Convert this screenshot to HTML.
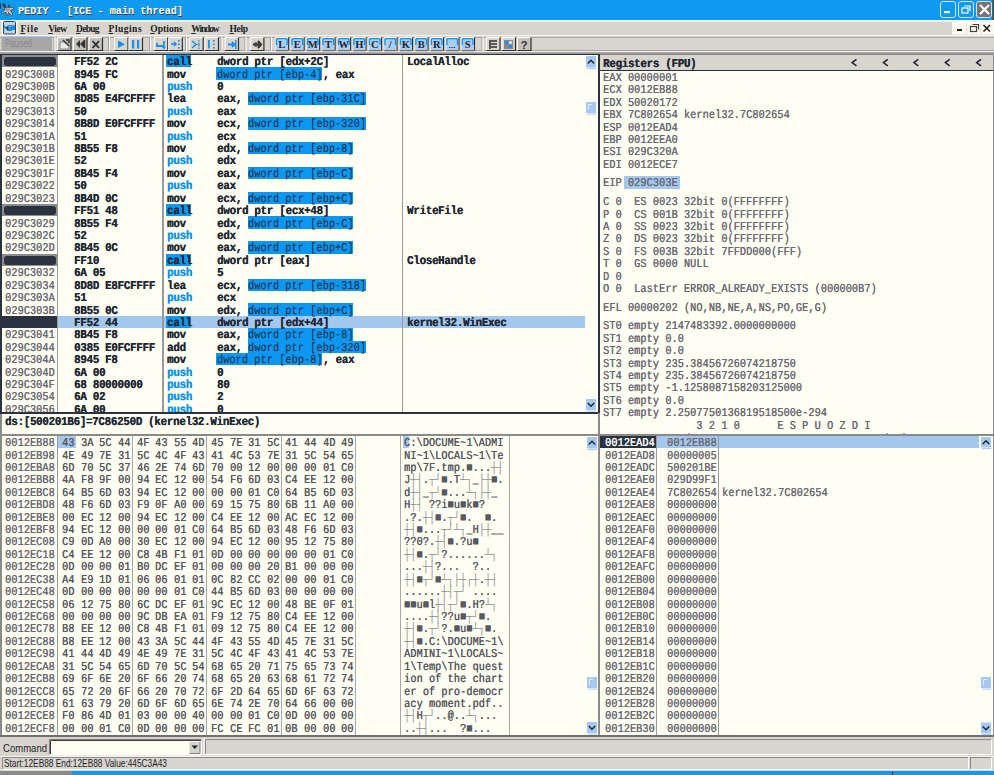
<!DOCTYPE html>
<html><head><meta charset="utf-8"><style>
html,body{margin:0;padding:0;width:994px;height:775px;overflow:hidden;background:#d6d3ce;position:relative}
div{position:absolute}
.t{white-space:pre}
</style></head><body>
<svg style="position:absolute;left:0;top:0" width="994" height="54" viewBox="0 0 994 54"><rect x="0" y="0" width="994" height="20" fill="#0e9af0"/><rect x="0" y="3" width="0.9" height="5.5" fill="#3a2a2a"/><path d="M2.3 3.6 L4.2 3.2 L5.6 5 L5.8 7.6 L4.4 8 L3 6 Z" fill="#2e3440"/><path d="M8.3 4.4 H9.6 V7.8 H8.3 Z" fill="#2e3440"/><path d="M4.6 8 L9 7.6 L13.6 7.3 L13.8 9.2 L10.4 10.2 L12.8 14.6 L11.6 15.6 L8.4 12.4 L7.8 15.4 L6.6 15 L6 12.2 L2 13.4 L1.4 12.2 L4.4 10.4 Z" fill="#c8c8c8" stroke="#3a3030" stroke-width="0.7"/><path d="M5 9.2 L10 8.6 L9 11 L6.5 11.2 Z" fill="#9a9a9a"/><text x="18" y="14" textLength="165" lengthAdjust="spacingAndGlyphs" font-family="Liberation Mono" font-weight="bold" font-size="10" fill="#3c3c3c" transform="translate(0.8,0.8)">PEDIY - [ICE - main thread]</text><text x="18" y="14" textLength="165" lengthAdjust="spacingAndGlyphs" font-family="Liberation Mono" font-weight="bold" font-size="10" fill="#ffffff">PEDIY - [ICE - main thread]</text><rect x="940.5" y="1.5" width="15" height="16" rx="2.5" fill="#0e9af0" stroke="#d6e6f6" stroke-width="1"/><rect x="958.5" y="1.5" width="15" height="16" rx="2.5" fill="#0e9af0" stroke="#d6e6f6" stroke-width="1"/><rect x="976.5" y="1.5" width="15" height="16" rx="2.5" fill="#767676" stroke="#d6e6f6" stroke-width="1"/><rect x="944" y="11" width="6" height="2.2" fill="#fff"/><rect x="962" y="8" width="6" height="5" fill="none" stroke="#fff" stroke-width="1.2"/><path d="M964 6 H970 V11" fill="none" stroke="#fff" stroke-width="1.2"/><path d="M980 5 L989 14 M989 5 L980 14" stroke="#fff" stroke-width="2.2"/><rect x="992.5" y="0" width="1.5" height="20" fill="#444"/><rect x="0" y="21.5" width="994" height="13.5" fill="#d8d5ce"/><rect x="0" y="20" width="994" height="1.7" fill="#fbf9ee"/><rect x="1.5" y="21" width="16" height="14" fill="#fbfaf0"/><rect x="3.5" y="21.5" width="12" height="12.5" rx="1" fill="#b4d6f8" stroke="#3a3e48" stroke-width="1"/><path d="M4 25.5 L8 27.5 L15 25 V30 L8 30 L4 28 Z" fill="#0c94f0"/><text x="6.3" y="31" font-family="Liberation Serif" font-weight="bold" font-style="italic" font-size="9" fill="#2a2a30">C</text><text x="20.4" y="32" textLength="17.6" lengthAdjust="spacing" font-family="Liberation Serif" font-weight="bold" font-size="9.5" fill="#1c1c1c">File</text><rect x="20.4" y="33" width="4.5" height="0.9" fill="#1c1c1c"/><text x="48.2" y="32" textLength="18.8" lengthAdjust="spacing" font-family="Liberation Serif" font-weight="bold" font-size="9.5" fill="#1c1c1c">View</text><rect x="48.2" y="33" width="4.5" height="0.9" fill="#1c1c1c"/><text x="76" y="32" textLength="23.5" lengthAdjust="spacing" font-family="Liberation Serif" font-weight="bold" font-size="9.5" fill="#1c1c1c">Debug</text><rect x="76" y="33" width="4.5" height="0.9" fill="#1c1c1c"/><text x="108.6" y="32" textLength="33" lengthAdjust="spacing" font-family="Liberation Serif" font-weight="bold" font-size="9.5" fill="#1c1c1c">Plugins</text><rect x="108.6" y="33" width="4.5" height="0.9" fill="#1c1c1c"/><text x="150.3" y="32" textLength="32.5" lengthAdjust="spacing" font-family="Liberation Serif" font-weight="bold" font-size="9.5" fill="#1c1c1c">Options</text><rect x="150.3" y="33" width="4.5" height="0.9" fill="#1c1c1c"/><text x="191.2" y="32" textLength="28.5" lengthAdjust="spacing" font-family="Liberation Serif" font-weight="bold" font-size="9.5" fill="#1c1c1c">Window</text><rect x="191.2" y="33" width="4.5" height="0.9" fill="#1c1c1c"/><text x="229.5" y="32" textLength="18.5" lengthAdjust="spacing" font-family="Liberation Serif" font-weight="bold" font-size="9.5" fill="#1c1c1c">Help</text><rect x="229.5" y="33" width="4.5" height="0.9" fill="#1c1c1c"/><rect x="952" y="21.5" width="42" height="13" fill="#fbfaf0"/><rect x="966" y="22" width="1" height="12" fill="#e8e6dc"/><rect x="980" y="22" width="1" height="12" fill="#e8e6dc"/><rect x="957" y="29" width="5" height="2" fill="#222"/><rect x="970.5" y="26.5" width="6" height="5" fill="none" stroke="#444" stroke-width="1.2"/><path d="M972.5 24.5 H978.5 V29.5" fill="none" stroke="#444" stroke-width="1.2"/><path d="M983.5 25 L990 31.5 M990 25 L983.5 31.5" stroke="#222" stroke-width="1.6"/><rect x="0" y="35" width="994" height="1" fill="#f6f4ec"/><rect x="0" y="36" width="994" height="16" fill="#d8d5ce"/><rect x="0" y="50" width="994" height="1" fill="#a4a4a2"/><rect x="0" y="37" width="994" height="1" fill="#a8a8a6"/><rect x="0" y="51" width="994" height="1" fill="#f4f2ea"/><rect x="0" y="52" width="994" height="1" fill="#a8a8a8"/><rect x="0" y="53" width="994" height="1" fill="#9a9a9a"/><rect x="1.5" y="36" width="50.5" height="14.5" fill="#a7a7a7"/><rect x="1.5" y="36" width="50.5" height="1" fill="#a6c8ee"/><text x="5" y="47" textLength="27" lengthAdjust="spacingAndGlyphs" font-family="Liberation Sans" font-size="10" fill="#888">Paused</text><rect x="53.5" y="37" width="1" height="14" fill="#a0a0a0"/><rect x="54.5" y="37" width="1" height="14" fill="#fff"/><rect x="108" y="37" width="1" height="14" fill="#a0a0a0"/><rect x="109" y="37" width="1" height="14" fill="#fff"/><rect x="149" y="37" width="1" height="14" fill="#a0a0a0"/><rect x="150" y="37" width="1" height="14" fill="#fff"/><rect x="185" y="37" width="1" height="14" fill="#a0a0a0"/><rect x="186" y="37" width="1" height="14" fill="#fff"/><rect x="220.5" y="37" width="1" height="14" fill="#a0a0a0"/><rect x="221.5" y="37" width="1" height="14" fill="#fff"/><rect x="244.5" y="37" width="1" height="14" fill="#a0a0a0"/><rect x="245.5" y="37" width="1" height="14" fill="#fff"/><rect x="270" y="37" width="1" height="14" fill="#a0a0a0"/><rect x="271" y="37" width="1" height="14" fill="#fff"/><rect x="481.5" y="37" width="1" height="14" fill="#a0a0a0"/><rect x="482.5" y="37" width="1" height="14" fill="#fff"/><rect x="57.5" y="37.5" width="13.5" height="13" fill="#c4c2bc"/><path d="M57.5 50.5 V37.5 H71.0" fill="none" stroke="#fff" stroke-width="1"/><path d="M71.0 37.5 V50.5 H57.5" fill="none" stroke="#2e2e2e" stroke-width="1.2"/><path d="M60 42 H64 L65 43 H69 V49 H60 Z" fill="#e8e8e8" stroke="#777" stroke-width="0.8"/><path d="M63 40 L69 46 M66 40 H69 V43" stroke="#333" stroke-width="1.4" fill="none"/><rect x="73.5" y="37.5" width="13.5" height="13" fill="#c4c2bc"/><path d="M73.5 50.5 V37.5 H87.0" fill="none" stroke="#fff" stroke-width="1"/><path d="M87.0 37.5 V50.5 H73.5" fill="none" stroke="#2e2e2e" stroke-width="1.2"/><path d="M76 44 L80 40 V48 Z M80 44 L84 40 V48 Z" fill="#333"/><rect x="84" y="40" width="1.3" height="8" fill="#333"/><rect x="89" y="37.5" width="13.5" height="13" fill="#c4c2bc"/><path d="M89 50.5 V37.5 H102.5" fill="none" stroke="#fff" stroke-width="1"/><path d="M102.5 37.5 V50.5 H89" fill="none" stroke="#2e2e2e" stroke-width="1.2"/><path d="M92.5 41 L99 48 M99 41 L92.5 48" stroke="#2a2a2a" stroke-width="1.8"/><rect x="114.5" y="37.5" width="13.5" height="13" fill="#d8d5ce"/><path d="M114.5 50.5 V37.5 H128.0" fill="none" stroke="#fff" stroke-width="1"/><path d="M128.0 37.5 V50.5 H114.5" fill="none" stroke="#2e2e2e" stroke-width="1.2"/><path d="M118 40.5 L125 44.2 L118 48 Z" fill="#1a8fec"/><rect x="129" y="37.5" width="13.5" height="13" fill="#d8d5ce"/><path d="M129 50.5 V37.5 H142.5" fill="none" stroke="#fff" stroke-width="1"/><path d="M142.5 37.5 V50.5 H129" fill="none" stroke="#2e2e2e" stroke-width="1.2"/><rect x="132" y="40" width="2.2" height="8.5" fill="#1a8fec"/><rect x="137" y="40" width="2.2" height="8.5" fill="#1a8fec"/><rect x="154.3" y="37.5" width="13.5" height="13" fill="#d8d5ce"/><path d="M154.3 50.5 V37.5 H167.8" fill="none" stroke="#fff" stroke-width="1"/><path d="M167.8 37.5 V50.5 H154.3" fill="none" stroke="#2e2e2e" stroke-width="1.2"/><path d="M157 43 V46 H164 V41" fill="none" stroke="#1a8fec" stroke-width="1.8"/><path d="M162 47 H166 L164 49.5 Z" fill="#1a8fec"/><rect x="168.8" y="37.5" width="13.5" height="13" fill="#d8d5ce"/><path d="M168.8 50.5 V37.5 H182.3" fill="none" stroke="#fff" stroke-width="1"/><path d="M182.3 37.5 V50.5 H168.8" fill="none" stroke="#2e2e2e" stroke-width="1.2"/><path d="M171 44 H176 M174 42 L176 44 L174 46" fill="none" stroke="#1a8fec" stroke-width="1.6"/><rect x="178" y="40" width="1.6" height="1.6" fill="#1a8fec"/><rect x="178" y="43.5" width="1.6" height="1.6" fill="#1a8fec"/><rect x="178" y="47" width="1.6" height="1.6" fill="#1a8fec"/><rect x="189.7" y="37.5" width="13.5" height="13" fill="#d8d5ce"/><path d="M189.7 50.5 V37.5 H203.2" fill="none" stroke="#fff" stroke-width="1"/><path d="M203.2 37.5 V50.5 H189.7" fill="none" stroke="#2e2e2e" stroke-width="1.2"/><path d="M192 41 L196 44.5 L192 48" fill="none" stroke="#1a8fec" stroke-width="1.6"/><path d="M197 44.5 H200 M199 40 V49" fill="none" stroke="#1a8fec" stroke-width="1.2" stroke-dasharray="1.5 1"/><rect x="205" y="37.5" width="13.5" height="13" fill="#d8d5ce"/><path d="M205 50.5 V37.5 H218.5" fill="none" stroke="#fff" stroke-width="1"/><path d="M218.5 37.5 V50.5 H205" fill="none" stroke="#2e2e2e" stroke-width="1.2"/><rect x="208" y="40" width="1.8" height="8.5" fill="#1a8fec"/><rect x="213" y="40" width="1.6" height="1.6" fill="#1a8fec"/><rect x="213" y="43.5" width="1.6" height="1.6" fill="#1a8fec"/><rect x="213" y="47" width="1.6" height="1.6" fill="#1a8fec"/><rect x="225" y="37.5" width="13.5" height="13" fill="#d8d5ce"/><path d="M225 50.5 V37.5 H238.5" fill="none" stroke="#fff" stroke-width="1"/><path d="M238.5 37.5 V50.5 H225" fill="none" stroke="#2e2e2e" stroke-width="1.2"/><path d="M228 44.5 H234 M232 42 L234.5 44.5 L232 47" fill="none" stroke="#1a8fec" stroke-width="1.8"/><rect x="235" y="40" width="1.5" height="9" fill="#1a8fec"/><rect x="250.4" y="37.5" width="13.5" height="13" fill="#d8d5ce"/><path d="M250.4 50.5 V37.5 H263.9" fill="none" stroke="#fff" stroke-width="1"/><path d="M263.9 37.5 V50.5 H250.4" fill="none" stroke="#2e2e2e" stroke-width="1.2"/><path d="M253 44.5 H261 M258 41 L261 44.5 L258 48" fill="none" stroke="#333" stroke-width="2"/><circle cx="256" cy="44.5" r="2.2" fill="#444"/><rect x="275.30" y="37" width="13.5" height="14" fill="#fbfaf2"/><rect x="275.80" y="38" width="12" height="11.5" fill="#a9cdf3"/><path d="M276.50 45 V39.5 L277.50 38.7 H286.10 L287.10 39.5 V45" fill="none" stroke="#0c94f0" stroke-width="1.3"/><rect x="288.10" y="37.3" width="1.1" height="13.4" fill="#2a2e36"/><rect x="275.80" y="49.8" width="12.6" height="1.4" fill="#6c6c6c"/><text x="281.80" y="47.5" text-anchor="middle" font-family="Liberation Serif" font-weight="bold" font-size="10.5" fill="#1e2430">L</text><rect x="290.79" y="37" width="13.5" height="14" fill="#fbfaf2"/><rect x="291.29" y="38" width="12" height="11.5" fill="#a9cdf3"/><path d="M291.99 45 V39.5 L292.99 38.7 H301.59 L302.59 39.5 V45" fill="none" stroke="#0c94f0" stroke-width="1.3"/><rect x="303.59" y="37.3" width="1.1" height="13.4" fill="#2a2e36"/><rect x="291.29" y="49.8" width="12.6" height="1.4" fill="#6c6c6c"/><text x="297.29" y="47.5" text-anchor="middle" font-family="Liberation Serif" font-weight="bold" font-size="10.5" fill="#1e2430">E</text><rect x="306.28" y="37" width="13.5" height="14" fill="#fbfaf2"/><rect x="306.78" y="38" width="12" height="11.5" fill="#a9cdf3"/><path d="M307.48 45 V39.5 L308.48 38.7 H317.08 L318.08 39.5 V45" fill="none" stroke="#0c94f0" stroke-width="1.3"/><rect x="319.08" y="37.3" width="1.1" height="13.4" fill="#2a2e36"/><rect x="306.78" y="49.8" width="12.6" height="1.4" fill="#6c6c6c"/><text x="312.78" y="47.5" text-anchor="middle" font-family="Liberation Serif" font-weight="bold" font-size="10.5" fill="#1e2430">M</text><rect x="321.77" y="37" width="13.5" height="14" fill="#fbfaf2"/><rect x="322.27" y="38" width="12" height="11.5" fill="#a9cdf3"/><path d="M322.97 45 V39.5 L323.97 38.7 H332.57 L333.57 39.5 V45" fill="none" stroke="#0c94f0" stroke-width="1.3"/><rect x="334.57" y="37.3" width="1.1" height="13.4" fill="#2a2e36"/><rect x="322.27" y="49.8" width="12.6" height="1.4" fill="#6c6c6c"/><text x="328.27" y="47.5" text-anchor="middle" font-family="Liberation Serif" font-weight="bold" font-size="10.5" fill="#1e2430">T</text><rect x="337.26" y="37" width="13.5" height="14" fill="#fbfaf2"/><rect x="337.76" y="38" width="12" height="11.5" fill="#a9cdf3"/><path d="M338.46 45 V39.5 L339.46 38.7 H348.06 L349.06 39.5 V45" fill="none" stroke="#0c94f0" stroke-width="1.3"/><rect x="350.06" y="37.3" width="1.1" height="13.4" fill="#2a2e36"/><rect x="337.76" y="49.8" width="12.6" height="1.4" fill="#6c6c6c"/><text x="343.76" y="47.5" text-anchor="middle" font-family="Liberation Serif" font-weight="bold" font-size="10.5" fill="#1e2430">W</text><rect x="352.75" y="37" width="13.5" height="14" fill="#fbfaf2"/><rect x="353.25" y="38" width="12" height="11.5" fill="#a9cdf3"/><path d="M353.95 45 V39.5 L354.95 38.7 H363.55 L364.55 39.5 V45" fill="none" stroke="#0c94f0" stroke-width="1.3"/><rect x="365.55" y="37.3" width="1.1" height="13.4" fill="#2a2e36"/><rect x="353.25" y="49.8" width="12.6" height="1.4" fill="#6c6c6c"/><text x="359.25" y="47.5" text-anchor="middle" font-family="Liberation Serif" font-weight="bold" font-size="10.5" fill="#1e2430">H</text><rect x="368.24" y="37" width="13.5" height="14" fill="#fbfaf2"/><rect x="368.74" y="38" width="12" height="11.5" fill="#a9cdf3"/><path d="M369.44 45 V39.5 L370.44 38.7 H379.04 L380.04 39.5 V45" fill="none" stroke="#0c94f0" stroke-width="1.3"/><rect x="381.04" y="37.3" width="1.1" height="13.4" fill="#2a2e36"/><rect x="368.74" y="49.8" width="12.6" height="1.4" fill="#6c6c6c"/><text x="374.74" y="47.5" text-anchor="middle" font-family="Liberation Serif" font-weight="bold" font-size="10.5" fill="#1e2430">C</text><rect x="383.73" y="37" width="13.5" height="14" fill="#fbfaf2"/><rect x="384.23" y="38" width="12" height="11.5" fill="#a9cdf3"/><path d="M384.93 45 V39.5 L385.93 38.7 H394.53 L395.53 39.5 V45" fill="none" stroke="#0c94f0" stroke-width="1.3"/><rect x="396.53" y="37.3" width="1.1" height="13.4" fill="#2a2e36"/><rect x="384.23" y="49.8" width="12.6" height="1.4" fill="#6c6c6c"/><text x="390.23" y="47.5" text-anchor="middle" font-family="Liberation Serif" font-weight="bold" font-size="10.5" fill="#1e2430">/</text><rect x="399.22" y="37" width="13.5" height="14" fill="#fbfaf2"/><rect x="399.72" y="38" width="12" height="11.5" fill="#a9cdf3"/><path d="M400.42 45 V39.5 L401.42 38.7 H410.02 L411.02 39.5 V45" fill="none" stroke="#0c94f0" stroke-width="1.3"/><rect x="412.02" y="37.3" width="1.1" height="13.4" fill="#2a2e36"/><rect x="399.72" y="49.8" width="12.6" height="1.4" fill="#6c6c6c"/><text x="405.72" y="47.5" text-anchor="middle" font-family="Liberation Serif" font-weight="bold" font-size="10.5" fill="#1e2430">K</text><rect x="414.71" y="37" width="13.5" height="14" fill="#fbfaf2"/><rect x="415.21" y="38" width="12" height="11.5" fill="#a9cdf3"/><path d="M415.91 45 V39.5 L416.91 38.7 H425.51 L426.51 39.5 V45" fill="none" stroke="#0c94f0" stroke-width="1.3"/><rect x="427.51" y="37.3" width="1.1" height="13.4" fill="#2a2e36"/><rect x="415.21" y="49.8" width="12.6" height="1.4" fill="#6c6c6c"/><text x="421.21" y="47.5" text-anchor="middle" font-family="Liberation Serif" font-weight="bold" font-size="10.5" fill="#1e2430">B</text><rect x="430.20" y="37" width="13.5" height="14" fill="#fbfaf2"/><rect x="430.70" y="38" width="12" height="11.5" fill="#a9cdf3"/><path d="M431.40 45 V39.5 L432.40 38.7 H441.00 L442.00 39.5 V45" fill="none" stroke="#0c94f0" stroke-width="1.3"/><rect x="443.00" y="37.3" width="1.1" height="13.4" fill="#2a2e36"/><rect x="430.70" y="49.8" width="12.6" height="1.4" fill="#6c6c6c"/><text x="436.70" y="47.5" text-anchor="middle" font-family="Liberation Serif" font-weight="bold" font-size="10.5" fill="#1e2430">R</text><rect x="445.69" y="37" width="13.5" height="14" fill="#fbfaf2"/><rect x="446.19" y="38" width="12" height="11.5" fill="#a9cdf3"/><path d="M446.89 45 V39.5 L447.89 38.7 H456.49 L457.49 39.5 V45" fill="none" stroke="#0c94f0" stroke-width="1.3"/><rect x="458.49" y="37.3" width="1.1" height="13.4" fill="#2a2e36"/><rect x="446.19" y="49.8" width="12.6" height="1.4" fill="#6c6c6c"/><text x="452.19" y="47.5" text-anchor="middle" font-family="Liberation Sans" font-weight="bold" font-size="8" fill="#1e2430">...</text><rect x="461.18" y="37" width="13.5" height="14" fill="#fbfaf2"/><rect x="461.68" y="38" width="12" height="11.5" fill="#a9cdf3"/><path d="M462.38 45 V39.5 L463.38 38.7 H471.98 L472.98 39.5 V45" fill="none" stroke="#0c94f0" stroke-width="1.3"/><rect x="473.98" y="37.3" width="1.1" height="13.4" fill="#2a2e36"/><rect x="461.68" y="49.8" width="12.6" height="1.4" fill="#6c6c6c"/><text x="467.68" y="47.5" text-anchor="middle" font-family="Liberation Serif" font-weight="bold" font-size="10.5" fill="#1e2430">S</text><rect x="486.5" y="37.5" width="13.5" height="13" fill="#d8d5ce"/><path d="M486.5 50.5 V37.5 H500.0" fill="none" stroke="#fff" stroke-width="1"/><path d="M500.0 37.5 V50.5 H486.5" fill="none" stroke="#2e2e2e" stroke-width="1.2"/><path d="M489 41 H497 M489 44 H497 M489 47 H497" stroke="#333" stroke-width="1.4"/><rect x="489" y="40" width="2" height="9" fill="#555"/><rect x="502" y="37.5" width="13.5" height="13" fill="#d8d5ce"/><path d="M502 50.5 V37.5 H515.5" fill="none" stroke="#fff" stroke-width="1"/><path d="M515.5 37.5 V50.5 H502" fill="none" stroke="#2e2e2e" stroke-width="1.2"/><rect x="504" y="40" width="9" height="9" fill="#888"/><rect x="505" y="41" width="3" height="3" fill="#1a8fec"/><rect x="509" y="45" width="3" height="3" fill="#1a8fec"/><rect x="509" y="41" width="3" height="3" fill="#cde"/><rect x="517.5" y="37.5" width="13.5" height="13" fill="#c4c2bc"/><path d="M517.5 50.5 V37.5 H531.0" fill="none" stroke="#fff" stroke-width="1"/><path d="M531.0 37.5 V50.5 H517.5" fill="none" stroke="#2e2e2e" stroke-width="1.2"/><text x="524" y="49" text-anchor="middle" font-family="Liberation Sans" font-weight="bold" font-size="11" fill="#333">?</text></svg>
<div style="left:0.00px;top:54.00px;width:994.00px;height:683.00px;background:#fffef2;"></div>
<div style="left:0.00px;top:54.00px;width:599.00px;height:1.00px;background:#2b3340;"></div>
<div style="left:599.00px;top:54.00px;width:395.00px;height:1.00px;background:#8a8a8a;"></div>
<div style="left:0.00px;top:54.00px;width:2.00px;height:359.00px;background:#2b3340;"></div>
<div style="left:0.00px;top:413.00px;width:2.00px;height:324.00px;background:#8a8a8a;"></div>
<div style="left:0;top:55px;width:598px;height:357px;overflow:hidden"><div style="left:0;top:-55px;width:598px;height:412px">
<div style="left:2.00px;top:55.00px;width:55.00px;height:12.42px;background:#8c8c90;"></div>
<div style="left:3.50px;top:56.80px;width:52.50px;height:9.22px;background:#2b3340;border-radius:3px"></div>
<div style="left:2.00px;top:204.04px;width:55.00px;height:12.42px;background:#8c8c90;"></div>
<div style="left:3.50px;top:205.84px;width:52.50px;height:9.22px;background:#2b3340;border-radius:3px"></div>
<div style="left:2.00px;top:253.72px;width:55.00px;height:12.42px;background:#8c8c90;"></div>
<div style="left:3.50px;top:255.52px;width:52.50px;height:9.22px;background:#2b3340;border-radius:3px"></div>
<div style="left:2.00px;top:315.82px;width:55.00px;height:12.42px;background:#2b3340;"></div>
<div style="left:57.00px;top:315.82px;width:528.00px;height:12.42px;background:#a4c7ee;"></div>
<div style="left:166.00px;top:55.00px;width:25.38px;height:12.42px;background:#0c97f2;"></div>
<div style="left:216.40px;top:67.42px;width:105.74px;height:12.42px;background:#0c97f2;"></div>
<div style="left:247.50px;top:92.26px;width:118.18px;height:12.42px;background:#0c97f2;"></div>
<div style="left:247.50px;top:117.10px;width:118.18px;height:12.42px;background:#0c97f2;"></div>
<div style="left:247.50px;top:141.94px;width:105.74px;height:12.42px;background:#0c97f2;"></div>
<div style="left:247.50px;top:166.78px;width:105.74px;height:12.42px;background:#0c97f2;"></div>
<div style="left:247.50px;top:191.62px;width:105.74px;height:12.42px;background:#0c97f2;"></div>
<div style="left:166.00px;top:204.04px;width:25.38px;height:12.42px;background:#0c97f2;"></div>
<div style="left:247.50px;top:216.46px;width:105.74px;height:12.42px;background:#0c97f2;"></div>
<div style="left:247.50px;top:241.30px;width:105.74px;height:12.42px;background:#0c97f2;"></div>
<div style="left:166.00px;top:253.72px;width:25.38px;height:12.42px;background:#0c97f2;"></div>
<div style="left:247.50px;top:278.56px;width:118.18px;height:12.42px;background:#0c97f2;"></div>
<div style="left:247.50px;top:303.40px;width:105.74px;height:12.42px;background:#0c97f2;"></div>
<div style="left:166.00px;top:315.82px;width:25.38px;height:12.42px;background:#0c97f2;"></div>
<div style="left:247.50px;top:328.24px;width:105.74px;height:12.42px;background:#0c97f2;"></div>
<div style="left:247.50px;top:340.66px;width:118.18px;height:12.42px;background:#0c97f2;"></div>
<div style="left:216.40px;top:353.08px;width:105.74px;height:12.42px;background:#0c97f2;"></div>
<div style="left:57.00px;top:55.00px;width:1.00px;height:357.00px;background:#9a9a9a;"></div>
<div style="left:162.00px;top:55.00px;width:1.50px;height:357.00px;background:#9a9a9a;"></div>
<div style="left:402.00px;top:55.00px;width:1.00px;height:357.00px;background:#9a9a9a;"></div>
<div class="t" style="left:74.00px;top:56.11px;font:bold 12.0px/12px 'Liberation Mono',monospace;letter-spacing:-0.289px;color:#222833;text-rendering:geometricPrecision;transform:scaleX(0.9);transform-origin:0 0;text-shadow:0.3px 0 0 #222833;">FF52 2C</div>
<div class="t" style="left:166.60px;top:56.11px;font:bold 12.0px/12px 'Liberation Mono',monospace;letter-spacing:-0.289px;color:#222833;text-rendering:geometricPrecision;transform:scaleX(0.9);transform-origin:0 0;text-shadow:0.3px 0 0 #222833;">call</div>
<div class="t" style="left:216.80px;top:56.11px;font:bold 12.0px/12px 'Liberation Mono',monospace;letter-spacing:-0.289px;color:#222833;text-rendering:geometricPrecision;transform:scaleX(0.9);transform-origin:0 0;text-shadow:0.3px 0 0 #222833;">dword ptr [edx+2C]</div>
<div class="t" style="left:406.80px;top:56.11px;font:bold 12.0px/12px 'Liberation Mono',monospace;letter-spacing:-0.289px;color:#222833;text-rendering:geometricPrecision;transform:scaleX(0.9);transform-origin:0 0;text-shadow:0.3px 0 0 #222833;">LocalAlloc</div>
<div class="t" style="left:5.40px;top:68.53px;font:normal 12.0px/12px 'Liberation Mono',monospace;letter-spacing:0.118px;color:#6a6a72;text-rendering:geometricPrecision;transform:scaleX(0.85);transform-origin:0 0;text-shadow:0.25px 0 0 #6a6a72;">029C3008</div>
<div class="t" style="left:74.00px;top:68.53px;font:bold 12.0px/12px 'Liberation Mono',monospace;letter-spacing:-0.289px;color:#222833;text-rendering:geometricPrecision;transform:scaleX(0.9);transform-origin:0 0;text-shadow:0.3px 0 0 #222833;">8945 FC</div>
<div class="t" style="left:166.60px;top:68.53px;font:bold 12.0px/12px 'Liberation Mono',monospace;letter-spacing:-0.289px;color:#222833;text-rendering:geometricPrecision;transform:scaleX(0.9);transform-origin:0 0;text-shadow:0.3px 0 0 #222833;">mov</div>
<div class="t" style="left:216.80px;top:68.53px;font:normal 12.0px/12px 'Liberation Mono',monospace;letter-spacing:0.118px;color:#1c2433;text-rendering:geometricPrecision;transform:scaleX(0.85);transform-origin:0 0;">dword ptr [ebp-4]</div>
<div class="t" style="left:322.54px;top:68.53px;font:bold 12.0px/12px 'Liberation Mono',monospace;letter-spacing:-0.289px;color:#222833;text-rendering:geometricPrecision;transform:scaleX(0.9);transform-origin:0 0;text-shadow:0.3px 0 0 #222833;">, eax</div>
<div class="t" style="left:5.40px;top:80.95px;font:normal 12.0px/12px 'Liberation Mono',monospace;letter-spacing:0.118px;color:#6a6a72;text-rendering:geometricPrecision;transform:scaleX(0.85);transform-origin:0 0;text-shadow:0.25px 0 0 #6a6a72;">029C300B</div>
<div class="t" style="left:74.00px;top:80.95px;font:bold 12.0px/12px 'Liberation Mono',monospace;letter-spacing:-0.289px;color:#222833;text-rendering:geometricPrecision;transform:scaleX(0.9);transform-origin:0 0;text-shadow:0.3px 0 0 #222833;">6A 00</div>
<div class="t" style="left:166.60px;top:80.95px;font:bold 12.0px/12px 'Liberation Mono',monospace;letter-spacing:-0.289px;color:#0c94f0;text-rendering:geometricPrecision;transform:scaleX(0.9);transform-origin:0 0;text-shadow:0.3px 0 0 #0c94f0;">push</div>
<div class="t" style="left:216.80px;top:80.95px;font:bold 12.0px/12px 'Liberation Mono',monospace;letter-spacing:-0.289px;color:#222833;text-rendering:geometricPrecision;transform:scaleX(0.9);transform-origin:0 0;text-shadow:0.3px 0 0 #222833;">0</div>
<div class="t" style="left:5.40px;top:93.37px;font:normal 12.0px/12px 'Liberation Mono',monospace;letter-spacing:0.118px;color:#6a6a72;text-rendering:geometricPrecision;transform:scaleX(0.85);transform-origin:0 0;text-shadow:0.25px 0 0 #6a6a72;">029C300D</div>
<div class="t" style="left:74.00px;top:93.37px;font:bold 12.0px/12px 'Liberation Mono',monospace;letter-spacing:-0.289px;color:#222833;text-rendering:geometricPrecision;transform:scaleX(0.9);transform-origin:0 0;text-shadow:0.3px 0 0 #222833;">8D85 E4FCFFFF</div>
<div class="t" style="left:166.60px;top:93.37px;font:bold 12.0px/12px 'Liberation Mono',monospace;letter-spacing:-0.289px;color:#222833;text-rendering:geometricPrecision;transform:scaleX(0.9);transform-origin:0 0;text-shadow:0.3px 0 0 #222833;">lea</div>
<div class="t" style="left:216.80px;top:93.37px;font:bold 12.0px/12px 'Liberation Mono',monospace;letter-spacing:-0.289px;color:#222833;text-rendering:geometricPrecision;transform:scaleX(0.9);transform-origin:0 0;text-shadow:0.3px 0 0 #222833;">eax, </div>
<div class="t" style="left:247.90px;top:93.37px;font:normal 12.0px/12px 'Liberation Mono',monospace;letter-spacing:0.118px;color:#1c2433;text-rendering:geometricPrecision;transform:scaleX(0.85);transform-origin:0 0;">dword ptr [ebp-31C]</div>
<div class="t" style="left:5.40px;top:105.79px;font:normal 12.0px/12px 'Liberation Mono',monospace;letter-spacing:0.118px;color:#6a6a72;text-rendering:geometricPrecision;transform:scaleX(0.85);transform-origin:0 0;text-shadow:0.25px 0 0 #6a6a72;">029C3013</div>
<div class="t" style="left:74.00px;top:105.79px;font:bold 12.0px/12px 'Liberation Mono',monospace;letter-spacing:-0.289px;color:#222833;text-rendering:geometricPrecision;transform:scaleX(0.9);transform-origin:0 0;text-shadow:0.3px 0 0 #222833;">50</div>
<div class="t" style="left:166.60px;top:105.79px;font:bold 12.0px/12px 'Liberation Mono',monospace;letter-spacing:-0.289px;color:#0c94f0;text-rendering:geometricPrecision;transform:scaleX(0.9);transform-origin:0 0;text-shadow:0.3px 0 0 #0c94f0;">push</div>
<div class="t" style="left:216.80px;top:105.79px;font:bold 12.0px/12px 'Liberation Mono',monospace;letter-spacing:-0.289px;color:#222833;text-rendering:geometricPrecision;transform:scaleX(0.9);transform-origin:0 0;text-shadow:0.3px 0 0 #222833;">eax</div>
<div class="t" style="left:5.40px;top:118.21px;font:normal 12.0px/12px 'Liberation Mono',monospace;letter-spacing:0.118px;color:#6a6a72;text-rendering:geometricPrecision;transform:scaleX(0.85);transform-origin:0 0;text-shadow:0.25px 0 0 #6a6a72;">029C3014</div>
<div class="t" style="left:74.00px;top:118.21px;font:bold 12.0px/12px 'Liberation Mono',monospace;letter-spacing:-0.289px;color:#222833;text-rendering:geometricPrecision;transform:scaleX(0.9);transform-origin:0 0;text-shadow:0.3px 0 0 #222833;">8B8D E0FCFFFF</div>
<div class="t" style="left:166.60px;top:118.21px;font:bold 12.0px/12px 'Liberation Mono',monospace;letter-spacing:-0.289px;color:#222833;text-rendering:geometricPrecision;transform:scaleX(0.9);transform-origin:0 0;text-shadow:0.3px 0 0 #222833;">mov</div>
<div class="t" style="left:216.80px;top:118.21px;font:bold 12.0px/12px 'Liberation Mono',monospace;letter-spacing:-0.289px;color:#222833;text-rendering:geometricPrecision;transform:scaleX(0.9);transform-origin:0 0;text-shadow:0.3px 0 0 #222833;">ecx, </div>
<div class="t" style="left:247.90px;top:118.21px;font:normal 12.0px/12px 'Liberation Mono',monospace;letter-spacing:0.118px;color:#1c2433;text-rendering:geometricPrecision;transform:scaleX(0.85);transform-origin:0 0;">dword ptr [ebp-320]</div>
<div class="t" style="left:5.40px;top:130.63px;font:normal 12.0px/12px 'Liberation Mono',monospace;letter-spacing:0.118px;color:#6a6a72;text-rendering:geometricPrecision;transform:scaleX(0.85);transform-origin:0 0;text-shadow:0.25px 0 0 #6a6a72;">029C301A</div>
<div class="t" style="left:74.00px;top:130.63px;font:bold 12.0px/12px 'Liberation Mono',monospace;letter-spacing:-0.289px;color:#222833;text-rendering:geometricPrecision;transform:scaleX(0.9);transform-origin:0 0;text-shadow:0.3px 0 0 #222833;">51</div>
<div class="t" style="left:166.60px;top:130.63px;font:bold 12.0px/12px 'Liberation Mono',monospace;letter-spacing:-0.289px;color:#0c94f0;text-rendering:geometricPrecision;transform:scaleX(0.9);transform-origin:0 0;text-shadow:0.3px 0 0 #0c94f0;">push</div>
<div class="t" style="left:216.80px;top:130.63px;font:bold 12.0px/12px 'Liberation Mono',monospace;letter-spacing:-0.289px;color:#222833;text-rendering:geometricPrecision;transform:scaleX(0.9);transform-origin:0 0;text-shadow:0.3px 0 0 #222833;">ecx</div>
<div class="t" style="left:5.40px;top:143.05px;font:normal 12.0px/12px 'Liberation Mono',monospace;letter-spacing:0.118px;color:#6a6a72;text-rendering:geometricPrecision;transform:scaleX(0.85);transform-origin:0 0;text-shadow:0.25px 0 0 #6a6a72;">029C301B</div>
<div class="t" style="left:74.00px;top:143.05px;font:bold 12.0px/12px 'Liberation Mono',monospace;letter-spacing:-0.289px;color:#222833;text-rendering:geometricPrecision;transform:scaleX(0.9);transform-origin:0 0;text-shadow:0.3px 0 0 #222833;">8B55 F8</div>
<div class="t" style="left:166.60px;top:143.05px;font:bold 12.0px/12px 'Liberation Mono',monospace;letter-spacing:-0.289px;color:#222833;text-rendering:geometricPrecision;transform:scaleX(0.9);transform-origin:0 0;text-shadow:0.3px 0 0 #222833;">mov</div>
<div class="t" style="left:216.80px;top:143.05px;font:bold 12.0px/12px 'Liberation Mono',monospace;letter-spacing:-0.289px;color:#222833;text-rendering:geometricPrecision;transform:scaleX(0.9);transform-origin:0 0;text-shadow:0.3px 0 0 #222833;">edx, </div>
<div class="t" style="left:247.90px;top:143.05px;font:normal 12.0px/12px 'Liberation Mono',monospace;letter-spacing:0.118px;color:#1c2433;text-rendering:geometricPrecision;transform:scaleX(0.85);transform-origin:0 0;">dword ptr [ebp-8]</div>
<div class="t" style="left:5.40px;top:155.47px;font:normal 12.0px/12px 'Liberation Mono',monospace;letter-spacing:0.118px;color:#6a6a72;text-rendering:geometricPrecision;transform:scaleX(0.85);transform-origin:0 0;text-shadow:0.25px 0 0 #6a6a72;">029C301E</div>
<div class="t" style="left:74.00px;top:155.47px;font:bold 12.0px/12px 'Liberation Mono',monospace;letter-spacing:-0.289px;color:#222833;text-rendering:geometricPrecision;transform:scaleX(0.9);transform-origin:0 0;text-shadow:0.3px 0 0 #222833;">52</div>
<div class="t" style="left:166.60px;top:155.47px;font:bold 12.0px/12px 'Liberation Mono',monospace;letter-spacing:-0.289px;color:#0c94f0;text-rendering:geometricPrecision;transform:scaleX(0.9);transform-origin:0 0;text-shadow:0.3px 0 0 #0c94f0;">push</div>
<div class="t" style="left:216.80px;top:155.47px;font:bold 12.0px/12px 'Liberation Mono',monospace;letter-spacing:-0.289px;color:#222833;text-rendering:geometricPrecision;transform:scaleX(0.9);transform-origin:0 0;text-shadow:0.3px 0 0 #222833;">edx</div>
<div class="t" style="left:5.40px;top:167.89px;font:normal 12.0px/12px 'Liberation Mono',monospace;letter-spacing:0.118px;color:#6a6a72;text-rendering:geometricPrecision;transform:scaleX(0.85);transform-origin:0 0;text-shadow:0.25px 0 0 #6a6a72;">029C301F</div>
<div class="t" style="left:74.00px;top:167.89px;font:bold 12.0px/12px 'Liberation Mono',monospace;letter-spacing:-0.289px;color:#222833;text-rendering:geometricPrecision;transform:scaleX(0.9);transform-origin:0 0;text-shadow:0.3px 0 0 #222833;">8B45 F4</div>
<div class="t" style="left:166.60px;top:167.89px;font:bold 12.0px/12px 'Liberation Mono',monospace;letter-spacing:-0.289px;color:#222833;text-rendering:geometricPrecision;transform:scaleX(0.9);transform-origin:0 0;text-shadow:0.3px 0 0 #222833;">mov</div>
<div class="t" style="left:216.80px;top:167.89px;font:bold 12.0px/12px 'Liberation Mono',monospace;letter-spacing:-0.289px;color:#222833;text-rendering:geometricPrecision;transform:scaleX(0.9);transform-origin:0 0;text-shadow:0.3px 0 0 #222833;">eax, </div>
<div class="t" style="left:247.90px;top:167.89px;font:normal 12.0px/12px 'Liberation Mono',monospace;letter-spacing:0.118px;color:#1c2433;text-rendering:geometricPrecision;transform:scaleX(0.85);transform-origin:0 0;">dword ptr [ebp-C]</div>
<div class="t" style="left:5.40px;top:180.31px;font:normal 12.0px/12px 'Liberation Mono',monospace;letter-spacing:0.118px;color:#6a6a72;text-rendering:geometricPrecision;transform:scaleX(0.85);transform-origin:0 0;text-shadow:0.25px 0 0 #6a6a72;">029C3022</div>
<div class="t" style="left:74.00px;top:180.31px;font:bold 12.0px/12px 'Liberation Mono',monospace;letter-spacing:-0.289px;color:#222833;text-rendering:geometricPrecision;transform:scaleX(0.9);transform-origin:0 0;text-shadow:0.3px 0 0 #222833;">50</div>
<div class="t" style="left:166.60px;top:180.31px;font:bold 12.0px/12px 'Liberation Mono',monospace;letter-spacing:-0.289px;color:#0c94f0;text-rendering:geometricPrecision;transform:scaleX(0.9);transform-origin:0 0;text-shadow:0.3px 0 0 #0c94f0;">push</div>
<div class="t" style="left:216.80px;top:180.31px;font:bold 12.0px/12px 'Liberation Mono',monospace;letter-spacing:-0.289px;color:#222833;text-rendering:geometricPrecision;transform:scaleX(0.9);transform-origin:0 0;text-shadow:0.3px 0 0 #222833;">eax</div>
<div class="t" style="left:5.40px;top:192.73px;font:normal 12.0px/12px 'Liberation Mono',monospace;letter-spacing:0.118px;color:#6a6a72;text-rendering:geometricPrecision;transform:scaleX(0.85);transform-origin:0 0;text-shadow:0.25px 0 0 #6a6a72;">029C3023</div>
<div class="t" style="left:74.00px;top:192.73px;font:bold 12.0px/12px 'Liberation Mono',monospace;letter-spacing:-0.289px;color:#222833;text-rendering:geometricPrecision;transform:scaleX(0.9);transform-origin:0 0;text-shadow:0.3px 0 0 #222833;">8B4D 0C</div>
<div class="t" style="left:166.60px;top:192.73px;font:bold 12.0px/12px 'Liberation Mono',monospace;letter-spacing:-0.289px;color:#222833;text-rendering:geometricPrecision;transform:scaleX(0.9);transform-origin:0 0;text-shadow:0.3px 0 0 #222833;">mov</div>
<div class="t" style="left:216.80px;top:192.73px;font:bold 12.0px/12px 'Liberation Mono',monospace;letter-spacing:-0.289px;color:#222833;text-rendering:geometricPrecision;transform:scaleX(0.9);transform-origin:0 0;text-shadow:0.3px 0 0 #222833;">ecx, </div>
<div class="t" style="left:247.90px;top:192.73px;font:normal 12.0px/12px 'Liberation Mono',monospace;letter-spacing:0.118px;color:#1c2433;text-rendering:geometricPrecision;transform:scaleX(0.85);transform-origin:0 0;">dword ptr [ebp+C]</div>
<div class="t" style="left:74.00px;top:205.15px;font:bold 12.0px/12px 'Liberation Mono',monospace;letter-spacing:-0.289px;color:#222833;text-rendering:geometricPrecision;transform:scaleX(0.9);transform-origin:0 0;text-shadow:0.3px 0 0 #222833;">FF51 48</div>
<div class="t" style="left:166.60px;top:205.15px;font:bold 12.0px/12px 'Liberation Mono',monospace;letter-spacing:-0.289px;color:#222833;text-rendering:geometricPrecision;transform:scaleX(0.9);transform-origin:0 0;text-shadow:0.3px 0 0 #222833;">call</div>
<div class="t" style="left:216.80px;top:205.15px;font:bold 12.0px/12px 'Liberation Mono',monospace;letter-spacing:-0.289px;color:#222833;text-rendering:geometricPrecision;transform:scaleX(0.9);transform-origin:0 0;text-shadow:0.3px 0 0 #222833;">dword ptr [ecx+48]</div>
<div class="t" style="left:406.80px;top:205.15px;font:bold 12.0px/12px 'Liberation Mono',monospace;letter-spacing:-0.289px;color:#222833;text-rendering:geometricPrecision;transform:scaleX(0.9);transform-origin:0 0;text-shadow:0.3px 0 0 #222833;">WriteFile</div>
<div class="t" style="left:5.40px;top:217.57px;font:normal 12.0px/12px 'Liberation Mono',monospace;letter-spacing:0.118px;color:#6a6a72;text-rendering:geometricPrecision;transform:scaleX(0.85);transform-origin:0 0;text-shadow:0.25px 0 0 #6a6a72;">029C3029</div>
<div class="t" style="left:74.00px;top:217.57px;font:bold 12.0px/12px 'Liberation Mono',monospace;letter-spacing:-0.289px;color:#222833;text-rendering:geometricPrecision;transform:scaleX(0.9);transform-origin:0 0;text-shadow:0.3px 0 0 #222833;">8B55 F4</div>
<div class="t" style="left:166.60px;top:217.57px;font:bold 12.0px/12px 'Liberation Mono',monospace;letter-spacing:-0.289px;color:#222833;text-rendering:geometricPrecision;transform:scaleX(0.9);transform-origin:0 0;text-shadow:0.3px 0 0 #222833;">mov</div>
<div class="t" style="left:216.80px;top:217.57px;font:bold 12.0px/12px 'Liberation Mono',monospace;letter-spacing:-0.289px;color:#222833;text-rendering:geometricPrecision;transform:scaleX(0.9);transform-origin:0 0;text-shadow:0.3px 0 0 #222833;">edx, </div>
<div class="t" style="left:247.90px;top:217.57px;font:normal 12.0px/12px 'Liberation Mono',monospace;letter-spacing:0.118px;color:#1c2433;text-rendering:geometricPrecision;transform:scaleX(0.85);transform-origin:0 0;">dword ptr [ebp-C]</div>
<div class="t" style="left:5.40px;top:229.99px;font:normal 12.0px/12px 'Liberation Mono',monospace;letter-spacing:0.118px;color:#6a6a72;text-rendering:geometricPrecision;transform:scaleX(0.85);transform-origin:0 0;text-shadow:0.25px 0 0 #6a6a72;">029C302C</div>
<div class="t" style="left:74.00px;top:229.99px;font:bold 12.0px/12px 'Liberation Mono',monospace;letter-spacing:-0.289px;color:#222833;text-rendering:geometricPrecision;transform:scaleX(0.9);transform-origin:0 0;text-shadow:0.3px 0 0 #222833;">52</div>
<div class="t" style="left:166.60px;top:229.99px;font:bold 12.0px/12px 'Liberation Mono',monospace;letter-spacing:-0.289px;color:#0c94f0;text-rendering:geometricPrecision;transform:scaleX(0.9);transform-origin:0 0;text-shadow:0.3px 0 0 #0c94f0;">push</div>
<div class="t" style="left:216.80px;top:229.99px;font:bold 12.0px/12px 'Liberation Mono',monospace;letter-spacing:-0.289px;color:#222833;text-rendering:geometricPrecision;transform:scaleX(0.9);transform-origin:0 0;text-shadow:0.3px 0 0 #222833;">edx</div>
<div class="t" style="left:5.40px;top:242.41px;font:normal 12.0px/12px 'Liberation Mono',monospace;letter-spacing:0.118px;color:#6a6a72;text-rendering:geometricPrecision;transform:scaleX(0.85);transform-origin:0 0;text-shadow:0.25px 0 0 #6a6a72;">029C302D</div>
<div class="t" style="left:74.00px;top:242.41px;font:bold 12.0px/12px 'Liberation Mono',monospace;letter-spacing:-0.289px;color:#222833;text-rendering:geometricPrecision;transform:scaleX(0.9);transform-origin:0 0;text-shadow:0.3px 0 0 #222833;">8B45 0C</div>
<div class="t" style="left:166.60px;top:242.41px;font:bold 12.0px/12px 'Liberation Mono',monospace;letter-spacing:-0.289px;color:#222833;text-rendering:geometricPrecision;transform:scaleX(0.9);transform-origin:0 0;text-shadow:0.3px 0 0 #222833;">mov</div>
<div class="t" style="left:216.80px;top:242.41px;font:bold 12.0px/12px 'Liberation Mono',monospace;letter-spacing:-0.289px;color:#222833;text-rendering:geometricPrecision;transform:scaleX(0.9);transform-origin:0 0;text-shadow:0.3px 0 0 #222833;">eax, </div>
<div class="t" style="left:247.90px;top:242.41px;font:normal 12.0px/12px 'Liberation Mono',monospace;letter-spacing:0.118px;color:#1c2433;text-rendering:geometricPrecision;transform:scaleX(0.85);transform-origin:0 0;">dword ptr [ebp+C]</div>
<div class="t" style="left:74.00px;top:254.83px;font:bold 12.0px/12px 'Liberation Mono',monospace;letter-spacing:-0.289px;color:#222833;text-rendering:geometricPrecision;transform:scaleX(0.9);transform-origin:0 0;text-shadow:0.3px 0 0 #222833;">FF10</div>
<div class="t" style="left:166.60px;top:254.83px;font:bold 12.0px/12px 'Liberation Mono',monospace;letter-spacing:-0.289px;color:#222833;text-rendering:geometricPrecision;transform:scaleX(0.9);transform-origin:0 0;text-shadow:0.3px 0 0 #222833;">call</div>
<div class="t" style="left:216.80px;top:254.83px;font:bold 12.0px/12px 'Liberation Mono',monospace;letter-spacing:-0.289px;color:#222833;text-rendering:geometricPrecision;transform:scaleX(0.9);transform-origin:0 0;text-shadow:0.3px 0 0 #222833;">dword ptr [eax]</div>
<div class="t" style="left:406.80px;top:254.83px;font:bold 12.0px/12px 'Liberation Mono',monospace;letter-spacing:-0.289px;color:#222833;text-rendering:geometricPrecision;transform:scaleX(0.9);transform-origin:0 0;text-shadow:0.3px 0 0 #222833;">CloseHandle</div>
<div class="t" style="left:5.40px;top:267.25px;font:normal 12.0px/12px 'Liberation Mono',monospace;letter-spacing:0.118px;color:#6a6a72;text-rendering:geometricPrecision;transform:scaleX(0.85);transform-origin:0 0;text-shadow:0.25px 0 0 #6a6a72;">029C3032</div>
<div class="t" style="left:74.00px;top:267.25px;font:bold 12.0px/12px 'Liberation Mono',monospace;letter-spacing:-0.289px;color:#222833;text-rendering:geometricPrecision;transform:scaleX(0.9);transform-origin:0 0;text-shadow:0.3px 0 0 #222833;">6A 05</div>
<div class="t" style="left:166.60px;top:267.25px;font:bold 12.0px/12px 'Liberation Mono',monospace;letter-spacing:-0.289px;color:#0c94f0;text-rendering:geometricPrecision;transform:scaleX(0.9);transform-origin:0 0;text-shadow:0.3px 0 0 #0c94f0;">push</div>
<div class="t" style="left:216.80px;top:267.25px;font:bold 12.0px/12px 'Liberation Mono',monospace;letter-spacing:-0.289px;color:#222833;text-rendering:geometricPrecision;transform:scaleX(0.9);transform-origin:0 0;text-shadow:0.3px 0 0 #222833;">5</div>
<div class="t" style="left:5.40px;top:279.67px;font:normal 12.0px/12px 'Liberation Mono',monospace;letter-spacing:0.118px;color:#6a6a72;text-rendering:geometricPrecision;transform:scaleX(0.85);transform-origin:0 0;text-shadow:0.25px 0 0 #6a6a72;">029C3034</div>
<div class="t" style="left:74.00px;top:279.67px;font:bold 12.0px/12px 'Liberation Mono',monospace;letter-spacing:-0.289px;color:#222833;text-rendering:geometricPrecision;transform:scaleX(0.9);transform-origin:0 0;text-shadow:0.3px 0 0 #222833;">8D8D E8FCFFFF</div>
<div class="t" style="left:166.60px;top:279.67px;font:bold 12.0px/12px 'Liberation Mono',monospace;letter-spacing:-0.289px;color:#222833;text-rendering:geometricPrecision;transform:scaleX(0.9);transform-origin:0 0;text-shadow:0.3px 0 0 #222833;">lea</div>
<div class="t" style="left:216.80px;top:279.67px;font:bold 12.0px/12px 'Liberation Mono',monospace;letter-spacing:-0.289px;color:#222833;text-rendering:geometricPrecision;transform:scaleX(0.9);transform-origin:0 0;text-shadow:0.3px 0 0 #222833;">ecx, </div>
<div class="t" style="left:247.90px;top:279.67px;font:normal 12.0px/12px 'Liberation Mono',monospace;letter-spacing:0.118px;color:#1c2433;text-rendering:geometricPrecision;transform:scaleX(0.85);transform-origin:0 0;">dword ptr [ebp-318]</div>
<div class="t" style="left:5.40px;top:292.09px;font:normal 12.0px/12px 'Liberation Mono',monospace;letter-spacing:0.118px;color:#6a6a72;text-rendering:geometricPrecision;transform:scaleX(0.85);transform-origin:0 0;text-shadow:0.25px 0 0 #6a6a72;">029C303A</div>
<div class="t" style="left:74.00px;top:292.09px;font:bold 12.0px/12px 'Liberation Mono',monospace;letter-spacing:-0.289px;color:#222833;text-rendering:geometricPrecision;transform:scaleX(0.9);transform-origin:0 0;text-shadow:0.3px 0 0 #222833;">51</div>
<div class="t" style="left:166.60px;top:292.09px;font:bold 12.0px/12px 'Liberation Mono',monospace;letter-spacing:-0.289px;color:#0c94f0;text-rendering:geometricPrecision;transform:scaleX(0.9);transform-origin:0 0;text-shadow:0.3px 0 0 #0c94f0;">push</div>
<div class="t" style="left:216.80px;top:292.09px;font:bold 12.0px/12px 'Liberation Mono',monospace;letter-spacing:-0.289px;color:#222833;text-rendering:geometricPrecision;transform:scaleX(0.9);transform-origin:0 0;text-shadow:0.3px 0 0 #222833;">ecx</div>
<div class="t" style="left:5.40px;top:304.51px;font:normal 12.0px/12px 'Liberation Mono',monospace;letter-spacing:0.118px;color:#6a6a72;text-rendering:geometricPrecision;transform:scaleX(0.85);transform-origin:0 0;text-shadow:0.25px 0 0 #6a6a72;">029C303B</div>
<div class="t" style="left:74.00px;top:304.51px;font:bold 12.0px/12px 'Liberation Mono',monospace;letter-spacing:-0.289px;color:#222833;text-rendering:geometricPrecision;transform:scaleX(0.9);transform-origin:0 0;text-shadow:0.3px 0 0 #222833;">8B55 0C</div>
<div class="t" style="left:166.60px;top:304.51px;font:bold 12.0px/12px 'Liberation Mono',monospace;letter-spacing:-0.289px;color:#222833;text-rendering:geometricPrecision;transform:scaleX(0.9);transform-origin:0 0;text-shadow:0.3px 0 0 #222833;">mov</div>
<div class="t" style="left:216.80px;top:304.51px;font:bold 12.0px/12px 'Liberation Mono',monospace;letter-spacing:-0.289px;color:#222833;text-rendering:geometricPrecision;transform:scaleX(0.9);transform-origin:0 0;text-shadow:0.3px 0 0 #222833;">edx, </div>
<div class="t" style="left:247.90px;top:304.51px;font:normal 12.0px/12px 'Liberation Mono',monospace;letter-spacing:0.118px;color:#1c2433;text-rendering:geometricPrecision;transform:scaleX(0.85);transform-origin:0 0;">dword ptr [ebp+C]</div>
<div class="t" style="left:74.00px;top:316.93px;font:bold 12.0px/12px 'Liberation Mono',monospace;letter-spacing:-0.289px;color:#222833;text-rendering:geometricPrecision;transform:scaleX(0.9);transform-origin:0 0;text-shadow:0.3px 0 0 #222833;">FF52 44</div>
<div class="t" style="left:166.60px;top:316.93px;font:bold 12.0px/12px 'Liberation Mono',monospace;letter-spacing:-0.289px;color:#222833;text-rendering:geometricPrecision;transform:scaleX(0.9);transform-origin:0 0;text-shadow:0.3px 0 0 #222833;">call</div>
<div class="t" style="left:216.80px;top:316.93px;font:bold 12.0px/12px 'Liberation Mono',monospace;letter-spacing:-0.289px;color:#222833;text-rendering:geometricPrecision;transform:scaleX(0.9);transform-origin:0 0;text-shadow:0.3px 0 0 #222833;">dword ptr [edx+44]</div>
<div class="t" style="left:406.80px;top:316.93px;font:bold 12.0px/12px 'Liberation Mono',monospace;letter-spacing:-0.289px;color:#222833;text-rendering:geometricPrecision;transform:scaleX(0.9);transform-origin:0 0;text-shadow:0.3px 0 0 #222833;">kernel32.WinExec</div>
<div class="t" style="left:5.40px;top:329.35px;font:normal 12.0px/12px 'Liberation Mono',monospace;letter-spacing:0.118px;color:#6a6a72;text-rendering:geometricPrecision;transform:scaleX(0.85);transform-origin:0 0;text-shadow:0.25px 0 0 #6a6a72;">029C3041</div>
<div class="t" style="left:74.00px;top:329.35px;font:bold 12.0px/12px 'Liberation Mono',monospace;letter-spacing:-0.289px;color:#222833;text-rendering:geometricPrecision;transform:scaleX(0.9);transform-origin:0 0;text-shadow:0.3px 0 0 #222833;">8B45 F8</div>
<div class="t" style="left:166.60px;top:329.35px;font:bold 12.0px/12px 'Liberation Mono',monospace;letter-spacing:-0.289px;color:#222833;text-rendering:geometricPrecision;transform:scaleX(0.9);transform-origin:0 0;text-shadow:0.3px 0 0 #222833;">mov</div>
<div class="t" style="left:216.80px;top:329.35px;font:bold 12.0px/12px 'Liberation Mono',monospace;letter-spacing:-0.289px;color:#222833;text-rendering:geometricPrecision;transform:scaleX(0.9);transform-origin:0 0;text-shadow:0.3px 0 0 #222833;">eax, </div>
<div class="t" style="left:247.90px;top:329.35px;font:normal 12.0px/12px 'Liberation Mono',monospace;letter-spacing:0.118px;color:#1c2433;text-rendering:geometricPrecision;transform:scaleX(0.85);transform-origin:0 0;">dword ptr [ebp-8]</div>
<div class="t" style="left:5.40px;top:341.77px;font:normal 12.0px/12px 'Liberation Mono',monospace;letter-spacing:0.118px;color:#6a6a72;text-rendering:geometricPrecision;transform:scaleX(0.85);transform-origin:0 0;text-shadow:0.25px 0 0 #6a6a72;">029C3044</div>
<div class="t" style="left:74.00px;top:341.77px;font:bold 12.0px/12px 'Liberation Mono',monospace;letter-spacing:-0.289px;color:#222833;text-rendering:geometricPrecision;transform:scaleX(0.9);transform-origin:0 0;text-shadow:0.3px 0 0 #222833;">0385 E0FCFFFF</div>
<div class="t" style="left:166.60px;top:341.77px;font:bold 12.0px/12px 'Liberation Mono',monospace;letter-spacing:-0.289px;color:#222833;text-rendering:geometricPrecision;transform:scaleX(0.9);transform-origin:0 0;text-shadow:0.3px 0 0 #222833;">add</div>
<div class="t" style="left:216.80px;top:341.77px;font:bold 12.0px/12px 'Liberation Mono',monospace;letter-spacing:-0.289px;color:#222833;text-rendering:geometricPrecision;transform:scaleX(0.9);transform-origin:0 0;text-shadow:0.3px 0 0 #222833;">eax, </div>
<div class="t" style="left:247.90px;top:341.77px;font:normal 12.0px/12px 'Liberation Mono',monospace;letter-spacing:0.118px;color:#1c2433;text-rendering:geometricPrecision;transform:scaleX(0.85);transform-origin:0 0;">dword ptr [ebp-320]</div>
<div class="t" style="left:5.40px;top:354.19px;font:normal 12.0px/12px 'Liberation Mono',monospace;letter-spacing:0.118px;color:#6a6a72;text-rendering:geometricPrecision;transform:scaleX(0.85);transform-origin:0 0;text-shadow:0.25px 0 0 #6a6a72;">029C304A</div>
<div class="t" style="left:74.00px;top:354.19px;font:bold 12.0px/12px 'Liberation Mono',monospace;letter-spacing:-0.289px;color:#222833;text-rendering:geometricPrecision;transform:scaleX(0.9);transform-origin:0 0;text-shadow:0.3px 0 0 #222833;">8945 F8</div>
<div class="t" style="left:166.60px;top:354.19px;font:bold 12.0px/12px 'Liberation Mono',monospace;letter-spacing:-0.289px;color:#222833;text-rendering:geometricPrecision;transform:scaleX(0.9);transform-origin:0 0;text-shadow:0.3px 0 0 #222833;">mov</div>
<div class="t" style="left:216.80px;top:354.19px;font:normal 12.0px/12px 'Liberation Mono',monospace;letter-spacing:0.118px;color:#1c2433;text-rendering:geometricPrecision;transform:scaleX(0.85);transform-origin:0 0;">dword ptr [ebp-8]</div>
<div class="t" style="left:322.54px;top:354.19px;font:bold 12.0px/12px 'Liberation Mono',monospace;letter-spacing:-0.289px;color:#222833;text-rendering:geometricPrecision;transform:scaleX(0.9);transform-origin:0 0;text-shadow:0.3px 0 0 #222833;">, eax</div>
<div class="t" style="left:5.40px;top:366.61px;font:normal 12.0px/12px 'Liberation Mono',monospace;letter-spacing:0.118px;color:#6a6a72;text-rendering:geometricPrecision;transform:scaleX(0.85);transform-origin:0 0;text-shadow:0.25px 0 0 #6a6a72;">029C304D</div>
<div class="t" style="left:74.00px;top:366.61px;font:bold 12.0px/12px 'Liberation Mono',monospace;letter-spacing:-0.289px;color:#222833;text-rendering:geometricPrecision;transform:scaleX(0.9);transform-origin:0 0;text-shadow:0.3px 0 0 #222833;">6A 00</div>
<div class="t" style="left:166.60px;top:366.61px;font:bold 12.0px/12px 'Liberation Mono',monospace;letter-spacing:-0.289px;color:#0c94f0;text-rendering:geometricPrecision;transform:scaleX(0.9);transform-origin:0 0;text-shadow:0.3px 0 0 #0c94f0;">push</div>
<div class="t" style="left:216.80px;top:366.61px;font:bold 12.0px/12px 'Liberation Mono',monospace;letter-spacing:-0.289px;color:#222833;text-rendering:geometricPrecision;transform:scaleX(0.9);transform-origin:0 0;text-shadow:0.3px 0 0 #222833;">0</div>
<div class="t" style="left:5.40px;top:379.03px;font:normal 12.0px/12px 'Liberation Mono',monospace;letter-spacing:0.118px;color:#6a6a72;text-rendering:geometricPrecision;transform:scaleX(0.85);transform-origin:0 0;text-shadow:0.25px 0 0 #6a6a72;">029C304F</div>
<div class="t" style="left:74.00px;top:379.03px;font:bold 12.0px/12px 'Liberation Mono',monospace;letter-spacing:-0.289px;color:#222833;text-rendering:geometricPrecision;transform:scaleX(0.9);transform-origin:0 0;text-shadow:0.3px 0 0 #222833;">68 80000000</div>
<div class="t" style="left:166.60px;top:379.03px;font:bold 12.0px/12px 'Liberation Mono',monospace;letter-spacing:-0.289px;color:#0c94f0;text-rendering:geometricPrecision;transform:scaleX(0.9);transform-origin:0 0;text-shadow:0.3px 0 0 #0c94f0;">push</div>
<div class="t" style="left:216.80px;top:379.03px;font:bold 12.0px/12px 'Liberation Mono',monospace;letter-spacing:-0.289px;color:#222833;text-rendering:geometricPrecision;transform:scaleX(0.9);transform-origin:0 0;text-shadow:0.3px 0 0 #222833;">80</div>
<div class="t" style="left:5.40px;top:391.45px;font:normal 12.0px/12px 'Liberation Mono',monospace;letter-spacing:0.118px;color:#6a6a72;text-rendering:geometricPrecision;transform:scaleX(0.85);transform-origin:0 0;text-shadow:0.25px 0 0 #6a6a72;">029C3054</div>
<div class="t" style="left:74.00px;top:391.45px;font:bold 12.0px/12px 'Liberation Mono',monospace;letter-spacing:-0.289px;color:#222833;text-rendering:geometricPrecision;transform:scaleX(0.9);transform-origin:0 0;text-shadow:0.3px 0 0 #222833;">6A 02</div>
<div class="t" style="left:166.60px;top:391.45px;font:bold 12.0px/12px 'Liberation Mono',monospace;letter-spacing:-0.289px;color:#0c94f0;text-rendering:geometricPrecision;transform:scaleX(0.9);transform-origin:0 0;text-shadow:0.3px 0 0 #0c94f0;">push</div>
<div class="t" style="left:216.80px;top:391.45px;font:bold 12.0px/12px 'Liberation Mono',monospace;letter-spacing:-0.289px;color:#222833;text-rendering:geometricPrecision;transform:scaleX(0.9);transform-origin:0 0;text-shadow:0.3px 0 0 #222833;">2</div>
<div class="t" style="left:5.40px;top:403.87px;font:normal 12.0px/12px 'Liberation Mono',monospace;letter-spacing:0.118px;color:#6a6a72;text-rendering:geometricPrecision;transform:scaleX(0.85);transform-origin:0 0;text-shadow:0.25px 0 0 #6a6a72;">029C3056</div>
<div class="t" style="left:74.00px;top:403.87px;font:bold 12.0px/12px 'Liberation Mono',monospace;letter-spacing:-0.289px;color:#222833;text-rendering:geometricPrecision;transform:scaleX(0.9);transform-origin:0 0;text-shadow:0.3px 0 0 #222833;">6A 00</div>
<div class="t" style="left:166.60px;top:403.87px;font:bold 12.0px/12px 'Liberation Mono',monospace;letter-spacing:-0.289px;color:#0c94f0;text-rendering:geometricPrecision;transform:scaleX(0.9);transform-origin:0 0;text-shadow:0.3px 0 0 #0c94f0;">push</div>
<div class="t" style="left:216.80px;top:403.87px;font:bold 12.0px/12px 'Liberation Mono',monospace;letter-spacing:-0.289px;color:#222833;text-rendering:geometricPrecision;transform:scaleX(0.9);transform-origin:0 0;text-shadow:0.3px 0 0 #222833;">0</div>
</div></div>
<div style="left:0.00px;top:412.00px;width:599.00px;height:1.50px;background:#2b3340;"></div>
<div class="t" style="left:5.40px;top:415.91px;font:bold 12.0px/12px 'Liberation Mono',monospace;letter-spacing:-0.289px;color:#222833;text-rendering:geometricPrecision;transform:scaleX(0.9);transform-origin:0 0;text-shadow:0.3px 0 0 #222833;">ds:[500201B6]=7C86250D (kernel32.WinExec)</div>
<div style="left:0.00px;top:434.00px;width:994.00px;height:2.00px;background:#8a8a8a;"></div>
<div style="left:598.00px;top:54.00px;width:1.50px;height:359.00px;background:#2b3340;"></div>
<div style="left:598.00px;top:413.00px;width:1.50px;height:324.00px;background:#8a8a8a;"></div>
<div style="left:0;top:436px;width:598px;height:299px;overflow:hidden"><div style="left:0;top:-436px;width:598px;height:735px">
<div style="left:57.70px;top:436.00px;width:18.60px;height:12.42px;background:#a4c7ee;"></div>
<div style="left:402.60px;top:436.00px;width:6.22px;height:12.42px;background:#a4c7ee;"></div>
<div style="left:57.00px;top:436.00px;width:1.20px;height:300.00px;background:#9a9a9a;"></div>
<div style="left:131.80px;top:436.00px;width:1.20px;height:300.00px;background:#a8a8a8;"></div>
<div style="left:206.20px;top:436.00px;width:1.20px;height:300.00px;background:#a8a8a8;"></div>
<div style="left:280.60px;top:436.00px;width:1.20px;height:300.00px;background:#a8a8a8;"></div>
<div style="left:355.00px;top:436.00px;width:1.20px;height:300.00px;background:#a8a8a8;"></div>
<div style="left:509.00px;top:436.00px;width:1.20px;height:300.00px;background:#a8a8a8;"></div>
<div style="left:400.00px;top:436.00px;width:1.20px;height:300.00px;background:#a8a8a8;"></div>
<div class="t" style="left:5.40px;top:437.11px;font:normal 12.0px/12px 'Liberation Mono',monospace;letter-spacing:0.118px;color:#6a6a72;text-rendering:geometricPrecision;transform:scaleX(0.85);transform-origin:0 0;text-shadow:0.25px 0 0 #6a6a72;">0012EB88</div>
<div class="t" style="left:62.10px;top:437.11px;font:normal 12.0px/12px 'Liberation Mono',monospace;letter-spacing:0.118px;color:#585860;text-rendering:geometricPrecision;transform:scaleX(0.85);transform-origin:0 0;text-shadow:0.25px 0 0 #585860;">43</div>
<div class="t" style="left:80.70px;top:437.11px;font:normal 12.0px/12px 'Liberation Mono',monospace;letter-spacing:0.118px;color:#585860;text-rendering:geometricPrecision;transform:scaleX(0.85);transform-origin:0 0;text-shadow:0.25px 0 0 #585860;">3A</div>
<div class="t" style="left:99.30px;top:437.11px;font:normal 12.0px/12px 'Liberation Mono',monospace;letter-spacing:0.118px;color:#585860;text-rendering:geometricPrecision;transform:scaleX(0.85);transform-origin:0 0;text-shadow:0.25px 0 0 #585860;">5C</div>
<div class="t" style="left:117.90px;top:437.11px;font:normal 12.0px/12px 'Liberation Mono',monospace;letter-spacing:0.118px;color:#585860;text-rendering:geometricPrecision;transform:scaleX(0.85);transform-origin:0 0;text-shadow:0.25px 0 0 #585860;">44</div>
<div class="t" style="left:136.50px;top:437.11px;font:normal 12.0px/12px 'Liberation Mono',monospace;letter-spacing:0.118px;color:#585860;text-rendering:geometricPrecision;transform:scaleX(0.85);transform-origin:0 0;text-shadow:0.25px 0 0 #585860;">4F</div>
<div class="t" style="left:155.10px;top:437.11px;font:normal 12.0px/12px 'Liberation Mono',monospace;letter-spacing:0.118px;color:#585860;text-rendering:geometricPrecision;transform:scaleX(0.85);transform-origin:0 0;text-shadow:0.25px 0 0 #585860;">43</div>
<div class="t" style="left:173.70px;top:437.11px;font:normal 12.0px/12px 'Liberation Mono',monospace;letter-spacing:0.118px;color:#585860;text-rendering:geometricPrecision;transform:scaleX(0.85);transform-origin:0 0;text-shadow:0.25px 0 0 #585860;">55</div>
<div class="t" style="left:192.30px;top:437.11px;font:normal 12.0px/12px 'Liberation Mono',monospace;letter-spacing:0.118px;color:#585860;text-rendering:geometricPrecision;transform:scaleX(0.85);transform-origin:0 0;text-shadow:0.25px 0 0 #585860;">4D</div>
<div class="t" style="left:210.90px;top:437.11px;font:normal 12.0px/12px 'Liberation Mono',monospace;letter-spacing:0.118px;color:#585860;text-rendering:geometricPrecision;transform:scaleX(0.85);transform-origin:0 0;text-shadow:0.25px 0 0 #585860;">45</div>
<div class="t" style="left:229.50px;top:437.11px;font:normal 12.0px/12px 'Liberation Mono',monospace;letter-spacing:0.118px;color:#585860;text-rendering:geometricPrecision;transform:scaleX(0.85);transform-origin:0 0;text-shadow:0.25px 0 0 #585860;">7E</div>
<div class="t" style="left:248.10px;top:437.11px;font:normal 12.0px/12px 'Liberation Mono',monospace;letter-spacing:0.118px;color:#585860;text-rendering:geometricPrecision;transform:scaleX(0.85);transform-origin:0 0;text-shadow:0.25px 0 0 #585860;">31</div>
<div class="t" style="left:266.70px;top:437.11px;font:normal 12.0px/12px 'Liberation Mono',monospace;letter-spacing:0.118px;color:#585860;text-rendering:geometricPrecision;transform:scaleX(0.85);transform-origin:0 0;text-shadow:0.25px 0 0 #585860;">5C</div>
<div class="t" style="left:285.30px;top:437.11px;font:normal 12.0px/12px 'Liberation Mono',monospace;letter-spacing:0.118px;color:#585860;text-rendering:geometricPrecision;transform:scaleX(0.85);transform-origin:0 0;text-shadow:0.25px 0 0 #585860;">41</div>
<div class="t" style="left:303.90px;top:437.11px;font:normal 12.0px/12px 'Liberation Mono',monospace;letter-spacing:0.118px;color:#585860;text-rendering:geometricPrecision;transform:scaleX(0.85);transform-origin:0 0;text-shadow:0.25px 0 0 #585860;">44</div>
<div class="t" style="left:322.50px;top:437.11px;font:normal 12.0px/12px 'Liberation Mono',monospace;letter-spacing:0.118px;color:#585860;text-rendering:geometricPrecision;transform:scaleX(0.85);transform-origin:0 0;text-shadow:0.25px 0 0 #585860;">4D</div>
<div class="t" style="left:341.10px;top:437.11px;font:normal 12.0px/12px 'Liberation Mono',monospace;letter-spacing:0.118px;color:#585860;text-rendering:geometricPrecision;transform:scaleX(0.85);transform-origin:0 0;text-shadow:0.25px 0 0 #585860;">49</div>
<div class="t" style="left:403.60px;top:437.11px;font:normal 12.0px/12px 'Liberation Mono',monospace;letter-spacing:0.118px;color:#585860;text-rendering:geometricPrecision;transform:scaleX(0.85);transform-origin:0 0;text-shadow:0.25px 0 0 #585860;">C:\DOCUME~1\ADMI</div>
<div class="t" style="left:5.40px;top:449.53px;font:normal 12.0px/12px 'Liberation Mono',monospace;letter-spacing:0.118px;color:#6a6a72;text-rendering:geometricPrecision;transform:scaleX(0.85);transform-origin:0 0;text-shadow:0.25px 0 0 #6a6a72;">0012EB98</div>
<div class="t" style="left:62.10px;top:449.53px;font:normal 12.0px/12px 'Liberation Mono',monospace;letter-spacing:0.118px;color:#585860;text-rendering:geometricPrecision;transform:scaleX(0.85);transform-origin:0 0;text-shadow:0.25px 0 0 #585860;">4E</div>
<div class="t" style="left:80.70px;top:449.53px;font:normal 12.0px/12px 'Liberation Mono',monospace;letter-spacing:0.118px;color:#585860;text-rendering:geometricPrecision;transform:scaleX(0.85);transform-origin:0 0;text-shadow:0.25px 0 0 #585860;">49</div>
<div class="t" style="left:99.30px;top:449.53px;font:normal 12.0px/12px 'Liberation Mono',monospace;letter-spacing:0.118px;color:#585860;text-rendering:geometricPrecision;transform:scaleX(0.85);transform-origin:0 0;text-shadow:0.25px 0 0 #585860;">7E</div>
<div class="t" style="left:117.90px;top:449.53px;font:normal 12.0px/12px 'Liberation Mono',monospace;letter-spacing:0.118px;color:#585860;text-rendering:geometricPrecision;transform:scaleX(0.85);transform-origin:0 0;text-shadow:0.25px 0 0 #585860;">31</div>
<div class="t" style="left:136.50px;top:449.53px;font:normal 12.0px/12px 'Liberation Mono',monospace;letter-spacing:0.118px;color:#585860;text-rendering:geometricPrecision;transform:scaleX(0.85);transform-origin:0 0;text-shadow:0.25px 0 0 #585860;">5C</div>
<div class="t" style="left:155.10px;top:449.53px;font:normal 12.0px/12px 'Liberation Mono',monospace;letter-spacing:0.118px;color:#585860;text-rendering:geometricPrecision;transform:scaleX(0.85);transform-origin:0 0;text-shadow:0.25px 0 0 #585860;">4C</div>
<div class="t" style="left:173.70px;top:449.53px;font:normal 12.0px/12px 'Liberation Mono',monospace;letter-spacing:0.118px;color:#585860;text-rendering:geometricPrecision;transform:scaleX(0.85);transform-origin:0 0;text-shadow:0.25px 0 0 #585860;">4F</div>
<div class="t" style="left:192.30px;top:449.53px;font:normal 12.0px/12px 'Liberation Mono',monospace;letter-spacing:0.118px;color:#585860;text-rendering:geometricPrecision;transform:scaleX(0.85);transform-origin:0 0;text-shadow:0.25px 0 0 #585860;">43</div>
<div class="t" style="left:210.90px;top:449.53px;font:normal 12.0px/12px 'Liberation Mono',monospace;letter-spacing:0.118px;color:#585860;text-rendering:geometricPrecision;transform:scaleX(0.85);transform-origin:0 0;text-shadow:0.25px 0 0 #585860;">41</div>
<div class="t" style="left:229.50px;top:449.53px;font:normal 12.0px/12px 'Liberation Mono',monospace;letter-spacing:0.118px;color:#585860;text-rendering:geometricPrecision;transform:scaleX(0.85);transform-origin:0 0;text-shadow:0.25px 0 0 #585860;">4C</div>
<div class="t" style="left:248.10px;top:449.53px;font:normal 12.0px/12px 'Liberation Mono',monospace;letter-spacing:0.118px;color:#585860;text-rendering:geometricPrecision;transform:scaleX(0.85);transform-origin:0 0;text-shadow:0.25px 0 0 #585860;">53</div>
<div class="t" style="left:266.70px;top:449.53px;font:normal 12.0px/12px 'Liberation Mono',monospace;letter-spacing:0.118px;color:#585860;text-rendering:geometricPrecision;transform:scaleX(0.85);transform-origin:0 0;text-shadow:0.25px 0 0 #585860;">7E</div>
<div class="t" style="left:285.30px;top:449.53px;font:normal 12.0px/12px 'Liberation Mono',monospace;letter-spacing:0.118px;color:#585860;text-rendering:geometricPrecision;transform:scaleX(0.85);transform-origin:0 0;text-shadow:0.25px 0 0 #585860;">31</div>
<div class="t" style="left:303.90px;top:449.53px;font:normal 12.0px/12px 'Liberation Mono',monospace;letter-spacing:0.118px;color:#585860;text-rendering:geometricPrecision;transform:scaleX(0.85);transform-origin:0 0;text-shadow:0.25px 0 0 #585860;">5C</div>
<div class="t" style="left:322.50px;top:449.53px;font:normal 12.0px/12px 'Liberation Mono',monospace;letter-spacing:0.118px;color:#585860;text-rendering:geometricPrecision;transform:scaleX(0.85);transform-origin:0 0;text-shadow:0.25px 0 0 #585860;">54</div>
<div class="t" style="left:341.10px;top:449.53px;font:normal 12.0px/12px 'Liberation Mono',monospace;letter-spacing:0.118px;color:#585860;text-rendering:geometricPrecision;transform:scaleX(0.85);transform-origin:0 0;text-shadow:0.25px 0 0 #585860;">65</div>
<div class="t" style="left:403.60px;top:449.53px;font:normal 12.0px/12px 'Liberation Mono',monospace;letter-spacing:0.118px;color:#585860;text-rendering:geometricPrecision;transform:scaleX(0.85);transform-origin:0 0;text-shadow:0.25px 0 0 #585860;">NI~1\LOCALS~1\Te</div>
<div class="t" style="left:5.40px;top:461.95px;font:normal 12.0px/12px 'Liberation Mono',monospace;letter-spacing:0.118px;color:#6a6a72;text-rendering:geometricPrecision;transform:scaleX(0.85);transform-origin:0 0;text-shadow:0.25px 0 0 #6a6a72;">0012EBA8</div>
<div class="t" style="left:62.10px;top:461.95px;font:normal 12.0px/12px 'Liberation Mono',monospace;letter-spacing:0.118px;color:#585860;text-rendering:geometricPrecision;transform:scaleX(0.85);transform-origin:0 0;text-shadow:0.25px 0 0 #585860;">6D</div>
<div class="t" style="left:80.70px;top:461.95px;font:normal 12.0px/12px 'Liberation Mono',monospace;letter-spacing:0.118px;color:#585860;text-rendering:geometricPrecision;transform:scaleX(0.85);transform-origin:0 0;text-shadow:0.25px 0 0 #585860;">70</div>
<div class="t" style="left:99.30px;top:461.95px;font:normal 12.0px/12px 'Liberation Mono',monospace;letter-spacing:0.118px;color:#585860;text-rendering:geometricPrecision;transform:scaleX(0.85);transform-origin:0 0;text-shadow:0.25px 0 0 #585860;">5C</div>
<div class="t" style="left:117.90px;top:461.95px;font:normal 12.0px/12px 'Liberation Mono',monospace;letter-spacing:0.118px;color:#585860;text-rendering:geometricPrecision;transform:scaleX(0.85);transform-origin:0 0;text-shadow:0.25px 0 0 #585860;">37</div>
<div class="t" style="left:136.50px;top:461.95px;font:normal 12.0px/12px 'Liberation Mono',monospace;letter-spacing:0.118px;color:#585860;text-rendering:geometricPrecision;transform:scaleX(0.85);transform-origin:0 0;text-shadow:0.25px 0 0 #585860;">46</div>
<div class="t" style="left:155.10px;top:461.95px;font:normal 12.0px/12px 'Liberation Mono',monospace;letter-spacing:0.118px;color:#585860;text-rendering:geometricPrecision;transform:scaleX(0.85);transform-origin:0 0;text-shadow:0.25px 0 0 #585860;">2E</div>
<div class="t" style="left:173.70px;top:461.95px;font:normal 12.0px/12px 'Liberation Mono',monospace;letter-spacing:0.118px;color:#585860;text-rendering:geometricPrecision;transform:scaleX(0.85);transform-origin:0 0;text-shadow:0.25px 0 0 #585860;">74</div>
<div class="t" style="left:192.30px;top:461.95px;font:normal 12.0px/12px 'Liberation Mono',monospace;letter-spacing:0.118px;color:#585860;text-rendering:geometricPrecision;transform:scaleX(0.85);transform-origin:0 0;text-shadow:0.25px 0 0 #585860;">6D</div>
<div class="t" style="left:210.90px;top:461.95px;font:normal 12.0px/12px 'Liberation Mono',monospace;letter-spacing:0.118px;color:#585860;text-rendering:geometricPrecision;transform:scaleX(0.85);transform-origin:0 0;text-shadow:0.25px 0 0 #585860;">70</div>
<div class="t" style="left:229.50px;top:461.95px;font:normal 12.0px/12px 'Liberation Mono',monospace;letter-spacing:0.118px;color:#585860;text-rendering:geometricPrecision;transform:scaleX(0.85);transform-origin:0 0;text-shadow:0.25px 0 0 #585860;">00</div>
<div class="t" style="left:248.10px;top:461.95px;font:normal 12.0px/12px 'Liberation Mono',monospace;letter-spacing:0.118px;color:#585860;text-rendering:geometricPrecision;transform:scaleX(0.85);transform-origin:0 0;text-shadow:0.25px 0 0 #585860;">12</div>
<div class="t" style="left:266.70px;top:461.95px;font:normal 12.0px/12px 'Liberation Mono',monospace;letter-spacing:0.118px;color:#585860;text-rendering:geometricPrecision;transform:scaleX(0.85);transform-origin:0 0;text-shadow:0.25px 0 0 #585860;">00</div>
<div class="t" style="left:285.30px;top:461.95px;font:normal 12.0px/12px 'Liberation Mono',monospace;letter-spacing:0.118px;color:#585860;text-rendering:geometricPrecision;transform:scaleX(0.85);transform-origin:0 0;text-shadow:0.25px 0 0 #585860;">00</div>
<div class="t" style="left:303.90px;top:461.95px;font:normal 12.0px/12px 'Liberation Mono',monospace;letter-spacing:0.118px;color:#585860;text-rendering:geometricPrecision;transform:scaleX(0.85);transform-origin:0 0;text-shadow:0.25px 0 0 #585860;">00</div>
<div class="t" style="left:322.50px;top:461.95px;font:normal 12.0px/12px 'Liberation Mono',monospace;letter-spacing:0.118px;color:#585860;text-rendering:geometricPrecision;transform:scaleX(0.85);transform-origin:0 0;text-shadow:0.25px 0 0 #585860;">01</div>
<div class="t" style="left:341.10px;top:461.95px;font:normal 12.0px/12px 'Liberation Mono',monospace;letter-spacing:0.118px;color:#585860;text-rendering:geometricPrecision;transform:scaleX(0.85);transform-origin:0 0;text-shadow:0.25px 0 0 #585860;">C0</div>
<div class="t" style="left:403.60px;top:461.95px;font:normal 12.0px/12px 'Liberation Mono',monospace;letter-spacing:0.118px;color:#585860;text-rendering:geometricPrecision;transform:scaleX(0.85);transform-origin:0 0;text-shadow:0.25px 0 0 #585860;">mp\7F.tmp.■...<span style="color:#8c8c92;text-shadow:none">┼┤</span></div>
<div class="t" style="left:5.40px;top:474.37px;font:normal 12.0px/12px 'Liberation Mono',monospace;letter-spacing:0.118px;color:#6a6a72;text-rendering:geometricPrecision;transform:scaleX(0.85);transform-origin:0 0;text-shadow:0.25px 0 0 #6a6a72;">0012EBB8</div>
<div class="t" style="left:62.10px;top:474.37px;font:normal 12.0px/12px 'Liberation Mono',monospace;letter-spacing:0.118px;color:#585860;text-rendering:geometricPrecision;transform:scaleX(0.85);transform-origin:0 0;text-shadow:0.25px 0 0 #585860;">4A</div>
<div class="t" style="left:80.70px;top:474.37px;font:normal 12.0px/12px 'Liberation Mono',monospace;letter-spacing:0.118px;color:#585860;text-rendering:geometricPrecision;transform:scaleX(0.85);transform-origin:0 0;text-shadow:0.25px 0 0 #585860;">F8</div>
<div class="t" style="left:99.30px;top:474.37px;font:normal 12.0px/12px 'Liberation Mono',monospace;letter-spacing:0.118px;color:#585860;text-rendering:geometricPrecision;transform:scaleX(0.85);transform-origin:0 0;text-shadow:0.25px 0 0 #585860;">9F</div>
<div class="t" style="left:117.90px;top:474.37px;font:normal 12.0px/12px 'Liberation Mono',monospace;letter-spacing:0.118px;color:#585860;text-rendering:geometricPrecision;transform:scaleX(0.85);transform-origin:0 0;text-shadow:0.25px 0 0 #585860;">00</div>
<div class="t" style="left:136.50px;top:474.37px;font:normal 12.0px/12px 'Liberation Mono',monospace;letter-spacing:0.118px;color:#585860;text-rendering:geometricPrecision;transform:scaleX(0.85);transform-origin:0 0;text-shadow:0.25px 0 0 #585860;">94</div>
<div class="t" style="left:155.10px;top:474.37px;font:normal 12.0px/12px 'Liberation Mono',monospace;letter-spacing:0.118px;color:#585860;text-rendering:geometricPrecision;transform:scaleX(0.85);transform-origin:0 0;text-shadow:0.25px 0 0 #585860;">EC</div>
<div class="t" style="left:173.70px;top:474.37px;font:normal 12.0px/12px 'Liberation Mono',monospace;letter-spacing:0.118px;color:#585860;text-rendering:geometricPrecision;transform:scaleX(0.85);transform-origin:0 0;text-shadow:0.25px 0 0 #585860;">12</div>
<div class="t" style="left:192.30px;top:474.37px;font:normal 12.0px/12px 'Liberation Mono',monospace;letter-spacing:0.118px;color:#585860;text-rendering:geometricPrecision;transform:scaleX(0.85);transform-origin:0 0;text-shadow:0.25px 0 0 #585860;">00</div>
<div class="t" style="left:210.90px;top:474.37px;font:normal 12.0px/12px 'Liberation Mono',monospace;letter-spacing:0.118px;color:#585860;text-rendering:geometricPrecision;transform:scaleX(0.85);transform-origin:0 0;text-shadow:0.25px 0 0 #585860;">54</div>
<div class="t" style="left:229.50px;top:474.37px;font:normal 12.0px/12px 'Liberation Mono',monospace;letter-spacing:0.118px;color:#585860;text-rendering:geometricPrecision;transform:scaleX(0.85);transform-origin:0 0;text-shadow:0.25px 0 0 #585860;">F6</div>
<div class="t" style="left:248.10px;top:474.37px;font:normal 12.0px/12px 'Liberation Mono',monospace;letter-spacing:0.118px;color:#585860;text-rendering:geometricPrecision;transform:scaleX(0.85);transform-origin:0 0;text-shadow:0.25px 0 0 #585860;">6D</div>
<div class="t" style="left:266.70px;top:474.37px;font:normal 12.0px/12px 'Liberation Mono',monospace;letter-spacing:0.118px;color:#585860;text-rendering:geometricPrecision;transform:scaleX(0.85);transform-origin:0 0;text-shadow:0.25px 0 0 #585860;">03</div>
<div class="t" style="left:285.30px;top:474.37px;font:normal 12.0px/12px 'Liberation Mono',monospace;letter-spacing:0.118px;color:#585860;text-rendering:geometricPrecision;transform:scaleX(0.85);transform-origin:0 0;text-shadow:0.25px 0 0 #585860;">C4</div>
<div class="t" style="left:303.90px;top:474.37px;font:normal 12.0px/12px 'Liberation Mono',monospace;letter-spacing:0.118px;color:#585860;text-rendering:geometricPrecision;transform:scaleX(0.85);transform-origin:0 0;text-shadow:0.25px 0 0 #585860;">EE</div>
<div class="t" style="left:322.50px;top:474.37px;font:normal 12.0px/12px 'Liberation Mono',monospace;letter-spacing:0.118px;color:#585860;text-rendering:geometricPrecision;transform:scaleX(0.85);transform-origin:0 0;text-shadow:0.25px 0 0 #585860;">12</div>
<div class="t" style="left:341.10px;top:474.37px;font:normal 12.0px/12px 'Liberation Mono',monospace;letter-spacing:0.118px;color:#585860;text-rendering:geometricPrecision;transform:scaleX(0.85);transform-origin:0 0;text-shadow:0.25px 0 0 #585860;">00</div>
<div class="t" style="left:403.60px;top:474.37px;font:normal 12.0px/12px 'Liberation Mono',monospace;letter-spacing:0.118px;color:#585860;text-rendering:geometricPrecision;transform:scaleX(0.85);transform-origin:0 0;text-shadow:0.25px 0 0 #585860;">J<span style="color:#8c8c92;text-shadow:none">┼┤</span>.<span style="color:#8c8c92;text-shadow:none">┬┘</span>■.T<span style="color:#8c8c92;text-shadow:none">┴┐</span>_<span style="color:#8c8c92;text-shadow:none">├┼</span>■.</div>
<div class="t" style="left:5.40px;top:486.79px;font:normal 12.0px/12px 'Liberation Mono',monospace;letter-spacing:0.118px;color:#6a6a72;text-rendering:geometricPrecision;transform:scaleX(0.85);transform-origin:0 0;text-shadow:0.25px 0 0 #6a6a72;">0012EBC8</div>
<div class="t" style="left:62.10px;top:486.79px;font:normal 12.0px/12px 'Liberation Mono',monospace;letter-spacing:0.118px;color:#585860;text-rendering:geometricPrecision;transform:scaleX(0.85);transform-origin:0 0;text-shadow:0.25px 0 0 #585860;">64</div>
<div class="t" style="left:80.70px;top:486.79px;font:normal 12.0px/12px 'Liberation Mono',monospace;letter-spacing:0.118px;color:#585860;text-rendering:geometricPrecision;transform:scaleX(0.85);transform-origin:0 0;text-shadow:0.25px 0 0 #585860;">B5</div>
<div class="t" style="left:99.30px;top:486.79px;font:normal 12.0px/12px 'Liberation Mono',monospace;letter-spacing:0.118px;color:#585860;text-rendering:geometricPrecision;transform:scaleX(0.85);transform-origin:0 0;text-shadow:0.25px 0 0 #585860;">6D</div>
<div class="t" style="left:117.90px;top:486.79px;font:normal 12.0px/12px 'Liberation Mono',monospace;letter-spacing:0.118px;color:#585860;text-rendering:geometricPrecision;transform:scaleX(0.85);transform-origin:0 0;text-shadow:0.25px 0 0 #585860;">03</div>
<div class="t" style="left:136.50px;top:486.79px;font:normal 12.0px/12px 'Liberation Mono',monospace;letter-spacing:0.118px;color:#585860;text-rendering:geometricPrecision;transform:scaleX(0.85);transform-origin:0 0;text-shadow:0.25px 0 0 #585860;">94</div>
<div class="t" style="left:155.10px;top:486.79px;font:normal 12.0px/12px 'Liberation Mono',monospace;letter-spacing:0.118px;color:#585860;text-rendering:geometricPrecision;transform:scaleX(0.85);transform-origin:0 0;text-shadow:0.25px 0 0 #585860;">EC</div>
<div class="t" style="left:173.70px;top:486.79px;font:normal 12.0px/12px 'Liberation Mono',monospace;letter-spacing:0.118px;color:#585860;text-rendering:geometricPrecision;transform:scaleX(0.85);transform-origin:0 0;text-shadow:0.25px 0 0 #585860;">12</div>
<div class="t" style="left:192.30px;top:486.79px;font:normal 12.0px/12px 'Liberation Mono',monospace;letter-spacing:0.118px;color:#585860;text-rendering:geometricPrecision;transform:scaleX(0.85);transform-origin:0 0;text-shadow:0.25px 0 0 #585860;">00</div>
<div class="t" style="left:210.90px;top:486.79px;font:normal 12.0px/12px 'Liberation Mono',monospace;letter-spacing:0.118px;color:#585860;text-rendering:geometricPrecision;transform:scaleX(0.85);transform-origin:0 0;text-shadow:0.25px 0 0 #585860;">00</div>
<div class="t" style="left:229.50px;top:486.79px;font:normal 12.0px/12px 'Liberation Mono',monospace;letter-spacing:0.118px;color:#585860;text-rendering:geometricPrecision;transform:scaleX(0.85);transform-origin:0 0;text-shadow:0.25px 0 0 #585860;">00</div>
<div class="t" style="left:248.10px;top:486.79px;font:normal 12.0px/12px 'Liberation Mono',monospace;letter-spacing:0.118px;color:#585860;text-rendering:geometricPrecision;transform:scaleX(0.85);transform-origin:0 0;text-shadow:0.25px 0 0 #585860;">01</div>
<div class="t" style="left:266.70px;top:486.79px;font:normal 12.0px/12px 'Liberation Mono',monospace;letter-spacing:0.118px;color:#585860;text-rendering:geometricPrecision;transform:scaleX(0.85);transform-origin:0 0;text-shadow:0.25px 0 0 #585860;">C0</div>
<div class="t" style="left:285.30px;top:486.79px;font:normal 12.0px/12px 'Liberation Mono',monospace;letter-spacing:0.118px;color:#585860;text-rendering:geometricPrecision;transform:scaleX(0.85);transform-origin:0 0;text-shadow:0.25px 0 0 #585860;">64</div>
<div class="t" style="left:303.90px;top:486.79px;font:normal 12.0px/12px 'Liberation Mono',monospace;letter-spacing:0.118px;color:#585860;text-rendering:geometricPrecision;transform:scaleX(0.85);transform-origin:0 0;text-shadow:0.25px 0 0 #585860;">B5</div>
<div class="t" style="left:322.50px;top:486.79px;font:normal 12.0px/12px 'Liberation Mono',monospace;letter-spacing:0.118px;color:#585860;text-rendering:geometricPrecision;transform:scaleX(0.85);transform-origin:0 0;text-shadow:0.25px 0 0 #585860;">6D</div>
<div class="t" style="left:341.10px;top:486.79px;font:normal 12.0px/12px 'Liberation Mono',monospace;letter-spacing:0.118px;color:#585860;text-rendering:geometricPrecision;transform:scaleX(0.85);transform-origin:0 0;text-shadow:0.25px 0 0 #585860;">03</div>
<div class="t" style="left:403.60px;top:486.79px;font:normal 12.0px/12px 'Liberation Mono',monospace;letter-spacing:0.118px;color:#585860;text-rendering:geometricPrecision;transform:scaleX(0.85);transform-origin:0 0;text-shadow:0.25px 0 0 #585860;">d<span style="color:#8c8c92;text-shadow:none">┼┤</span>_<span style="color:#8c8c92;text-shadow:none">┬┘</span>■...<span style="color:#8c8c92;text-shadow:none">┴┐</span><span style="color:#8c8c92;text-shadow:none">├┼</span>_</div>
<div class="t" style="left:5.40px;top:499.21px;font:normal 12.0px/12px 'Liberation Mono',monospace;letter-spacing:0.118px;color:#6a6a72;text-rendering:geometricPrecision;transform:scaleX(0.85);transform-origin:0 0;text-shadow:0.25px 0 0 #6a6a72;">0012EBD8</div>
<div class="t" style="left:62.10px;top:499.21px;font:normal 12.0px/12px 'Liberation Mono',monospace;letter-spacing:0.118px;color:#585860;text-rendering:geometricPrecision;transform:scaleX(0.85);transform-origin:0 0;text-shadow:0.25px 0 0 #585860;">48</div>
<div class="t" style="left:80.70px;top:499.21px;font:normal 12.0px/12px 'Liberation Mono',monospace;letter-spacing:0.118px;color:#585860;text-rendering:geometricPrecision;transform:scaleX(0.85);transform-origin:0 0;text-shadow:0.25px 0 0 #585860;">F6</div>
<div class="t" style="left:99.30px;top:499.21px;font:normal 12.0px/12px 'Liberation Mono',monospace;letter-spacing:0.118px;color:#585860;text-rendering:geometricPrecision;transform:scaleX(0.85);transform-origin:0 0;text-shadow:0.25px 0 0 #585860;">6D</div>
<div class="t" style="left:117.90px;top:499.21px;font:normal 12.0px/12px 'Liberation Mono',monospace;letter-spacing:0.118px;color:#585860;text-rendering:geometricPrecision;transform:scaleX(0.85);transform-origin:0 0;text-shadow:0.25px 0 0 #585860;">03</div>
<div class="t" style="left:136.50px;top:499.21px;font:normal 12.0px/12px 'Liberation Mono',monospace;letter-spacing:0.118px;color:#585860;text-rendering:geometricPrecision;transform:scaleX(0.85);transform-origin:0 0;text-shadow:0.25px 0 0 #585860;">F9</div>
<div class="t" style="left:155.10px;top:499.21px;font:normal 12.0px/12px 'Liberation Mono',monospace;letter-spacing:0.118px;color:#585860;text-rendering:geometricPrecision;transform:scaleX(0.85);transform-origin:0 0;text-shadow:0.25px 0 0 #585860;">0F</div>
<div class="t" style="left:173.70px;top:499.21px;font:normal 12.0px/12px 'Liberation Mono',monospace;letter-spacing:0.118px;color:#585860;text-rendering:geometricPrecision;transform:scaleX(0.85);transform-origin:0 0;text-shadow:0.25px 0 0 #585860;">A0</div>
<div class="t" style="left:192.30px;top:499.21px;font:normal 12.0px/12px 'Liberation Mono',monospace;letter-spacing:0.118px;color:#585860;text-rendering:geometricPrecision;transform:scaleX(0.85);transform-origin:0 0;text-shadow:0.25px 0 0 #585860;">00</div>
<div class="t" style="left:210.90px;top:499.21px;font:normal 12.0px/12px 'Liberation Mono',monospace;letter-spacing:0.118px;color:#585860;text-rendering:geometricPrecision;transform:scaleX(0.85);transform-origin:0 0;text-shadow:0.25px 0 0 #585860;">69</div>
<div class="t" style="left:229.50px;top:499.21px;font:normal 12.0px/12px 'Liberation Mono',monospace;letter-spacing:0.118px;color:#585860;text-rendering:geometricPrecision;transform:scaleX(0.85);transform-origin:0 0;text-shadow:0.25px 0 0 #585860;">15</div>
<div class="t" style="left:248.10px;top:499.21px;font:normal 12.0px/12px 'Liberation Mono',monospace;letter-spacing:0.118px;color:#585860;text-rendering:geometricPrecision;transform:scaleX(0.85);transform-origin:0 0;text-shadow:0.25px 0 0 #585860;">75</div>
<div class="t" style="left:266.70px;top:499.21px;font:normal 12.0px/12px 'Liberation Mono',monospace;letter-spacing:0.118px;color:#585860;text-rendering:geometricPrecision;transform:scaleX(0.85);transform-origin:0 0;text-shadow:0.25px 0 0 #585860;">80</div>
<div class="t" style="left:285.30px;top:499.21px;font:normal 12.0px/12px 'Liberation Mono',monospace;letter-spacing:0.118px;color:#585860;text-rendering:geometricPrecision;transform:scaleX(0.85);transform-origin:0 0;text-shadow:0.25px 0 0 #585860;">6B</div>
<div class="t" style="left:303.90px;top:499.21px;font:normal 12.0px/12px 'Liberation Mono',monospace;letter-spacing:0.118px;color:#585860;text-rendering:geometricPrecision;transform:scaleX(0.85);transform-origin:0 0;text-shadow:0.25px 0 0 #585860;">11</div>
<div class="t" style="left:322.50px;top:499.21px;font:normal 12.0px/12px 'Liberation Mono',monospace;letter-spacing:0.118px;color:#585860;text-rendering:geometricPrecision;transform:scaleX(0.85);transform-origin:0 0;text-shadow:0.25px 0 0 #585860;">A0</div>
<div class="t" style="left:341.10px;top:499.21px;font:normal 12.0px/12px 'Liberation Mono',monospace;letter-spacing:0.118px;color:#585860;text-rendering:geometricPrecision;transform:scaleX(0.85);transform-origin:0 0;text-shadow:0.25px 0 0 #585860;">00</div>
<div class="t" style="left:403.60px;top:499.21px;font:normal 12.0px/12px 'Liberation Mono',monospace;letter-spacing:0.118px;color:#585860;text-rendering:geometricPrecision;transform:scaleX(0.85);transform-origin:0 0;text-shadow:0.25px 0 0 #585860;">H<span style="color:#8c8c92;text-shadow:none">┼┤</span> ??i■u■k■?</div>
<div class="t" style="left:5.40px;top:511.63px;font:normal 12.0px/12px 'Liberation Mono',monospace;letter-spacing:0.118px;color:#6a6a72;text-rendering:geometricPrecision;transform:scaleX(0.85);transform-origin:0 0;text-shadow:0.25px 0 0 #6a6a72;">0012EBE8</div>
<div class="t" style="left:62.10px;top:511.63px;font:normal 12.0px/12px 'Liberation Mono',monospace;letter-spacing:0.118px;color:#585860;text-rendering:geometricPrecision;transform:scaleX(0.85);transform-origin:0 0;text-shadow:0.25px 0 0 #585860;">00</div>
<div class="t" style="left:80.70px;top:511.63px;font:normal 12.0px/12px 'Liberation Mono',monospace;letter-spacing:0.118px;color:#585860;text-rendering:geometricPrecision;transform:scaleX(0.85);transform-origin:0 0;text-shadow:0.25px 0 0 #585860;">EC</div>
<div class="t" style="left:99.30px;top:511.63px;font:normal 12.0px/12px 'Liberation Mono',monospace;letter-spacing:0.118px;color:#585860;text-rendering:geometricPrecision;transform:scaleX(0.85);transform-origin:0 0;text-shadow:0.25px 0 0 #585860;">12</div>
<div class="t" style="left:117.90px;top:511.63px;font:normal 12.0px/12px 'Liberation Mono',monospace;letter-spacing:0.118px;color:#585860;text-rendering:geometricPrecision;transform:scaleX(0.85);transform-origin:0 0;text-shadow:0.25px 0 0 #585860;">00</div>
<div class="t" style="left:136.50px;top:511.63px;font:normal 12.0px/12px 'Liberation Mono',monospace;letter-spacing:0.118px;color:#585860;text-rendering:geometricPrecision;transform:scaleX(0.85);transform-origin:0 0;text-shadow:0.25px 0 0 #585860;">94</div>
<div class="t" style="left:155.10px;top:511.63px;font:normal 12.0px/12px 'Liberation Mono',monospace;letter-spacing:0.118px;color:#585860;text-rendering:geometricPrecision;transform:scaleX(0.85);transform-origin:0 0;text-shadow:0.25px 0 0 #585860;">EC</div>
<div class="t" style="left:173.70px;top:511.63px;font:normal 12.0px/12px 'Liberation Mono',monospace;letter-spacing:0.118px;color:#585860;text-rendering:geometricPrecision;transform:scaleX(0.85);transform-origin:0 0;text-shadow:0.25px 0 0 #585860;">12</div>
<div class="t" style="left:192.30px;top:511.63px;font:normal 12.0px/12px 'Liberation Mono',monospace;letter-spacing:0.118px;color:#585860;text-rendering:geometricPrecision;transform:scaleX(0.85);transform-origin:0 0;text-shadow:0.25px 0 0 #585860;">00</div>
<div class="t" style="left:210.90px;top:511.63px;font:normal 12.0px/12px 'Liberation Mono',monospace;letter-spacing:0.118px;color:#585860;text-rendering:geometricPrecision;transform:scaleX(0.85);transform-origin:0 0;text-shadow:0.25px 0 0 #585860;">C4</div>
<div class="t" style="left:229.50px;top:511.63px;font:normal 12.0px/12px 'Liberation Mono',monospace;letter-spacing:0.118px;color:#585860;text-rendering:geometricPrecision;transform:scaleX(0.85);transform-origin:0 0;text-shadow:0.25px 0 0 #585860;">EE</div>
<div class="t" style="left:248.10px;top:511.63px;font:normal 12.0px/12px 'Liberation Mono',monospace;letter-spacing:0.118px;color:#585860;text-rendering:geometricPrecision;transform:scaleX(0.85);transform-origin:0 0;text-shadow:0.25px 0 0 #585860;">12</div>
<div class="t" style="left:266.70px;top:511.63px;font:normal 12.0px/12px 'Liberation Mono',monospace;letter-spacing:0.118px;color:#585860;text-rendering:geometricPrecision;transform:scaleX(0.85);transform-origin:0 0;text-shadow:0.25px 0 0 #585860;">00</div>
<div class="t" style="left:285.30px;top:511.63px;font:normal 12.0px/12px 'Liberation Mono',monospace;letter-spacing:0.118px;color:#585860;text-rendering:geometricPrecision;transform:scaleX(0.85);transform-origin:0 0;text-shadow:0.25px 0 0 #585860;">AC</div>
<div class="t" style="left:303.90px;top:511.63px;font:normal 12.0px/12px 'Liberation Mono',monospace;letter-spacing:0.118px;color:#585860;text-rendering:geometricPrecision;transform:scaleX(0.85);transform-origin:0 0;text-shadow:0.25px 0 0 #585860;">EC</div>
<div class="t" style="left:322.50px;top:511.63px;font:normal 12.0px/12px 'Liberation Mono',monospace;letter-spacing:0.118px;color:#585860;text-rendering:geometricPrecision;transform:scaleX(0.85);transform-origin:0 0;text-shadow:0.25px 0 0 #585860;">12</div>
<div class="t" style="left:341.10px;top:511.63px;font:normal 12.0px/12px 'Liberation Mono',monospace;letter-spacing:0.118px;color:#585860;text-rendering:geometricPrecision;transform:scaleX(0.85);transform-origin:0 0;text-shadow:0.25px 0 0 #585860;">00</div>
<div class="t" style="left:403.60px;top:511.63px;font:normal 12.0px/12px 'Liberation Mono',monospace;letter-spacing:0.118px;color:#585860;text-rendering:geometricPrecision;transform:scaleX(0.85);transform-origin:0 0;text-shadow:0.25px 0 0 #585860;">.?.<span style="color:#8c8c92;text-shadow:none">┼┤</span>■.<span style="color:#8c8c92;text-shadow:none">┬┘</span>■.  ■.</div>
<div class="t" style="left:5.40px;top:524.05px;font:normal 12.0px/12px 'Liberation Mono',monospace;letter-spacing:0.118px;color:#6a6a72;text-rendering:geometricPrecision;transform:scaleX(0.85);transform-origin:0 0;text-shadow:0.25px 0 0 #6a6a72;">0012EBF8</div>
<div class="t" style="left:62.10px;top:524.05px;font:normal 12.0px/12px 'Liberation Mono',monospace;letter-spacing:0.118px;color:#585860;text-rendering:geometricPrecision;transform:scaleX(0.85);transform-origin:0 0;text-shadow:0.25px 0 0 #585860;">94</div>
<div class="t" style="left:80.70px;top:524.05px;font:normal 12.0px/12px 'Liberation Mono',monospace;letter-spacing:0.118px;color:#585860;text-rendering:geometricPrecision;transform:scaleX(0.85);transform-origin:0 0;text-shadow:0.25px 0 0 #585860;">EC</div>
<div class="t" style="left:99.30px;top:524.05px;font:normal 12.0px/12px 'Liberation Mono',monospace;letter-spacing:0.118px;color:#585860;text-rendering:geometricPrecision;transform:scaleX(0.85);transform-origin:0 0;text-shadow:0.25px 0 0 #585860;">12</div>
<div class="t" style="left:117.90px;top:524.05px;font:normal 12.0px/12px 'Liberation Mono',monospace;letter-spacing:0.118px;color:#585860;text-rendering:geometricPrecision;transform:scaleX(0.85);transform-origin:0 0;text-shadow:0.25px 0 0 #585860;">00</div>
<div class="t" style="left:136.50px;top:524.05px;font:normal 12.0px/12px 'Liberation Mono',monospace;letter-spacing:0.118px;color:#585860;text-rendering:geometricPrecision;transform:scaleX(0.85);transform-origin:0 0;text-shadow:0.25px 0 0 #585860;">00</div>
<div class="t" style="left:155.10px;top:524.05px;font:normal 12.0px/12px 'Liberation Mono',monospace;letter-spacing:0.118px;color:#585860;text-rendering:geometricPrecision;transform:scaleX(0.85);transform-origin:0 0;text-shadow:0.25px 0 0 #585860;">00</div>
<div class="t" style="left:173.70px;top:524.05px;font:normal 12.0px/12px 'Liberation Mono',monospace;letter-spacing:0.118px;color:#585860;text-rendering:geometricPrecision;transform:scaleX(0.85);transform-origin:0 0;text-shadow:0.25px 0 0 #585860;">01</div>
<div class="t" style="left:192.30px;top:524.05px;font:normal 12.0px/12px 'Liberation Mono',monospace;letter-spacing:0.118px;color:#585860;text-rendering:geometricPrecision;transform:scaleX(0.85);transform-origin:0 0;text-shadow:0.25px 0 0 #585860;">C0</div>
<div class="t" style="left:210.90px;top:524.05px;font:normal 12.0px/12px 'Liberation Mono',monospace;letter-spacing:0.118px;color:#585860;text-rendering:geometricPrecision;transform:scaleX(0.85);transform-origin:0 0;text-shadow:0.25px 0 0 #585860;">64</div>
<div class="t" style="left:229.50px;top:524.05px;font:normal 12.0px/12px 'Liberation Mono',monospace;letter-spacing:0.118px;color:#585860;text-rendering:geometricPrecision;transform:scaleX(0.85);transform-origin:0 0;text-shadow:0.25px 0 0 #585860;">B5</div>
<div class="t" style="left:248.10px;top:524.05px;font:normal 12.0px/12px 'Liberation Mono',monospace;letter-spacing:0.118px;color:#585860;text-rendering:geometricPrecision;transform:scaleX(0.85);transform-origin:0 0;text-shadow:0.25px 0 0 #585860;">6D</div>
<div class="t" style="left:266.70px;top:524.05px;font:normal 12.0px/12px 'Liberation Mono',monospace;letter-spacing:0.118px;color:#585860;text-rendering:geometricPrecision;transform:scaleX(0.85);transform-origin:0 0;text-shadow:0.25px 0 0 #585860;">03</div>
<div class="t" style="left:285.30px;top:524.05px;font:normal 12.0px/12px 'Liberation Mono',monospace;letter-spacing:0.118px;color:#585860;text-rendering:geometricPrecision;transform:scaleX(0.85);transform-origin:0 0;text-shadow:0.25px 0 0 #585860;">48</div>
<div class="t" style="left:303.90px;top:524.05px;font:normal 12.0px/12px 'Liberation Mono',monospace;letter-spacing:0.118px;color:#585860;text-rendering:geometricPrecision;transform:scaleX(0.85);transform-origin:0 0;text-shadow:0.25px 0 0 #585860;">F6</div>
<div class="t" style="left:322.50px;top:524.05px;font:normal 12.0px/12px 'Liberation Mono',monospace;letter-spacing:0.118px;color:#585860;text-rendering:geometricPrecision;transform:scaleX(0.85);transform-origin:0 0;text-shadow:0.25px 0 0 #585860;">6D</div>
<div class="t" style="left:341.10px;top:524.05px;font:normal 12.0px/12px 'Liberation Mono',monospace;letter-spacing:0.118px;color:#585860;text-rendering:geometricPrecision;transform:scaleX(0.85);transform-origin:0 0;text-shadow:0.25px 0 0 #585860;">03</div>
<div class="t" style="left:403.60px;top:524.05px;font:normal 12.0px/12px 'Liberation Mono',monospace;letter-spacing:0.118px;color:#585860;text-rendering:geometricPrecision;transform:scaleX(0.85);transform-origin:0 0;text-shadow:0.25px 0 0 #585860;"><span style="color:#8c8c92;text-shadow:none">┼┤</span>■...<span style="color:#8c8c92;text-shadow:none">┬┘</span><span style="color:#8c8c92;text-shadow:none">┴┐</span>_H<span style="color:#8c8c92;text-shadow:none">├┼</span>__</div>
<div class="t" style="left:5.40px;top:536.47px;font:normal 12.0px/12px 'Liberation Mono',monospace;letter-spacing:0.118px;color:#6a6a72;text-rendering:geometricPrecision;transform:scaleX(0.85);transform-origin:0 0;text-shadow:0.25px 0 0 #6a6a72;">0012EC08</div>
<div class="t" style="left:62.10px;top:536.47px;font:normal 12.0px/12px 'Liberation Mono',monospace;letter-spacing:0.118px;color:#585860;text-rendering:geometricPrecision;transform:scaleX(0.85);transform-origin:0 0;text-shadow:0.25px 0 0 #585860;">C9</div>
<div class="t" style="left:80.70px;top:536.47px;font:normal 12.0px/12px 'Liberation Mono',monospace;letter-spacing:0.118px;color:#585860;text-rendering:geometricPrecision;transform:scaleX(0.85);transform-origin:0 0;text-shadow:0.25px 0 0 #585860;">0D</div>
<div class="t" style="left:99.30px;top:536.47px;font:normal 12.0px/12px 'Liberation Mono',monospace;letter-spacing:0.118px;color:#585860;text-rendering:geometricPrecision;transform:scaleX(0.85);transform-origin:0 0;text-shadow:0.25px 0 0 #585860;">A0</div>
<div class="t" style="left:117.90px;top:536.47px;font:normal 12.0px/12px 'Liberation Mono',monospace;letter-spacing:0.118px;color:#585860;text-rendering:geometricPrecision;transform:scaleX(0.85);transform-origin:0 0;text-shadow:0.25px 0 0 #585860;">00</div>
<div class="t" style="left:136.50px;top:536.47px;font:normal 12.0px/12px 'Liberation Mono',monospace;letter-spacing:0.118px;color:#585860;text-rendering:geometricPrecision;transform:scaleX(0.85);transform-origin:0 0;text-shadow:0.25px 0 0 #585860;">30</div>
<div class="t" style="left:155.10px;top:536.47px;font:normal 12.0px/12px 'Liberation Mono',monospace;letter-spacing:0.118px;color:#585860;text-rendering:geometricPrecision;transform:scaleX(0.85);transform-origin:0 0;text-shadow:0.25px 0 0 #585860;">EC</div>
<div class="t" style="left:173.70px;top:536.47px;font:normal 12.0px/12px 'Liberation Mono',monospace;letter-spacing:0.118px;color:#585860;text-rendering:geometricPrecision;transform:scaleX(0.85);transform-origin:0 0;text-shadow:0.25px 0 0 #585860;">12</div>
<div class="t" style="left:192.30px;top:536.47px;font:normal 12.0px/12px 'Liberation Mono',monospace;letter-spacing:0.118px;color:#585860;text-rendering:geometricPrecision;transform:scaleX(0.85);transform-origin:0 0;text-shadow:0.25px 0 0 #585860;">00</div>
<div class="t" style="left:210.90px;top:536.47px;font:normal 12.0px/12px 'Liberation Mono',monospace;letter-spacing:0.118px;color:#585860;text-rendering:geometricPrecision;transform:scaleX(0.85);transform-origin:0 0;text-shadow:0.25px 0 0 #585860;">94</div>
<div class="t" style="left:229.50px;top:536.47px;font:normal 12.0px/12px 'Liberation Mono',monospace;letter-spacing:0.118px;color:#585860;text-rendering:geometricPrecision;transform:scaleX(0.85);transform-origin:0 0;text-shadow:0.25px 0 0 #585860;">EC</div>
<div class="t" style="left:248.10px;top:536.47px;font:normal 12.0px/12px 'Liberation Mono',monospace;letter-spacing:0.118px;color:#585860;text-rendering:geometricPrecision;transform:scaleX(0.85);transform-origin:0 0;text-shadow:0.25px 0 0 #585860;">12</div>
<div class="t" style="left:266.70px;top:536.47px;font:normal 12.0px/12px 'Liberation Mono',monospace;letter-spacing:0.118px;color:#585860;text-rendering:geometricPrecision;transform:scaleX(0.85);transform-origin:0 0;text-shadow:0.25px 0 0 #585860;">00</div>
<div class="t" style="left:285.30px;top:536.47px;font:normal 12.0px/12px 'Liberation Mono',monospace;letter-spacing:0.118px;color:#585860;text-rendering:geometricPrecision;transform:scaleX(0.85);transform-origin:0 0;text-shadow:0.25px 0 0 #585860;">95</div>
<div class="t" style="left:303.90px;top:536.47px;font:normal 12.0px/12px 'Liberation Mono',monospace;letter-spacing:0.118px;color:#585860;text-rendering:geometricPrecision;transform:scaleX(0.85);transform-origin:0 0;text-shadow:0.25px 0 0 #585860;">12</div>
<div class="t" style="left:322.50px;top:536.47px;font:normal 12.0px/12px 'Liberation Mono',monospace;letter-spacing:0.118px;color:#585860;text-rendering:geometricPrecision;transform:scaleX(0.85);transform-origin:0 0;text-shadow:0.25px 0 0 #585860;">75</div>
<div class="t" style="left:341.10px;top:536.47px;font:normal 12.0px/12px 'Liberation Mono',monospace;letter-spacing:0.118px;color:#585860;text-rendering:geometricPrecision;transform:scaleX(0.85);transform-origin:0 0;text-shadow:0.25px 0 0 #585860;">80</div>
<div class="t" style="left:403.60px;top:536.47px;font:normal 12.0px/12px 'Liberation Mono',monospace;letter-spacing:0.118px;color:#585860;text-rendering:geometricPrecision;transform:scaleX(0.85);transform-origin:0 0;text-shadow:0.25px 0 0 #585860;">??0?.<span style="color:#8c8c92;text-shadow:none">┼┤</span>■.?u■</div>
<div class="t" style="left:5.40px;top:548.89px;font:normal 12.0px/12px 'Liberation Mono',monospace;letter-spacing:0.118px;color:#6a6a72;text-rendering:geometricPrecision;transform:scaleX(0.85);transform-origin:0 0;text-shadow:0.25px 0 0 #6a6a72;">0012EC18</div>
<div class="t" style="left:62.10px;top:548.89px;font:normal 12.0px/12px 'Liberation Mono',monospace;letter-spacing:0.118px;color:#585860;text-rendering:geometricPrecision;transform:scaleX(0.85);transform-origin:0 0;text-shadow:0.25px 0 0 #585860;">C4</div>
<div class="t" style="left:80.70px;top:548.89px;font:normal 12.0px/12px 'Liberation Mono',monospace;letter-spacing:0.118px;color:#585860;text-rendering:geometricPrecision;transform:scaleX(0.85);transform-origin:0 0;text-shadow:0.25px 0 0 #585860;">EE</div>
<div class="t" style="left:99.30px;top:548.89px;font:normal 12.0px/12px 'Liberation Mono',monospace;letter-spacing:0.118px;color:#585860;text-rendering:geometricPrecision;transform:scaleX(0.85);transform-origin:0 0;text-shadow:0.25px 0 0 #585860;">12</div>
<div class="t" style="left:117.90px;top:548.89px;font:normal 12.0px/12px 'Liberation Mono',monospace;letter-spacing:0.118px;color:#585860;text-rendering:geometricPrecision;transform:scaleX(0.85);transform-origin:0 0;text-shadow:0.25px 0 0 #585860;">00</div>
<div class="t" style="left:136.50px;top:548.89px;font:normal 12.0px/12px 'Liberation Mono',monospace;letter-spacing:0.118px;color:#585860;text-rendering:geometricPrecision;transform:scaleX(0.85);transform-origin:0 0;text-shadow:0.25px 0 0 #585860;">C8</div>
<div class="t" style="left:155.10px;top:548.89px;font:normal 12.0px/12px 'Liberation Mono',monospace;letter-spacing:0.118px;color:#585860;text-rendering:geometricPrecision;transform:scaleX(0.85);transform-origin:0 0;text-shadow:0.25px 0 0 #585860;">4B</div>
<div class="t" style="left:173.70px;top:548.89px;font:normal 12.0px/12px 'Liberation Mono',monospace;letter-spacing:0.118px;color:#585860;text-rendering:geometricPrecision;transform:scaleX(0.85);transform-origin:0 0;text-shadow:0.25px 0 0 #585860;">F1</div>
<div class="t" style="left:192.30px;top:548.89px;font:normal 12.0px/12px 'Liberation Mono',monospace;letter-spacing:0.118px;color:#585860;text-rendering:geometricPrecision;transform:scaleX(0.85);transform-origin:0 0;text-shadow:0.25px 0 0 #585860;">01</div>
<div class="t" style="left:210.90px;top:548.89px;font:normal 12.0px/12px 'Liberation Mono',monospace;letter-spacing:0.118px;color:#585860;text-rendering:geometricPrecision;transform:scaleX(0.85);transform-origin:0 0;text-shadow:0.25px 0 0 #585860;">0D</div>
<div class="t" style="left:229.50px;top:548.89px;font:normal 12.0px/12px 'Liberation Mono',monospace;letter-spacing:0.118px;color:#585860;text-rendering:geometricPrecision;transform:scaleX(0.85);transform-origin:0 0;text-shadow:0.25px 0 0 #585860;">00</div>
<div class="t" style="left:248.10px;top:548.89px;font:normal 12.0px/12px 'Liberation Mono',monospace;letter-spacing:0.118px;color:#585860;text-rendering:geometricPrecision;transform:scaleX(0.85);transform-origin:0 0;text-shadow:0.25px 0 0 #585860;">00</div>
<div class="t" style="left:266.70px;top:548.89px;font:normal 12.0px/12px 'Liberation Mono',monospace;letter-spacing:0.118px;color:#585860;text-rendering:geometricPrecision;transform:scaleX(0.85);transform-origin:0 0;text-shadow:0.25px 0 0 #585860;">00</div>
<div class="t" style="left:285.30px;top:548.89px;font:normal 12.0px/12px 'Liberation Mono',monospace;letter-spacing:0.118px;color:#585860;text-rendering:geometricPrecision;transform:scaleX(0.85);transform-origin:0 0;text-shadow:0.25px 0 0 #585860;">00</div>
<div class="t" style="left:303.90px;top:548.89px;font:normal 12.0px/12px 'Liberation Mono',monospace;letter-spacing:0.118px;color:#585860;text-rendering:geometricPrecision;transform:scaleX(0.85);transform-origin:0 0;text-shadow:0.25px 0 0 #585860;">00</div>
<div class="t" style="left:322.50px;top:548.89px;font:normal 12.0px/12px 'Liberation Mono',monospace;letter-spacing:0.118px;color:#585860;text-rendering:geometricPrecision;transform:scaleX(0.85);transform-origin:0 0;text-shadow:0.25px 0 0 #585860;">01</div>
<div class="t" style="left:341.10px;top:548.89px;font:normal 12.0px/12px 'Liberation Mono',monospace;letter-spacing:0.118px;color:#585860;text-rendering:geometricPrecision;transform:scaleX(0.85);transform-origin:0 0;text-shadow:0.25px 0 0 #585860;">C0</div>
<div class="t" style="left:403.60px;top:548.89px;font:normal 12.0px/12px 'Liberation Mono',monospace;letter-spacing:0.118px;color:#585860;text-rendering:geometricPrecision;transform:scaleX(0.85);transform-origin:0 0;text-shadow:0.25px 0 0 #585860;"><span style="color:#8c8c92;text-shadow:none">┼┤</span>■.<span style="color:#8c8c92;text-shadow:none">┬┘</span>?......<span style="color:#8c8c92;text-shadow:none">┴┐</span></div>
<div class="t" style="left:5.40px;top:561.31px;font:normal 12.0px/12px 'Liberation Mono',monospace;letter-spacing:0.118px;color:#6a6a72;text-rendering:geometricPrecision;transform:scaleX(0.85);transform-origin:0 0;text-shadow:0.25px 0 0 #6a6a72;">0012EC28</div>
<div class="t" style="left:62.10px;top:561.31px;font:normal 12.0px/12px 'Liberation Mono',monospace;letter-spacing:0.118px;color:#585860;text-rendering:geometricPrecision;transform:scaleX(0.85);transform-origin:0 0;text-shadow:0.25px 0 0 #585860;">0D</div>
<div class="t" style="left:80.70px;top:561.31px;font:normal 12.0px/12px 'Liberation Mono',monospace;letter-spacing:0.118px;color:#585860;text-rendering:geometricPrecision;transform:scaleX(0.85);transform-origin:0 0;text-shadow:0.25px 0 0 #585860;">00</div>
<div class="t" style="left:99.30px;top:561.31px;font:normal 12.0px/12px 'Liberation Mono',monospace;letter-spacing:0.118px;color:#585860;text-rendering:geometricPrecision;transform:scaleX(0.85);transform-origin:0 0;text-shadow:0.25px 0 0 #585860;">00</div>
<div class="t" style="left:117.90px;top:561.31px;font:normal 12.0px/12px 'Liberation Mono',monospace;letter-spacing:0.118px;color:#585860;text-rendering:geometricPrecision;transform:scaleX(0.85);transform-origin:0 0;text-shadow:0.25px 0 0 #585860;">01</div>
<div class="t" style="left:136.50px;top:561.31px;font:normal 12.0px/12px 'Liberation Mono',monospace;letter-spacing:0.118px;color:#585860;text-rendering:geometricPrecision;transform:scaleX(0.85);transform-origin:0 0;text-shadow:0.25px 0 0 #585860;">B0</div>
<div class="t" style="left:155.10px;top:561.31px;font:normal 12.0px/12px 'Liberation Mono',monospace;letter-spacing:0.118px;color:#585860;text-rendering:geometricPrecision;transform:scaleX(0.85);transform-origin:0 0;text-shadow:0.25px 0 0 #585860;">DC</div>
<div class="t" style="left:173.70px;top:561.31px;font:normal 12.0px/12px 'Liberation Mono',monospace;letter-spacing:0.118px;color:#585860;text-rendering:geometricPrecision;transform:scaleX(0.85);transform-origin:0 0;text-shadow:0.25px 0 0 #585860;">EF</div>
<div class="t" style="left:192.30px;top:561.31px;font:normal 12.0px/12px 'Liberation Mono',monospace;letter-spacing:0.118px;color:#585860;text-rendering:geometricPrecision;transform:scaleX(0.85);transform-origin:0 0;text-shadow:0.25px 0 0 #585860;">01</div>
<div class="t" style="left:210.90px;top:561.31px;font:normal 12.0px/12px 'Liberation Mono',monospace;letter-spacing:0.118px;color:#585860;text-rendering:geometricPrecision;transform:scaleX(0.85);transform-origin:0 0;text-shadow:0.25px 0 0 #585860;">00</div>
<div class="t" style="left:229.50px;top:561.31px;font:normal 12.0px/12px 'Liberation Mono',monospace;letter-spacing:0.118px;color:#585860;text-rendering:geometricPrecision;transform:scaleX(0.85);transform-origin:0 0;text-shadow:0.25px 0 0 #585860;">00</div>
<div class="t" style="left:248.10px;top:561.31px;font:normal 12.0px/12px 'Liberation Mono',monospace;letter-spacing:0.118px;color:#585860;text-rendering:geometricPrecision;transform:scaleX(0.85);transform-origin:0 0;text-shadow:0.25px 0 0 #585860;">00</div>
<div class="t" style="left:266.70px;top:561.31px;font:normal 12.0px/12px 'Liberation Mono',monospace;letter-spacing:0.118px;color:#585860;text-rendering:geometricPrecision;transform:scaleX(0.85);transform-origin:0 0;text-shadow:0.25px 0 0 #585860;">20</div>
<div class="t" style="left:285.30px;top:561.31px;font:normal 12.0px/12px 'Liberation Mono',monospace;letter-spacing:0.118px;color:#585860;text-rendering:geometricPrecision;transform:scaleX(0.85);transform-origin:0 0;text-shadow:0.25px 0 0 #585860;">B1</div>
<div class="t" style="left:303.90px;top:561.31px;font:normal 12.0px/12px 'Liberation Mono',monospace;letter-spacing:0.118px;color:#585860;text-rendering:geometricPrecision;transform:scaleX(0.85);transform-origin:0 0;text-shadow:0.25px 0 0 #585860;">00</div>
<div class="t" style="left:322.50px;top:561.31px;font:normal 12.0px/12px 'Liberation Mono',monospace;letter-spacing:0.118px;color:#585860;text-rendering:geometricPrecision;transform:scaleX(0.85);transform-origin:0 0;text-shadow:0.25px 0 0 #585860;">00</div>
<div class="t" style="left:341.10px;top:561.31px;font:normal 12.0px/12px 'Liberation Mono',monospace;letter-spacing:0.118px;color:#585860;text-rendering:geometricPrecision;transform:scaleX(0.85);transform-origin:0 0;text-shadow:0.25px 0 0 #585860;">00</div>
<div class="t" style="left:403.60px;top:561.31px;font:normal 12.0px/12px 'Liberation Mono',monospace;letter-spacing:0.118px;color:#585860;text-rendering:geometricPrecision;transform:scaleX(0.85);transform-origin:0 0;text-shadow:0.25px 0 0 #585860;">...<span style="color:#8c8c92;text-shadow:none">┼┤</span>?...  ?..</div>
<div class="t" style="left:5.40px;top:573.73px;font:normal 12.0px/12px 'Liberation Mono',monospace;letter-spacing:0.118px;color:#6a6a72;text-rendering:geometricPrecision;transform:scaleX(0.85);transform-origin:0 0;text-shadow:0.25px 0 0 #6a6a72;">0012EC38</div>
<div class="t" style="left:62.10px;top:573.73px;font:normal 12.0px/12px 'Liberation Mono',monospace;letter-spacing:0.118px;color:#585860;text-rendering:geometricPrecision;transform:scaleX(0.85);transform-origin:0 0;text-shadow:0.25px 0 0 #585860;">A4</div>
<div class="t" style="left:80.70px;top:573.73px;font:normal 12.0px/12px 'Liberation Mono',monospace;letter-spacing:0.118px;color:#585860;text-rendering:geometricPrecision;transform:scaleX(0.85);transform-origin:0 0;text-shadow:0.25px 0 0 #585860;">E9</div>
<div class="t" style="left:99.30px;top:573.73px;font:normal 12.0px/12px 'Liberation Mono',monospace;letter-spacing:0.118px;color:#585860;text-rendering:geometricPrecision;transform:scaleX(0.85);transform-origin:0 0;text-shadow:0.25px 0 0 #585860;">1D</div>
<div class="t" style="left:117.90px;top:573.73px;font:normal 12.0px/12px 'Liberation Mono',monospace;letter-spacing:0.118px;color:#585860;text-rendering:geometricPrecision;transform:scaleX(0.85);transform-origin:0 0;text-shadow:0.25px 0 0 #585860;">01</div>
<div class="t" style="left:136.50px;top:573.73px;font:normal 12.0px/12px 'Liberation Mono',monospace;letter-spacing:0.118px;color:#585860;text-rendering:geometricPrecision;transform:scaleX(0.85);transform-origin:0 0;text-shadow:0.25px 0 0 #585860;">06</div>
<div class="t" style="left:155.10px;top:573.73px;font:normal 12.0px/12px 'Liberation Mono',monospace;letter-spacing:0.118px;color:#585860;text-rendering:geometricPrecision;transform:scaleX(0.85);transform-origin:0 0;text-shadow:0.25px 0 0 #585860;">06</div>
<div class="t" style="left:173.70px;top:573.73px;font:normal 12.0px/12px 'Liberation Mono',monospace;letter-spacing:0.118px;color:#585860;text-rendering:geometricPrecision;transform:scaleX(0.85);transform-origin:0 0;text-shadow:0.25px 0 0 #585860;">01</div>
<div class="t" style="left:192.30px;top:573.73px;font:normal 12.0px/12px 'Liberation Mono',monospace;letter-spacing:0.118px;color:#585860;text-rendering:geometricPrecision;transform:scaleX(0.85);transform-origin:0 0;text-shadow:0.25px 0 0 #585860;">01</div>
<div class="t" style="left:210.90px;top:573.73px;font:normal 12.0px/12px 'Liberation Mono',monospace;letter-spacing:0.118px;color:#585860;text-rendering:geometricPrecision;transform:scaleX(0.85);transform-origin:0 0;text-shadow:0.25px 0 0 #585860;">0C</div>
<div class="t" style="left:229.50px;top:573.73px;font:normal 12.0px/12px 'Liberation Mono',monospace;letter-spacing:0.118px;color:#585860;text-rendering:geometricPrecision;transform:scaleX(0.85);transform-origin:0 0;text-shadow:0.25px 0 0 #585860;">82</div>
<div class="t" style="left:248.10px;top:573.73px;font:normal 12.0px/12px 'Liberation Mono',monospace;letter-spacing:0.118px;color:#585860;text-rendering:geometricPrecision;transform:scaleX(0.85);transform-origin:0 0;text-shadow:0.25px 0 0 #585860;">CC</div>
<div class="t" style="left:266.70px;top:573.73px;font:normal 12.0px/12px 'Liberation Mono',monospace;letter-spacing:0.118px;color:#585860;text-rendering:geometricPrecision;transform:scaleX(0.85);transform-origin:0 0;text-shadow:0.25px 0 0 #585860;">02</div>
<div class="t" style="left:285.30px;top:573.73px;font:normal 12.0px/12px 'Liberation Mono',monospace;letter-spacing:0.118px;color:#585860;text-rendering:geometricPrecision;transform:scaleX(0.85);transform-origin:0 0;text-shadow:0.25px 0 0 #585860;">00</div>
<div class="t" style="left:303.90px;top:573.73px;font:normal 12.0px/12px 'Liberation Mono',monospace;letter-spacing:0.118px;color:#585860;text-rendering:geometricPrecision;transform:scaleX(0.85);transform-origin:0 0;text-shadow:0.25px 0 0 #585860;">00</div>
<div class="t" style="left:322.50px;top:573.73px;font:normal 12.0px/12px 'Liberation Mono',monospace;letter-spacing:0.118px;color:#585860;text-rendering:geometricPrecision;transform:scaleX(0.85);transform-origin:0 0;text-shadow:0.25px 0 0 #585860;">01</div>
<div class="t" style="left:341.10px;top:573.73px;font:normal 12.0px/12px 'Liberation Mono',monospace;letter-spacing:0.118px;color:#585860;text-rendering:geometricPrecision;transform:scaleX(0.85);transform-origin:0 0;text-shadow:0.25px 0 0 #585860;">C0</div>
<div class="t" style="left:403.60px;top:573.73px;font:normal 12.0px/12px 'Liberation Mono',monospace;letter-spacing:0.118px;color:#585860;text-rendering:geometricPrecision;transform:scaleX(0.85);transform-origin:0 0;text-shadow:0.25px 0 0 #585860;"><span style="color:#8c8c92;text-shadow:none">┼┤</span>■<span style="color:#8c8c92;text-shadow:none">┬┘</span>■<span style="color:#8c8c92;text-shadow:none">┴┐</span><span style="color:#8c8c92;text-shadow:none">├┼</span><span style="color:#8c8c92;text-shadow:none">┌┼</span>.<span style="color:#8c8c92;text-shadow:none">┼┤</span></div>
<div class="t" style="left:5.40px;top:586.15px;font:normal 12.0px/12px 'Liberation Mono',monospace;letter-spacing:0.118px;color:#6a6a72;text-rendering:geometricPrecision;transform:scaleX(0.85);transform-origin:0 0;text-shadow:0.25px 0 0 #6a6a72;">0012EC48</div>
<div class="t" style="left:62.10px;top:586.15px;font:normal 12.0px/12px 'Liberation Mono',monospace;letter-spacing:0.118px;color:#585860;text-rendering:geometricPrecision;transform:scaleX(0.85);transform-origin:0 0;text-shadow:0.25px 0 0 #585860;">0D</div>
<div class="t" style="left:80.70px;top:586.15px;font:normal 12.0px/12px 'Liberation Mono',monospace;letter-spacing:0.118px;color:#585860;text-rendering:geometricPrecision;transform:scaleX(0.85);transform-origin:0 0;text-shadow:0.25px 0 0 #585860;">00</div>
<div class="t" style="left:99.30px;top:586.15px;font:normal 12.0px/12px 'Liberation Mono',monospace;letter-spacing:0.118px;color:#585860;text-rendering:geometricPrecision;transform:scaleX(0.85);transform-origin:0 0;text-shadow:0.25px 0 0 #585860;">00</div>
<div class="t" style="left:117.90px;top:586.15px;font:normal 12.0px/12px 'Liberation Mono',monospace;letter-spacing:0.118px;color:#585860;text-rendering:geometricPrecision;transform:scaleX(0.85);transform-origin:0 0;text-shadow:0.25px 0 0 #585860;">00</div>
<div class="t" style="left:136.50px;top:586.15px;font:normal 12.0px/12px 'Liberation Mono',monospace;letter-spacing:0.118px;color:#585860;text-rendering:geometricPrecision;transform:scaleX(0.85);transform-origin:0 0;text-shadow:0.25px 0 0 #585860;">00</div>
<div class="t" style="left:155.10px;top:586.15px;font:normal 12.0px/12px 'Liberation Mono',monospace;letter-spacing:0.118px;color:#585860;text-rendering:geometricPrecision;transform:scaleX(0.85);transform-origin:0 0;text-shadow:0.25px 0 0 #585860;">00</div>
<div class="t" style="left:173.70px;top:586.15px;font:normal 12.0px/12px 'Liberation Mono',monospace;letter-spacing:0.118px;color:#585860;text-rendering:geometricPrecision;transform:scaleX(0.85);transform-origin:0 0;text-shadow:0.25px 0 0 #585860;">01</div>
<div class="t" style="left:192.30px;top:586.15px;font:normal 12.0px/12px 'Liberation Mono',monospace;letter-spacing:0.118px;color:#585860;text-rendering:geometricPrecision;transform:scaleX(0.85);transform-origin:0 0;text-shadow:0.25px 0 0 #585860;">C0</div>
<div class="t" style="left:210.90px;top:586.15px;font:normal 12.0px/12px 'Liberation Mono',monospace;letter-spacing:0.118px;color:#585860;text-rendering:geometricPrecision;transform:scaleX(0.85);transform-origin:0 0;text-shadow:0.25px 0 0 #585860;">44</div>
<div class="t" style="left:229.50px;top:586.15px;font:normal 12.0px/12px 'Liberation Mono',monospace;letter-spacing:0.118px;color:#585860;text-rendering:geometricPrecision;transform:scaleX(0.85);transform-origin:0 0;text-shadow:0.25px 0 0 #585860;">B5</div>
<div class="t" style="left:248.10px;top:586.15px;font:normal 12.0px/12px 'Liberation Mono',monospace;letter-spacing:0.118px;color:#585860;text-rendering:geometricPrecision;transform:scaleX(0.85);transform-origin:0 0;text-shadow:0.25px 0 0 #585860;">6D</div>
<div class="t" style="left:266.70px;top:586.15px;font:normal 12.0px/12px 'Liberation Mono',monospace;letter-spacing:0.118px;color:#585860;text-rendering:geometricPrecision;transform:scaleX(0.85);transform-origin:0 0;text-shadow:0.25px 0 0 #585860;">03</div>
<div class="t" style="left:285.30px;top:586.15px;font:normal 12.0px/12px 'Liberation Mono',monospace;letter-spacing:0.118px;color:#585860;text-rendering:geometricPrecision;transform:scaleX(0.85);transform-origin:0 0;text-shadow:0.25px 0 0 #585860;">00</div>
<div class="t" style="left:303.90px;top:586.15px;font:normal 12.0px/12px 'Liberation Mono',monospace;letter-spacing:0.118px;color:#585860;text-rendering:geometricPrecision;transform:scaleX(0.85);transform-origin:0 0;text-shadow:0.25px 0 0 #585860;">00</div>
<div class="t" style="left:322.50px;top:586.15px;font:normal 12.0px/12px 'Liberation Mono',monospace;letter-spacing:0.118px;color:#585860;text-rendering:geometricPrecision;transform:scaleX(0.85);transform-origin:0 0;text-shadow:0.25px 0 0 #585860;">00</div>
<div class="t" style="left:341.10px;top:586.15px;font:normal 12.0px/12px 'Liberation Mono',monospace;letter-spacing:0.118px;color:#585860;text-rendering:geometricPrecision;transform:scaleX(0.85);transform-origin:0 0;text-shadow:0.25px 0 0 #585860;">00</div>
<div class="t" style="left:403.60px;top:586.15px;font:normal 12.0px/12px 'Liberation Mono',monospace;letter-spacing:0.118px;color:#585860;text-rendering:geometricPrecision;transform:scaleX(0.85);transform-origin:0 0;text-shadow:0.25px 0 0 #585860;">......<span style="color:#8c8c92;text-shadow:none">┼┤</span><span style="color:#8c8c92;text-shadow:none">┬┘</span> ....</div>
<div class="t" style="left:5.40px;top:598.57px;font:normal 12.0px/12px 'Liberation Mono',monospace;letter-spacing:0.118px;color:#6a6a72;text-rendering:geometricPrecision;transform:scaleX(0.85);transform-origin:0 0;text-shadow:0.25px 0 0 #6a6a72;">0012EC58</div>
<div class="t" style="left:62.10px;top:598.57px;font:normal 12.0px/12px 'Liberation Mono',monospace;letter-spacing:0.118px;color:#585860;text-rendering:geometricPrecision;transform:scaleX(0.85);transform-origin:0 0;text-shadow:0.25px 0 0 #585860;">06</div>
<div class="t" style="left:80.70px;top:598.57px;font:normal 12.0px/12px 'Liberation Mono',monospace;letter-spacing:0.118px;color:#585860;text-rendering:geometricPrecision;transform:scaleX(0.85);transform-origin:0 0;text-shadow:0.25px 0 0 #585860;">12</div>
<div class="t" style="left:99.30px;top:598.57px;font:normal 12.0px/12px 'Liberation Mono',monospace;letter-spacing:0.118px;color:#585860;text-rendering:geometricPrecision;transform:scaleX(0.85);transform-origin:0 0;text-shadow:0.25px 0 0 #585860;">75</div>
<div class="t" style="left:117.90px;top:598.57px;font:normal 12.0px/12px 'Liberation Mono',monospace;letter-spacing:0.118px;color:#585860;text-rendering:geometricPrecision;transform:scaleX(0.85);transform-origin:0 0;text-shadow:0.25px 0 0 #585860;">80</div>
<div class="t" style="left:136.50px;top:598.57px;font:normal 12.0px/12px 'Liberation Mono',monospace;letter-spacing:0.118px;color:#585860;text-rendering:geometricPrecision;transform:scaleX(0.85);transform-origin:0 0;text-shadow:0.25px 0 0 #585860;">6C</div>
<div class="t" style="left:155.10px;top:598.57px;font:normal 12.0px/12px 'Liberation Mono',monospace;letter-spacing:0.118px;color:#585860;text-rendering:geometricPrecision;transform:scaleX(0.85);transform-origin:0 0;text-shadow:0.25px 0 0 #585860;">DC</div>
<div class="t" style="left:173.70px;top:598.57px;font:normal 12.0px/12px 'Liberation Mono',monospace;letter-spacing:0.118px;color:#585860;text-rendering:geometricPrecision;transform:scaleX(0.85);transform-origin:0 0;text-shadow:0.25px 0 0 #585860;">EF</div>
<div class="t" style="left:192.30px;top:598.57px;font:normal 12.0px/12px 'Liberation Mono',monospace;letter-spacing:0.118px;color:#585860;text-rendering:geometricPrecision;transform:scaleX(0.85);transform-origin:0 0;text-shadow:0.25px 0 0 #585860;">01</div>
<div class="t" style="left:210.90px;top:598.57px;font:normal 12.0px/12px 'Liberation Mono',monospace;letter-spacing:0.118px;color:#585860;text-rendering:geometricPrecision;transform:scaleX(0.85);transform-origin:0 0;text-shadow:0.25px 0 0 #585860;">9C</div>
<div class="t" style="left:229.50px;top:598.57px;font:normal 12.0px/12px 'Liberation Mono',monospace;letter-spacing:0.118px;color:#585860;text-rendering:geometricPrecision;transform:scaleX(0.85);transform-origin:0 0;text-shadow:0.25px 0 0 #585860;">EC</div>
<div class="t" style="left:248.10px;top:598.57px;font:normal 12.0px/12px 'Liberation Mono',monospace;letter-spacing:0.118px;color:#585860;text-rendering:geometricPrecision;transform:scaleX(0.85);transform-origin:0 0;text-shadow:0.25px 0 0 #585860;">12</div>
<div class="t" style="left:266.70px;top:598.57px;font:normal 12.0px/12px 'Liberation Mono',monospace;letter-spacing:0.118px;color:#585860;text-rendering:geometricPrecision;transform:scaleX(0.85);transform-origin:0 0;text-shadow:0.25px 0 0 #585860;">00</div>
<div class="t" style="left:285.30px;top:598.57px;font:normal 12.0px/12px 'Liberation Mono',monospace;letter-spacing:0.118px;color:#585860;text-rendering:geometricPrecision;transform:scaleX(0.85);transform-origin:0 0;text-shadow:0.25px 0 0 #585860;">48</div>
<div class="t" style="left:303.90px;top:598.57px;font:normal 12.0px/12px 'Liberation Mono',monospace;letter-spacing:0.118px;color:#585860;text-rendering:geometricPrecision;transform:scaleX(0.85);transform-origin:0 0;text-shadow:0.25px 0 0 #585860;">BE</div>
<div class="t" style="left:322.50px;top:598.57px;font:normal 12.0px/12px 'Liberation Mono',monospace;letter-spacing:0.118px;color:#585860;text-rendering:geometricPrecision;transform:scaleX(0.85);transform-origin:0 0;text-shadow:0.25px 0 0 #585860;">0F</div>
<div class="t" style="left:341.10px;top:598.57px;font:normal 12.0px/12px 'Liberation Mono',monospace;letter-spacing:0.118px;color:#585860;text-rendering:geometricPrecision;transform:scaleX(0.85);transform-origin:0 0;text-shadow:0.25px 0 0 #585860;">01</div>
<div class="t" style="left:403.60px;top:598.57px;font:normal 12.0px/12px 'Liberation Mono',monospace;letter-spacing:0.118px;color:#585860;text-rendering:geometricPrecision;transform:scaleX(0.85);transform-origin:0 0;text-shadow:0.25px 0 0 #585860;">■■u■l<span style="color:#8c8c92;text-shadow:none">┼┤</span><span style="color:#8c8c92;text-shadow:none">┬┘</span>■.H?<span style="color:#8c8c92;text-shadow:none">┴┐</span></div>
<div class="t" style="left:5.40px;top:610.99px;font:normal 12.0px/12px 'Liberation Mono',monospace;letter-spacing:0.118px;color:#6a6a72;text-rendering:geometricPrecision;transform:scaleX(0.85);transform-origin:0 0;text-shadow:0.25px 0 0 #6a6a72;">0012EC68</div>
<div class="t" style="left:62.10px;top:610.99px;font:normal 12.0px/12px 'Liberation Mono',monospace;letter-spacing:0.118px;color:#585860;text-rendering:geometricPrecision;transform:scaleX(0.85);transform-origin:0 0;text-shadow:0.25px 0 0 #585860;">00</div>
<div class="t" style="left:80.70px;top:610.99px;font:normal 12.0px/12px 'Liberation Mono',monospace;letter-spacing:0.118px;color:#585860;text-rendering:geometricPrecision;transform:scaleX(0.85);transform-origin:0 0;text-shadow:0.25px 0 0 #585860;">00</div>
<div class="t" style="left:99.30px;top:610.99px;font:normal 12.0px/12px 'Liberation Mono',monospace;letter-spacing:0.118px;color:#585860;text-rendering:geometricPrecision;transform:scaleX(0.85);transform-origin:0 0;text-shadow:0.25px 0 0 #585860;">00</div>
<div class="t" style="left:117.90px;top:610.99px;font:normal 12.0px/12px 'Liberation Mono',monospace;letter-spacing:0.118px;color:#585860;text-rendering:geometricPrecision;transform:scaleX(0.85);transform-origin:0 0;text-shadow:0.25px 0 0 #585860;">00</div>
<div class="t" style="left:136.50px;top:610.99px;font:normal 12.0px/12px 'Liberation Mono',monospace;letter-spacing:0.118px;color:#585860;text-rendering:geometricPrecision;transform:scaleX(0.85);transform-origin:0 0;text-shadow:0.25px 0 0 #585860;">9C</div>
<div class="t" style="left:155.10px;top:610.99px;font:normal 12.0px/12px 'Liberation Mono',monospace;letter-spacing:0.118px;color:#585860;text-rendering:geometricPrecision;transform:scaleX(0.85);transform-origin:0 0;text-shadow:0.25px 0 0 #585860;">DB</div>
<div class="t" style="left:173.70px;top:610.99px;font:normal 12.0px/12px 'Liberation Mono',monospace;letter-spacing:0.118px;color:#585860;text-rendering:geometricPrecision;transform:scaleX(0.85);transform-origin:0 0;text-shadow:0.25px 0 0 #585860;">EA</div>
<div class="t" style="left:192.30px;top:610.99px;font:normal 12.0px/12px 'Liberation Mono',monospace;letter-spacing:0.118px;color:#585860;text-rendering:geometricPrecision;transform:scaleX(0.85);transform-origin:0 0;text-shadow:0.25px 0 0 #585860;">01</div>
<div class="t" style="left:210.90px;top:610.99px;font:normal 12.0px/12px 'Liberation Mono',monospace;letter-spacing:0.118px;color:#585860;text-rendering:geometricPrecision;transform:scaleX(0.85);transform-origin:0 0;text-shadow:0.25px 0 0 #585860;">F9</div>
<div class="t" style="left:229.50px;top:610.99px;font:normal 12.0px/12px 'Liberation Mono',monospace;letter-spacing:0.118px;color:#585860;text-rendering:geometricPrecision;transform:scaleX(0.85);transform-origin:0 0;text-shadow:0.25px 0 0 #585860;">12</div>
<div class="t" style="left:248.10px;top:610.99px;font:normal 12.0px/12px 'Liberation Mono',monospace;letter-spacing:0.118px;color:#585860;text-rendering:geometricPrecision;transform:scaleX(0.85);transform-origin:0 0;text-shadow:0.25px 0 0 #585860;">75</div>
<div class="t" style="left:266.70px;top:610.99px;font:normal 12.0px/12px 'Liberation Mono',monospace;letter-spacing:0.118px;color:#585860;text-rendering:geometricPrecision;transform:scaleX(0.85);transform-origin:0 0;text-shadow:0.25px 0 0 #585860;">80</div>
<div class="t" style="left:285.30px;top:610.99px;font:normal 12.0px/12px 'Liberation Mono',monospace;letter-spacing:0.118px;color:#585860;text-rendering:geometricPrecision;transform:scaleX(0.85);transform-origin:0 0;text-shadow:0.25px 0 0 #585860;">C4</div>
<div class="t" style="left:303.90px;top:610.99px;font:normal 12.0px/12px 'Liberation Mono',monospace;letter-spacing:0.118px;color:#585860;text-rendering:geometricPrecision;transform:scaleX(0.85);transform-origin:0 0;text-shadow:0.25px 0 0 #585860;">EE</div>
<div class="t" style="left:322.50px;top:610.99px;font:normal 12.0px/12px 'Liberation Mono',monospace;letter-spacing:0.118px;color:#585860;text-rendering:geometricPrecision;transform:scaleX(0.85);transform-origin:0 0;text-shadow:0.25px 0 0 #585860;">12</div>
<div class="t" style="left:341.10px;top:610.99px;font:normal 12.0px/12px 'Liberation Mono',monospace;letter-spacing:0.118px;color:#585860;text-rendering:geometricPrecision;transform:scaleX(0.85);transform-origin:0 0;text-shadow:0.25px 0 0 #585860;">00</div>
<div class="t" style="left:403.60px;top:610.99px;font:normal 12.0px/12px 'Liberation Mono',monospace;letter-spacing:0.118px;color:#585860;text-rendering:geometricPrecision;transform:scaleX(0.85);transform-origin:0 0;text-shadow:0.25px 0 0 #585860;">....<span style="color:#8c8c92;text-shadow:none">┼┤</span>??u■<span style="color:#8c8c92;text-shadow:none">┬┘</span>■.</div>
<div class="t" style="left:5.40px;top:623.41px;font:normal 12.0px/12px 'Liberation Mono',monospace;letter-spacing:0.118px;color:#6a6a72;text-rendering:geometricPrecision;transform:scaleX(0.85);transform-origin:0 0;text-shadow:0.25px 0 0 #6a6a72;">0012EC78</div>
<div class="t" style="left:62.10px;top:623.41px;font:normal 12.0px/12px 'Liberation Mono',monospace;letter-spacing:0.118px;color:#585860;text-rendering:geometricPrecision;transform:scaleX(0.85);transform-origin:0 0;text-shadow:0.25px 0 0 #585860;">B8</div>
<div class="t" style="left:80.70px;top:623.41px;font:normal 12.0px/12px 'Liberation Mono',monospace;letter-spacing:0.118px;color:#585860;text-rendering:geometricPrecision;transform:scaleX(0.85);transform-origin:0 0;text-shadow:0.25px 0 0 #585860;">EE</div>
<div class="t" style="left:99.30px;top:623.41px;font:normal 12.0px/12px 'Liberation Mono',monospace;letter-spacing:0.118px;color:#585860;text-rendering:geometricPrecision;transform:scaleX(0.85);transform-origin:0 0;text-shadow:0.25px 0 0 #585860;">12</div>
<div class="t" style="left:117.90px;top:623.41px;font:normal 12.0px/12px 'Liberation Mono',monospace;letter-spacing:0.118px;color:#585860;text-rendering:geometricPrecision;transform:scaleX(0.85);transform-origin:0 0;text-shadow:0.25px 0 0 #585860;">00</div>
<div class="t" style="left:136.50px;top:623.41px;font:normal 12.0px/12px 'Liberation Mono',monospace;letter-spacing:0.118px;color:#585860;text-rendering:geometricPrecision;transform:scaleX(0.85);transform-origin:0 0;text-shadow:0.25px 0 0 #585860;">C8</div>
<div class="t" style="left:155.10px;top:623.41px;font:normal 12.0px/12px 'Liberation Mono',monospace;letter-spacing:0.118px;color:#585860;text-rendering:geometricPrecision;transform:scaleX(0.85);transform-origin:0 0;text-shadow:0.25px 0 0 #585860;">4B</div>
<div class="t" style="left:173.70px;top:623.41px;font:normal 12.0px/12px 'Liberation Mono',monospace;letter-spacing:0.118px;color:#585860;text-rendering:geometricPrecision;transform:scaleX(0.85);transform-origin:0 0;text-shadow:0.25px 0 0 #585860;">F1</div>
<div class="t" style="left:192.30px;top:623.41px;font:normal 12.0px/12px 'Liberation Mono',monospace;letter-spacing:0.118px;color:#585860;text-rendering:geometricPrecision;transform:scaleX(0.85);transform-origin:0 0;text-shadow:0.25px 0 0 #585860;">01</div>
<div class="t" style="left:210.90px;top:623.41px;font:normal 12.0px/12px 'Liberation Mono',monospace;letter-spacing:0.118px;color:#585860;text-rendering:geometricPrecision;transform:scaleX(0.85);transform-origin:0 0;text-shadow:0.25px 0 0 #585860;">09</div>
<div class="t" style="left:229.50px;top:623.41px;font:normal 12.0px/12px 'Liberation Mono',monospace;letter-spacing:0.118px;color:#585860;text-rendering:geometricPrecision;transform:scaleX(0.85);transform-origin:0 0;text-shadow:0.25px 0 0 #585860;">12</div>
<div class="t" style="left:248.10px;top:623.41px;font:normal 12.0px/12px 'Liberation Mono',monospace;letter-spacing:0.118px;color:#585860;text-rendering:geometricPrecision;transform:scaleX(0.85);transform-origin:0 0;text-shadow:0.25px 0 0 #585860;">75</div>
<div class="t" style="left:266.70px;top:623.41px;font:normal 12.0px/12px 'Liberation Mono',monospace;letter-spacing:0.118px;color:#585860;text-rendering:geometricPrecision;transform:scaleX(0.85);transform-origin:0 0;text-shadow:0.25px 0 0 #585860;">80</div>
<div class="t" style="left:285.30px;top:623.41px;font:normal 12.0px/12px 'Liberation Mono',monospace;letter-spacing:0.118px;color:#585860;text-rendering:geometricPrecision;transform:scaleX(0.85);transform-origin:0 0;text-shadow:0.25px 0 0 #585860;">C4</div>
<div class="t" style="left:303.90px;top:623.41px;font:normal 12.0px/12px 'Liberation Mono',monospace;letter-spacing:0.118px;color:#585860;text-rendering:geometricPrecision;transform:scaleX(0.85);transform-origin:0 0;text-shadow:0.25px 0 0 #585860;">EE</div>
<div class="t" style="left:322.50px;top:623.41px;font:normal 12.0px/12px 'Liberation Mono',monospace;letter-spacing:0.118px;color:#585860;text-rendering:geometricPrecision;transform:scaleX(0.85);transform-origin:0 0;text-shadow:0.25px 0 0 #585860;">12</div>
<div class="t" style="left:341.10px;top:623.41px;font:normal 12.0px/12px 'Liberation Mono',monospace;letter-spacing:0.118px;color:#585860;text-rendering:geometricPrecision;transform:scaleX(0.85);transform-origin:0 0;text-shadow:0.25px 0 0 #585860;">00</div>
<div class="t" style="left:403.60px;top:623.41px;font:normal 12.0px/12px 'Liberation Mono',monospace;letter-spacing:0.118px;color:#585860;text-rendering:geometricPrecision;transform:scaleX(0.85);transform-origin:0 0;text-shadow:0.25px 0 0 #585860;"><span style="color:#8c8c92;text-shadow:none">┼┤</span>■.<span style="color:#8c8c92;text-shadow:none">┬┘</span>?.■u■<span style="color:#8c8c92;text-shadow:none">┴┐</span>■.</div>
<div class="t" style="left:5.40px;top:635.83px;font:normal 12.0px/12px 'Liberation Mono',monospace;letter-spacing:0.118px;color:#6a6a72;text-rendering:geometricPrecision;transform:scaleX(0.85);transform-origin:0 0;text-shadow:0.25px 0 0 #6a6a72;">0012EC88</div>
<div class="t" style="left:62.10px;top:635.83px;font:normal 12.0px/12px 'Liberation Mono',monospace;letter-spacing:0.118px;color:#585860;text-rendering:geometricPrecision;transform:scaleX(0.85);transform-origin:0 0;text-shadow:0.25px 0 0 #585860;">B8</div>
<div class="t" style="left:80.70px;top:635.83px;font:normal 12.0px/12px 'Liberation Mono',monospace;letter-spacing:0.118px;color:#585860;text-rendering:geometricPrecision;transform:scaleX(0.85);transform-origin:0 0;text-shadow:0.25px 0 0 #585860;">EE</div>
<div class="t" style="left:99.30px;top:635.83px;font:normal 12.0px/12px 'Liberation Mono',monospace;letter-spacing:0.118px;color:#585860;text-rendering:geometricPrecision;transform:scaleX(0.85);transform-origin:0 0;text-shadow:0.25px 0 0 #585860;">12</div>
<div class="t" style="left:117.90px;top:635.83px;font:normal 12.0px/12px 'Liberation Mono',monospace;letter-spacing:0.118px;color:#585860;text-rendering:geometricPrecision;transform:scaleX(0.85);transform-origin:0 0;text-shadow:0.25px 0 0 #585860;">00</div>
<div class="t" style="left:136.50px;top:635.83px;font:normal 12.0px/12px 'Liberation Mono',monospace;letter-spacing:0.118px;color:#585860;text-rendering:geometricPrecision;transform:scaleX(0.85);transform-origin:0 0;text-shadow:0.25px 0 0 #585860;">43</div>
<div class="t" style="left:155.10px;top:635.83px;font:normal 12.0px/12px 'Liberation Mono',monospace;letter-spacing:0.118px;color:#585860;text-rendering:geometricPrecision;transform:scaleX(0.85);transform-origin:0 0;text-shadow:0.25px 0 0 #585860;">3A</div>
<div class="t" style="left:173.70px;top:635.83px;font:normal 12.0px/12px 'Liberation Mono',monospace;letter-spacing:0.118px;color:#585860;text-rendering:geometricPrecision;transform:scaleX(0.85);transform-origin:0 0;text-shadow:0.25px 0 0 #585860;">5C</div>
<div class="t" style="left:192.30px;top:635.83px;font:normal 12.0px/12px 'Liberation Mono',monospace;letter-spacing:0.118px;color:#585860;text-rendering:geometricPrecision;transform:scaleX(0.85);transform-origin:0 0;text-shadow:0.25px 0 0 #585860;">44</div>
<div class="t" style="left:210.90px;top:635.83px;font:normal 12.0px/12px 'Liberation Mono',monospace;letter-spacing:0.118px;color:#585860;text-rendering:geometricPrecision;transform:scaleX(0.85);transform-origin:0 0;text-shadow:0.25px 0 0 #585860;">4F</div>
<div class="t" style="left:229.50px;top:635.83px;font:normal 12.0px/12px 'Liberation Mono',monospace;letter-spacing:0.118px;color:#585860;text-rendering:geometricPrecision;transform:scaleX(0.85);transform-origin:0 0;text-shadow:0.25px 0 0 #585860;">43</div>
<div class="t" style="left:248.10px;top:635.83px;font:normal 12.0px/12px 'Liberation Mono',monospace;letter-spacing:0.118px;color:#585860;text-rendering:geometricPrecision;transform:scaleX(0.85);transform-origin:0 0;text-shadow:0.25px 0 0 #585860;">55</div>
<div class="t" style="left:266.70px;top:635.83px;font:normal 12.0px/12px 'Liberation Mono',monospace;letter-spacing:0.118px;color:#585860;text-rendering:geometricPrecision;transform:scaleX(0.85);transform-origin:0 0;text-shadow:0.25px 0 0 #585860;">4D</div>
<div class="t" style="left:285.30px;top:635.83px;font:normal 12.0px/12px 'Liberation Mono',monospace;letter-spacing:0.118px;color:#585860;text-rendering:geometricPrecision;transform:scaleX(0.85);transform-origin:0 0;text-shadow:0.25px 0 0 #585860;">45</div>
<div class="t" style="left:303.90px;top:635.83px;font:normal 12.0px/12px 'Liberation Mono',monospace;letter-spacing:0.118px;color:#585860;text-rendering:geometricPrecision;transform:scaleX(0.85);transform-origin:0 0;text-shadow:0.25px 0 0 #585860;">7E</div>
<div class="t" style="left:322.50px;top:635.83px;font:normal 12.0px/12px 'Liberation Mono',monospace;letter-spacing:0.118px;color:#585860;text-rendering:geometricPrecision;transform:scaleX(0.85);transform-origin:0 0;text-shadow:0.25px 0 0 #585860;">31</div>
<div class="t" style="left:341.10px;top:635.83px;font:normal 12.0px/12px 'Liberation Mono',monospace;letter-spacing:0.118px;color:#585860;text-rendering:geometricPrecision;transform:scaleX(0.85);transform-origin:0 0;text-shadow:0.25px 0 0 #585860;">5C</div>
<div class="t" style="left:403.60px;top:635.83px;font:normal 12.0px/12px 'Liberation Mono',monospace;letter-spacing:0.118px;color:#585860;text-rendering:geometricPrecision;transform:scaleX(0.85);transform-origin:0 0;text-shadow:0.25px 0 0 #585860;"><span style="color:#8c8c92;text-shadow:none">┼┤</span>■.C:\DOCUME~1\</div>
<div class="t" style="left:5.40px;top:648.25px;font:normal 12.0px/12px 'Liberation Mono',monospace;letter-spacing:0.118px;color:#6a6a72;text-rendering:geometricPrecision;transform:scaleX(0.85);transform-origin:0 0;text-shadow:0.25px 0 0 #6a6a72;">0012EC98</div>
<div class="t" style="left:62.10px;top:648.25px;font:normal 12.0px/12px 'Liberation Mono',monospace;letter-spacing:0.118px;color:#585860;text-rendering:geometricPrecision;transform:scaleX(0.85);transform-origin:0 0;text-shadow:0.25px 0 0 #585860;">41</div>
<div class="t" style="left:80.70px;top:648.25px;font:normal 12.0px/12px 'Liberation Mono',monospace;letter-spacing:0.118px;color:#585860;text-rendering:geometricPrecision;transform:scaleX(0.85);transform-origin:0 0;text-shadow:0.25px 0 0 #585860;">44</div>
<div class="t" style="left:99.30px;top:648.25px;font:normal 12.0px/12px 'Liberation Mono',monospace;letter-spacing:0.118px;color:#585860;text-rendering:geometricPrecision;transform:scaleX(0.85);transform-origin:0 0;text-shadow:0.25px 0 0 #585860;">4D</div>
<div class="t" style="left:117.90px;top:648.25px;font:normal 12.0px/12px 'Liberation Mono',monospace;letter-spacing:0.118px;color:#585860;text-rendering:geometricPrecision;transform:scaleX(0.85);transform-origin:0 0;text-shadow:0.25px 0 0 #585860;">49</div>
<div class="t" style="left:136.50px;top:648.25px;font:normal 12.0px/12px 'Liberation Mono',monospace;letter-spacing:0.118px;color:#585860;text-rendering:geometricPrecision;transform:scaleX(0.85);transform-origin:0 0;text-shadow:0.25px 0 0 #585860;">4E</div>
<div class="t" style="left:155.10px;top:648.25px;font:normal 12.0px/12px 'Liberation Mono',monospace;letter-spacing:0.118px;color:#585860;text-rendering:geometricPrecision;transform:scaleX(0.85);transform-origin:0 0;text-shadow:0.25px 0 0 #585860;">49</div>
<div class="t" style="left:173.70px;top:648.25px;font:normal 12.0px/12px 'Liberation Mono',monospace;letter-spacing:0.118px;color:#585860;text-rendering:geometricPrecision;transform:scaleX(0.85);transform-origin:0 0;text-shadow:0.25px 0 0 #585860;">7E</div>
<div class="t" style="left:192.30px;top:648.25px;font:normal 12.0px/12px 'Liberation Mono',monospace;letter-spacing:0.118px;color:#585860;text-rendering:geometricPrecision;transform:scaleX(0.85);transform-origin:0 0;text-shadow:0.25px 0 0 #585860;">31</div>
<div class="t" style="left:210.90px;top:648.25px;font:normal 12.0px/12px 'Liberation Mono',monospace;letter-spacing:0.118px;color:#585860;text-rendering:geometricPrecision;transform:scaleX(0.85);transform-origin:0 0;text-shadow:0.25px 0 0 #585860;">5C</div>
<div class="t" style="left:229.50px;top:648.25px;font:normal 12.0px/12px 'Liberation Mono',monospace;letter-spacing:0.118px;color:#585860;text-rendering:geometricPrecision;transform:scaleX(0.85);transform-origin:0 0;text-shadow:0.25px 0 0 #585860;">4C</div>
<div class="t" style="left:248.10px;top:648.25px;font:normal 12.0px/12px 'Liberation Mono',monospace;letter-spacing:0.118px;color:#585860;text-rendering:geometricPrecision;transform:scaleX(0.85);transform-origin:0 0;text-shadow:0.25px 0 0 #585860;">4F</div>
<div class="t" style="left:266.70px;top:648.25px;font:normal 12.0px/12px 'Liberation Mono',monospace;letter-spacing:0.118px;color:#585860;text-rendering:geometricPrecision;transform:scaleX(0.85);transform-origin:0 0;text-shadow:0.25px 0 0 #585860;">43</div>
<div class="t" style="left:285.30px;top:648.25px;font:normal 12.0px/12px 'Liberation Mono',monospace;letter-spacing:0.118px;color:#585860;text-rendering:geometricPrecision;transform:scaleX(0.85);transform-origin:0 0;text-shadow:0.25px 0 0 #585860;">41</div>
<div class="t" style="left:303.90px;top:648.25px;font:normal 12.0px/12px 'Liberation Mono',monospace;letter-spacing:0.118px;color:#585860;text-rendering:geometricPrecision;transform:scaleX(0.85);transform-origin:0 0;text-shadow:0.25px 0 0 #585860;">4C</div>
<div class="t" style="left:322.50px;top:648.25px;font:normal 12.0px/12px 'Liberation Mono',monospace;letter-spacing:0.118px;color:#585860;text-rendering:geometricPrecision;transform:scaleX(0.85);transform-origin:0 0;text-shadow:0.25px 0 0 #585860;">53</div>
<div class="t" style="left:341.10px;top:648.25px;font:normal 12.0px/12px 'Liberation Mono',monospace;letter-spacing:0.118px;color:#585860;text-rendering:geometricPrecision;transform:scaleX(0.85);transform-origin:0 0;text-shadow:0.25px 0 0 #585860;">7E</div>
<div class="t" style="left:403.60px;top:648.25px;font:normal 12.0px/12px 'Liberation Mono',monospace;letter-spacing:0.118px;color:#585860;text-rendering:geometricPrecision;transform:scaleX(0.85);transform-origin:0 0;text-shadow:0.25px 0 0 #585860;">ADMINI~1\LOCALS~</div>
<div class="t" style="left:5.40px;top:660.67px;font:normal 12.0px/12px 'Liberation Mono',monospace;letter-spacing:0.118px;color:#6a6a72;text-rendering:geometricPrecision;transform:scaleX(0.85);transform-origin:0 0;text-shadow:0.25px 0 0 #6a6a72;">0012ECA8</div>
<div class="t" style="left:62.10px;top:660.67px;font:normal 12.0px/12px 'Liberation Mono',monospace;letter-spacing:0.118px;color:#585860;text-rendering:geometricPrecision;transform:scaleX(0.85);transform-origin:0 0;text-shadow:0.25px 0 0 #585860;">31</div>
<div class="t" style="left:80.70px;top:660.67px;font:normal 12.0px/12px 'Liberation Mono',monospace;letter-spacing:0.118px;color:#585860;text-rendering:geometricPrecision;transform:scaleX(0.85);transform-origin:0 0;text-shadow:0.25px 0 0 #585860;">5C</div>
<div class="t" style="left:99.30px;top:660.67px;font:normal 12.0px/12px 'Liberation Mono',monospace;letter-spacing:0.118px;color:#585860;text-rendering:geometricPrecision;transform:scaleX(0.85);transform-origin:0 0;text-shadow:0.25px 0 0 #585860;">54</div>
<div class="t" style="left:117.90px;top:660.67px;font:normal 12.0px/12px 'Liberation Mono',monospace;letter-spacing:0.118px;color:#585860;text-rendering:geometricPrecision;transform:scaleX(0.85);transform-origin:0 0;text-shadow:0.25px 0 0 #585860;">65</div>
<div class="t" style="left:136.50px;top:660.67px;font:normal 12.0px/12px 'Liberation Mono',monospace;letter-spacing:0.118px;color:#585860;text-rendering:geometricPrecision;transform:scaleX(0.85);transform-origin:0 0;text-shadow:0.25px 0 0 #585860;">6D</div>
<div class="t" style="left:155.10px;top:660.67px;font:normal 12.0px/12px 'Liberation Mono',monospace;letter-spacing:0.118px;color:#585860;text-rendering:geometricPrecision;transform:scaleX(0.85);transform-origin:0 0;text-shadow:0.25px 0 0 #585860;">70</div>
<div class="t" style="left:173.70px;top:660.67px;font:normal 12.0px/12px 'Liberation Mono',monospace;letter-spacing:0.118px;color:#585860;text-rendering:geometricPrecision;transform:scaleX(0.85);transform-origin:0 0;text-shadow:0.25px 0 0 #585860;">5C</div>
<div class="t" style="left:192.30px;top:660.67px;font:normal 12.0px/12px 'Liberation Mono',monospace;letter-spacing:0.118px;color:#585860;text-rendering:geometricPrecision;transform:scaleX(0.85);transform-origin:0 0;text-shadow:0.25px 0 0 #585860;">54</div>
<div class="t" style="left:210.90px;top:660.67px;font:normal 12.0px/12px 'Liberation Mono',monospace;letter-spacing:0.118px;color:#585860;text-rendering:geometricPrecision;transform:scaleX(0.85);transform-origin:0 0;text-shadow:0.25px 0 0 #585860;">68</div>
<div class="t" style="left:229.50px;top:660.67px;font:normal 12.0px/12px 'Liberation Mono',monospace;letter-spacing:0.118px;color:#585860;text-rendering:geometricPrecision;transform:scaleX(0.85);transform-origin:0 0;text-shadow:0.25px 0 0 #585860;">65</div>
<div class="t" style="left:248.10px;top:660.67px;font:normal 12.0px/12px 'Liberation Mono',monospace;letter-spacing:0.118px;color:#585860;text-rendering:geometricPrecision;transform:scaleX(0.85);transform-origin:0 0;text-shadow:0.25px 0 0 #585860;">20</div>
<div class="t" style="left:266.70px;top:660.67px;font:normal 12.0px/12px 'Liberation Mono',monospace;letter-spacing:0.118px;color:#585860;text-rendering:geometricPrecision;transform:scaleX(0.85);transform-origin:0 0;text-shadow:0.25px 0 0 #585860;">71</div>
<div class="t" style="left:285.30px;top:660.67px;font:normal 12.0px/12px 'Liberation Mono',monospace;letter-spacing:0.118px;color:#585860;text-rendering:geometricPrecision;transform:scaleX(0.85);transform-origin:0 0;text-shadow:0.25px 0 0 #585860;">75</div>
<div class="t" style="left:303.90px;top:660.67px;font:normal 12.0px/12px 'Liberation Mono',monospace;letter-spacing:0.118px;color:#585860;text-rendering:geometricPrecision;transform:scaleX(0.85);transform-origin:0 0;text-shadow:0.25px 0 0 #585860;">65</div>
<div class="t" style="left:322.50px;top:660.67px;font:normal 12.0px/12px 'Liberation Mono',monospace;letter-spacing:0.118px;color:#585860;text-rendering:geometricPrecision;transform:scaleX(0.85);transform-origin:0 0;text-shadow:0.25px 0 0 #585860;">73</div>
<div class="t" style="left:341.10px;top:660.67px;font:normal 12.0px/12px 'Liberation Mono',monospace;letter-spacing:0.118px;color:#585860;text-rendering:geometricPrecision;transform:scaleX(0.85);transform-origin:0 0;text-shadow:0.25px 0 0 #585860;">74</div>
<div class="t" style="left:403.60px;top:660.67px;font:normal 12.0px/12px 'Liberation Mono',monospace;letter-spacing:0.118px;color:#585860;text-rendering:geometricPrecision;transform:scaleX(0.85);transform-origin:0 0;text-shadow:0.25px 0 0 #585860;">1\Temp\The quest</div>
<div class="t" style="left:5.40px;top:673.09px;font:normal 12.0px/12px 'Liberation Mono',monospace;letter-spacing:0.118px;color:#6a6a72;text-rendering:geometricPrecision;transform:scaleX(0.85);transform-origin:0 0;text-shadow:0.25px 0 0 #6a6a72;">0012ECB8</div>
<div class="t" style="left:62.10px;top:673.09px;font:normal 12.0px/12px 'Liberation Mono',monospace;letter-spacing:0.118px;color:#585860;text-rendering:geometricPrecision;transform:scaleX(0.85);transform-origin:0 0;text-shadow:0.25px 0 0 #585860;">69</div>
<div class="t" style="left:80.70px;top:673.09px;font:normal 12.0px/12px 'Liberation Mono',monospace;letter-spacing:0.118px;color:#585860;text-rendering:geometricPrecision;transform:scaleX(0.85);transform-origin:0 0;text-shadow:0.25px 0 0 #585860;">6F</div>
<div class="t" style="left:99.30px;top:673.09px;font:normal 12.0px/12px 'Liberation Mono',monospace;letter-spacing:0.118px;color:#585860;text-rendering:geometricPrecision;transform:scaleX(0.85);transform-origin:0 0;text-shadow:0.25px 0 0 #585860;">6E</div>
<div class="t" style="left:117.90px;top:673.09px;font:normal 12.0px/12px 'Liberation Mono',monospace;letter-spacing:0.118px;color:#585860;text-rendering:geometricPrecision;transform:scaleX(0.85);transform-origin:0 0;text-shadow:0.25px 0 0 #585860;">20</div>
<div class="t" style="left:136.50px;top:673.09px;font:normal 12.0px/12px 'Liberation Mono',monospace;letter-spacing:0.118px;color:#585860;text-rendering:geometricPrecision;transform:scaleX(0.85);transform-origin:0 0;text-shadow:0.25px 0 0 #585860;">6F</div>
<div class="t" style="left:155.10px;top:673.09px;font:normal 12.0px/12px 'Liberation Mono',monospace;letter-spacing:0.118px;color:#585860;text-rendering:geometricPrecision;transform:scaleX(0.85);transform-origin:0 0;text-shadow:0.25px 0 0 #585860;">66</div>
<div class="t" style="left:173.70px;top:673.09px;font:normal 12.0px/12px 'Liberation Mono',monospace;letter-spacing:0.118px;color:#585860;text-rendering:geometricPrecision;transform:scaleX(0.85);transform-origin:0 0;text-shadow:0.25px 0 0 #585860;">20</div>
<div class="t" style="left:192.30px;top:673.09px;font:normal 12.0px/12px 'Liberation Mono',monospace;letter-spacing:0.118px;color:#585860;text-rendering:geometricPrecision;transform:scaleX(0.85);transform-origin:0 0;text-shadow:0.25px 0 0 #585860;">74</div>
<div class="t" style="left:210.90px;top:673.09px;font:normal 12.0px/12px 'Liberation Mono',monospace;letter-spacing:0.118px;color:#585860;text-rendering:geometricPrecision;transform:scaleX(0.85);transform-origin:0 0;text-shadow:0.25px 0 0 #585860;">68</div>
<div class="t" style="left:229.50px;top:673.09px;font:normal 12.0px/12px 'Liberation Mono',monospace;letter-spacing:0.118px;color:#585860;text-rendering:geometricPrecision;transform:scaleX(0.85);transform-origin:0 0;text-shadow:0.25px 0 0 #585860;">65</div>
<div class="t" style="left:248.10px;top:673.09px;font:normal 12.0px/12px 'Liberation Mono',monospace;letter-spacing:0.118px;color:#585860;text-rendering:geometricPrecision;transform:scaleX(0.85);transform-origin:0 0;text-shadow:0.25px 0 0 #585860;">20</div>
<div class="t" style="left:266.70px;top:673.09px;font:normal 12.0px/12px 'Liberation Mono',monospace;letter-spacing:0.118px;color:#585860;text-rendering:geometricPrecision;transform:scaleX(0.85);transform-origin:0 0;text-shadow:0.25px 0 0 #585860;">63</div>
<div class="t" style="left:285.30px;top:673.09px;font:normal 12.0px/12px 'Liberation Mono',monospace;letter-spacing:0.118px;color:#585860;text-rendering:geometricPrecision;transform:scaleX(0.85);transform-origin:0 0;text-shadow:0.25px 0 0 #585860;">68</div>
<div class="t" style="left:303.90px;top:673.09px;font:normal 12.0px/12px 'Liberation Mono',monospace;letter-spacing:0.118px;color:#585860;text-rendering:geometricPrecision;transform:scaleX(0.85);transform-origin:0 0;text-shadow:0.25px 0 0 #585860;">61</div>
<div class="t" style="left:322.50px;top:673.09px;font:normal 12.0px/12px 'Liberation Mono',monospace;letter-spacing:0.118px;color:#585860;text-rendering:geometricPrecision;transform:scaleX(0.85);transform-origin:0 0;text-shadow:0.25px 0 0 #585860;">72</div>
<div class="t" style="left:341.10px;top:673.09px;font:normal 12.0px/12px 'Liberation Mono',monospace;letter-spacing:0.118px;color:#585860;text-rendering:geometricPrecision;transform:scaleX(0.85);transform-origin:0 0;text-shadow:0.25px 0 0 #585860;">74</div>
<div class="t" style="left:403.60px;top:673.09px;font:normal 12.0px/12px 'Liberation Mono',monospace;letter-spacing:0.118px;color:#585860;text-rendering:geometricPrecision;transform:scaleX(0.85);transform-origin:0 0;text-shadow:0.25px 0 0 #585860;">ion of the chart</div>
<div class="t" style="left:5.40px;top:685.51px;font:normal 12.0px/12px 'Liberation Mono',monospace;letter-spacing:0.118px;color:#6a6a72;text-rendering:geometricPrecision;transform:scaleX(0.85);transform-origin:0 0;text-shadow:0.25px 0 0 #6a6a72;">0012ECC8</div>
<div class="t" style="left:62.10px;top:685.51px;font:normal 12.0px/12px 'Liberation Mono',monospace;letter-spacing:0.118px;color:#585860;text-rendering:geometricPrecision;transform:scaleX(0.85);transform-origin:0 0;text-shadow:0.25px 0 0 #585860;">65</div>
<div class="t" style="left:80.70px;top:685.51px;font:normal 12.0px/12px 'Liberation Mono',monospace;letter-spacing:0.118px;color:#585860;text-rendering:geometricPrecision;transform:scaleX(0.85);transform-origin:0 0;text-shadow:0.25px 0 0 #585860;">72</div>
<div class="t" style="left:99.30px;top:685.51px;font:normal 12.0px/12px 'Liberation Mono',monospace;letter-spacing:0.118px;color:#585860;text-rendering:geometricPrecision;transform:scaleX(0.85);transform-origin:0 0;text-shadow:0.25px 0 0 #585860;">20</div>
<div class="t" style="left:117.90px;top:685.51px;font:normal 12.0px/12px 'Liberation Mono',monospace;letter-spacing:0.118px;color:#585860;text-rendering:geometricPrecision;transform:scaleX(0.85);transform-origin:0 0;text-shadow:0.25px 0 0 #585860;">6F</div>
<div class="t" style="left:136.50px;top:685.51px;font:normal 12.0px/12px 'Liberation Mono',monospace;letter-spacing:0.118px;color:#585860;text-rendering:geometricPrecision;transform:scaleX(0.85);transform-origin:0 0;text-shadow:0.25px 0 0 #585860;">66</div>
<div class="t" style="left:155.10px;top:685.51px;font:normal 12.0px/12px 'Liberation Mono',monospace;letter-spacing:0.118px;color:#585860;text-rendering:geometricPrecision;transform:scaleX(0.85);transform-origin:0 0;text-shadow:0.25px 0 0 #585860;">20</div>
<div class="t" style="left:173.70px;top:685.51px;font:normal 12.0px/12px 'Liberation Mono',monospace;letter-spacing:0.118px;color:#585860;text-rendering:geometricPrecision;transform:scaleX(0.85);transform-origin:0 0;text-shadow:0.25px 0 0 #585860;">70</div>
<div class="t" style="left:192.30px;top:685.51px;font:normal 12.0px/12px 'Liberation Mono',monospace;letter-spacing:0.118px;color:#585860;text-rendering:geometricPrecision;transform:scaleX(0.85);transform-origin:0 0;text-shadow:0.25px 0 0 #585860;">72</div>
<div class="t" style="left:210.90px;top:685.51px;font:normal 12.0px/12px 'Liberation Mono',monospace;letter-spacing:0.118px;color:#585860;text-rendering:geometricPrecision;transform:scaleX(0.85);transform-origin:0 0;text-shadow:0.25px 0 0 #585860;">6F</div>
<div class="t" style="left:229.50px;top:685.51px;font:normal 12.0px/12px 'Liberation Mono',monospace;letter-spacing:0.118px;color:#585860;text-rendering:geometricPrecision;transform:scaleX(0.85);transform-origin:0 0;text-shadow:0.25px 0 0 #585860;">2D</div>
<div class="t" style="left:248.10px;top:685.51px;font:normal 12.0px/12px 'Liberation Mono',monospace;letter-spacing:0.118px;color:#585860;text-rendering:geometricPrecision;transform:scaleX(0.85);transform-origin:0 0;text-shadow:0.25px 0 0 #585860;">64</div>
<div class="t" style="left:266.70px;top:685.51px;font:normal 12.0px/12px 'Liberation Mono',monospace;letter-spacing:0.118px;color:#585860;text-rendering:geometricPrecision;transform:scaleX(0.85);transform-origin:0 0;text-shadow:0.25px 0 0 #585860;">65</div>
<div class="t" style="left:285.30px;top:685.51px;font:normal 12.0px/12px 'Liberation Mono',monospace;letter-spacing:0.118px;color:#585860;text-rendering:geometricPrecision;transform:scaleX(0.85);transform-origin:0 0;text-shadow:0.25px 0 0 #585860;">6D</div>
<div class="t" style="left:303.90px;top:685.51px;font:normal 12.0px/12px 'Liberation Mono',monospace;letter-spacing:0.118px;color:#585860;text-rendering:geometricPrecision;transform:scaleX(0.85);transform-origin:0 0;text-shadow:0.25px 0 0 #585860;">6F</div>
<div class="t" style="left:322.50px;top:685.51px;font:normal 12.0px/12px 'Liberation Mono',monospace;letter-spacing:0.118px;color:#585860;text-rendering:geometricPrecision;transform:scaleX(0.85);transform-origin:0 0;text-shadow:0.25px 0 0 #585860;">63</div>
<div class="t" style="left:341.10px;top:685.51px;font:normal 12.0px/12px 'Liberation Mono',monospace;letter-spacing:0.118px;color:#585860;text-rendering:geometricPrecision;transform:scaleX(0.85);transform-origin:0 0;text-shadow:0.25px 0 0 #585860;">72</div>
<div class="t" style="left:403.60px;top:685.51px;font:normal 12.0px/12px 'Liberation Mono',monospace;letter-spacing:0.118px;color:#585860;text-rendering:geometricPrecision;transform:scaleX(0.85);transform-origin:0 0;text-shadow:0.25px 0 0 #585860;">er of pro-democr</div>
<div class="t" style="left:5.40px;top:697.93px;font:normal 12.0px/12px 'Liberation Mono',monospace;letter-spacing:0.118px;color:#6a6a72;text-rendering:geometricPrecision;transform:scaleX(0.85);transform-origin:0 0;text-shadow:0.25px 0 0 #6a6a72;">0012ECD8</div>
<div class="t" style="left:62.10px;top:697.93px;font:normal 12.0px/12px 'Liberation Mono',monospace;letter-spacing:0.118px;color:#585860;text-rendering:geometricPrecision;transform:scaleX(0.85);transform-origin:0 0;text-shadow:0.25px 0 0 #585860;">61</div>
<div class="t" style="left:80.70px;top:697.93px;font:normal 12.0px/12px 'Liberation Mono',monospace;letter-spacing:0.118px;color:#585860;text-rendering:geometricPrecision;transform:scaleX(0.85);transform-origin:0 0;text-shadow:0.25px 0 0 #585860;">63</div>
<div class="t" style="left:99.30px;top:697.93px;font:normal 12.0px/12px 'Liberation Mono',monospace;letter-spacing:0.118px;color:#585860;text-rendering:geometricPrecision;transform:scaleX(0.85);transform-origin:0 0;text-shadow:0.25px 0 0 #585860;">79</div>
<div class="t" style="left:117.90px;top:697.93px;font:normal 12.0px/12px 'Liberation Mono',monospace;letter-spacing:0.118px;color:#585860;text-rendering:geometricPrecision;transform:scaleX(0.85);transform-origin:0 0;text-shadow:0.25px 0 0 #585860;">20</div>
<div class="t" style="left:136.50px;top:697.93px;font:normal 12.0px/12px 'Liberation Mono',monospace;letter-spacing:0.118px;color:#585860;text-rendering:geometricPrecision;transform:scaleX(0.85);transform-origin:0 0;text-shadow:0.25px 0 0 #585860;">6D</div>
<div class="t" style="left:155.10px;top:697.93px;font:normal 12.0px/12px 'Liberation Mono',monospace;letter-spacing:0.118px;color:#585860;text-rendering:geometricPrecision;transform:scaleX(0.85);transform-origin:0 0;text-shadow:0.25px 0 0 #585860;">6F</div>
<div class="t" style="left:173.70px;top:697.93px;font:normal 12.0px/12px 'Liberation Mono',monospace;letter-spacing:0.118px;color:#585860;text-rendering:geometricPrecision;transform:scaleX(0.85);transform-origin:0 0;text-shadow:0.25px 0 0 #585860;">6D</div>
<div class="t" style="left:192.30px;top:697.93px;font:normal 12.0px/12px 'Liberation Mono',monospace;letter-spacing:0.118px;color:#585860;text-rendering:geometricPrecision;transform:scaleX(0.85);transform-origin:0 0;text-shadow:0.25px 0 0 #585860;">65</div>
<div class="t" style="left:210.90px;top:697.93px;font:normal 12.0px/12px 'Liberation Mono',monospace;letter-spacing:0.118px;color:#585860;text-rendering:geometricPrecision;transform:scaleX(0.85);transform-origin:0 0;text-shadow:0.25px 0 0 #585860;">6E</div>
<div class="t" style="left:229.50px;top:697.93px;font:normal 12.0px/12px 'Liberation Mono',monospace;letter-spacing:0.118px;color:#585860;text-rendering:geometricPrecision;transform:scaleX(0.85);transform-origin:0 0;text-shadow:0.25px 0 0 #585860;">74</div>
<div class="t" style="left:248.10px;top:697.93px;font:normal 12.0px/12px 'Liberation Mono',monospace;letter-spacing:0.118px;color:#585860;text-rendering:geometricPrecision;transform:scaleX(0.85);transform-origin:0 0;text-shadow:0.25px 0 0 #585860;">2E</div>
<div class="t" style="left:266.70px;top:697.93px;font:normal 12.0px/12px 'Liberation Mono',monospace;letter-spacing:0.118px;color:#585860;text-rendering:geometricPrecision;transform:scaleX(0.85);transform-origin:0 0;text-shadow:0.25px 0 0 #585860;">70</div>
<div class="t" style="left:285.30px;top:697.93px;font:normal 12.0px/12px 'Liberation Mono',monospace;letter-spacing:0.118px;color:#585860;text-rendering:geometricPrecision;transform:scaleX(0.85);transform-origin:0 0;text-shadow:0.25px 0 0 #585860;">64</div>
<div class="t" style="left:303.90px;top:697.93px;font:normal 12.0px/12px 'Liberation Mono',monospace;letter-spacing:0.118px;color:#585860;text-rendering:geometricPrecision;transform:scaleX(0.85);transform-origin:0 0;text-shadow:0.25px 0 0 #585860;">66</div>
<div class="t" style="left:322.50px;top:697.93px;font:normal 12.0px/12px 'Liberation Mono',monospace;letter-spacing:0.118px;color:#585860;text-rendering:geometricPrecision;transform:scaleX(0.85);transform-origin:0 0;text-shadow:0.25px 0 0 #585860;">00</div>
<div class="t" style="left:341.10px;top:697.93px;font:normal 12.0px/12px 'Liberation Mono',monospace;letter-spacing:0.118px;color:#585860;text-rendering:geometricPrecision;transform:scaleX(0.85);transform-origin:0 0;text-shadow:0.25px 0 0 #585860;">00</div>
<div class="t" style="left:403.60px;top:697.93px;font:normal 12.0px/12px 'Liberation Mono',monospace;letter-spacing:0.118px;color:#585860;text-rendering:geometricPrecision;transform:scaleX(0.85);transform-origin:0 0;text-shadow:0.25px 0 0 #585860;">acy moment.pdf..</div>
<div class="t" style="left:5.40px;top:710.35px;font:normal 12.0px/12px 'Liberation Mono',monospace;letter-spacing:0.118px;color:#6a6a72;text-rendering:geometricPrecision;transform:scaleX(0.85);transform-origin:0 0;text-shadow:0.25px 0 0 #6a6a72;">0012ECE8</div>
<div class="t" style="left:62.10px;top:710.35px;font:normal 12.0px/12px 'Liberation Mono',monospace;letter-spacing:0.118px;color:#585860;text-rendering:geometricPrecision;transform:scaleX(0.85);transform-origin:0 0;text-shadow:0.25px 0 0 #585860;">F0</div>
<div class="t" style="left:80.70px;top:710.35px;font:normal 12.0px/12px 'Liberation Mono',monospace;letter-spacing:0.118px;color:#585860;text-rendering:geometricPrecision;transform:scaleX(0.85);transform-origin:0 0;text-shadow:0.25px 0 0 #585860;">86</div>
<div class="t" style="left:99.30px;top:710.35px;font:normal 12.0px/12px 'Liberation Mono',monospace;letter-spacing:0.118px;color:#585860;text-rendering:geometricPrecision;transform:scaleX(0.85);transform-origin:0 0;text-shadow:0.25px 0 0 #585860;">4D</div>
<div class="t" style="left:117.90px;top:710.35px;font:normal 12.0px/12px 'Liberation Mono',monospace;letter-spacing:0.118px;color:#585860;text-rendering:geometricPrecision;transform:scaleX(0.85);transform-origin:0 0;text-shadow:0.25px 0 0 #585860;">01</div>
<div class="t" style="left:136.50px;top:710.35px;font:normal 12.0px/12px 'Liberation Mono',monospace;letter-spacing:0.118px;color:#585860;text-rendering:geometricPrecision;transform:scaleX(0.85);transform-origin:0 0;text-shadow:0.25px 0 0 #585860;">03</div>
<div class="t" style="left:155.10px;top:710.35px;font:normal 12.0px/12px 'Liberation Mono',monospace;letter-spacing:0.118px;color:#585860;text-rendering:geometricPrecision;transform:scaleX(0.85);transform-origin:0 0;text-shadow:0.25px 0 0 #585860;">00</div>
<div class="t" style="left:173.70px;top:710.35px;font:normal 12.0px/12px 'Liberation Mono',monospace;letter-spacing:0.118px;color:#585860;text-rendering:geometricPrecision;transform:scaleX(0.85);transform-origin:0 0;text-shadow:0.25px 0 0 #585860;">00</div>
<div class="t" style="left:192.30px;top:710.35px;font:normal 12.0px/12px 'Liberation Mono',monospace;letter-spacing:0.118px;color:#585860;text-rendering:geometricPrecision;transform:scaleX(0.85);transform-origin:0 0;text-shadow:0.25px 0 0 #585860;">40</div>
<div class="t" style="left:210.90px;top:710.35px;font:normal 12.0px/12px 'Liberation Mono',monospace;letter-spacing:0.118px;color:#585860;text-rendering:geometricPrecision;transform:scaleX(0.85);transform-origin:0 0;text-shadow:0.25px 0 0 #585860;">00</div>
<div class="t" style="left:229.50px;top:710.35px;font:normal 12.0px/12px 'Liberation Mono',monospace;letter-spacing:0.118px;color:#585860;text-rendering:geometricPrecision;transform:scaleX(0.85);transform-origin:0 0;text-shadow:0.25px 0 0 #585860;">00</div>
<div class="t" style="left:248.10px;top:710.35px;font:normal 12.0px/12px 'Liberation Mono',monospace;letter-spacing:0.118px;color:#585860;text-rendering:geometricPrecision;transform:scaleX(0.85);transform-origin:0 0;text-shadow:0.25px 0 0 #585860;">01</div>
<div class="t" style="left:266.70px;top:710.35px;font:normal 12.0px/12px 'Liberation Mono',monospace;letter-spacing:0.118px;color:#585860;text-rendering:geometricPrecision;transform:scaleX(0.85);transform-origin:0 0;text-shadow:0.25px 0 0 #585860;">C0</div>
<div class="t" style="left:285.30px;top:710.35px;font:normal 12.0px/12px 'Liberation Mono',monospace;letter-spacing:0.118px;color:#585860;text-rendering:geometricPrecision;transform:scaleX(0.85);transform-origin:0 0;text-shadow:0.25px 0 0 #585860;">0D</div>
<div class="t" style="left:303.90px;top:710.35px;font:normal 12.0px/12px 'Liberation Mono',monospace;letter-spacing:0.118px;color:#585860;text-rendering:geometricPrecision;transform:scaleX(0.85);transform-origin:0 0;text-shadow:0.25px 0 0 #585860;">00</div>
<div class="t" style="left:322.50px;top:710.35px;font:normal 12.0px/12px 'Liberation Mono',monospace;letter-spacing:0.118px;color:#585860;text-rendering:geometricPrecision;transform:scaleX(0.85);transform-origin:0 0;text-shadow:0.25px 0 0 #585860;">00</div>
<div class="t" style="left:341.10px;top:710.35px;font:normal 12.0px/12px 'Liberation Mono',monospace;letter-spacing:0.118px;color:#585860;text-rendering:geometricPrecision;transform:scaleX(0.85);transform-origin:0 0;text-shadow:0.25px 0 0 #585860;">00</div>
<div class="t" style="left:403.60px;top:710.35px;font:normal 12.0px/12px 'Liberation Mono',monospace;letter-spacing:0.118px;color:#585860;text-rendering:geometricPrecision;transform:scaleX(0.85);transform-origin:0 0;text-shadow:0.25px 0 0 #585860;"><span style="color:#8c8c92;text-shadow:none">┼┤</span>H<span style="color:#8c8c92;text-shadow:none">┬┘</span>..@..<span style="color:#8c8c92;text-shadow:none">┴┐</span>...</div>
<div class="t" style="left:5.40px;top:722.77px;font:normal 12.0px/12px 'Liberation Mono',monospace;letter-spacing:0.118px;color:#6a6a72;text-rendering:geometricPrecision;transform:scaleX(0.85);transform-origin:0 0;text-shadow:0.25px 0 0 #6a6a72;">0012ECF8</div>
<div class="t" style="left:62.10px;top:722.77px;font:normal 12.0px/12px 'Liberation Mono',monospace;letter-spacing:0.118px;color:#585860;text-rendering:geometricPrecision;transform:scaleX(0.85);transform-origin:0 0;text-shadow:0.25px 0 0 #585860;">00</div>
<div class="t" style="left:80.70px;top:722.77px;font:normal 12.0px/12px 'Liberation Mono',monospace;letter-spacing:0.118px;color:#585860;text-rendering:geometricPrecision;transform:scaleX(0.85);transform-origin:0 0;text-shadow:0.25px 0 0 #585860;">00</div>
<div class="t" style="left:99.30px;top:722.77px;font:normal 12.0px/12px 'Liberation Mono',monospace;letter-spacing:0.118px;color:#585860;text-rendering:geometricPrecision;transform:scaleX(0.85);transform-origin:0 0;text-shadow:0.25px 0 0 #585860;">01</div>
<div class="t" style="left:117.90px;top:722.77px;font:normal 12.0px/12px 'Liberation Mono',monospace;letter-spacing:0.118px;color:#585860;text-rendering:geometricPrecision;transform:scaleX(0.85);transform-origin:0 0;text-shadow:0.25px 0 0 #585860;">C0</div>
<div class="t" style="left:136.50px;top:722.77px;font:normal 12.0px/12px 'Liberation Mono',monospace;letter-spacing:0.118px;color:#585860;text-rendering:geometricPrecision;transform:scaleX(0.85);transform-origin:0 0;text-shadow:0.25px 0 0 #585860;">0D</div>
<div class="t" style="left:155.10px;top:722.77px;font:normal 12.0px/12px 'Liberation Mono',monospace;letter-spacing:0.118px;color:#585860;text-rendering:geometricPrecision;transform:scaleX(0.85);transform-origin:0 0;text-shadow:0.25px 0 0 #585860;">00</div>
<div class="t" style="left:173.70px;top:722.77px;font:normal 12.0px/12px 'Liberation Mono',monospace;letter-spacing:0.118px;color:#585860;text-rendering:geometricPrecision;transform:scaleX(0.85);transform-origin:0 0;text-shadow:0.25px 0 0 #585860;">00</div>
<div class="t" style="left:192.30px;top:722.77px;font:normal 12.0px/12px 'Liberation Mono',monospace;letter-spacing:0.118px;color:#585860;text-rendering:geometricPrecision;transform:scaleX(0.85);transform-origin:0 0;text-shadow:0.25px 0 0 #585860;">00</div>
<div class="t" style="left:210.90px;top:722.77px;font:normal 12.0px/12px 'Liberation Mono',monospace;letter-spacing:0.118px;color:#585860;text-rendering:geometricPrecision;transform:scaleX(0.85);transform-origin:0 0;text-shadow:0.25px 0 0 #585860;">FC</div>
<div class="t" style="left:229.50px;top:722.77px;font:normal 12.0px/12px 'Liberation Mono',monospace;letter-spacing:0.118px;color:#585860;text-rendering:geometricPrecision;transform:scaleX(0.85);transform-origin:0 0;text-shadow:0.25px 0 0 #585860;">CE</div>
<div class="t" style="left:248.10px;top:722.77px;font:normal 12.0px/12px 'Liberation Mono',monospace;letter-spacing:0.118px;color:#585860;text-rendering:geometricPrecision;transform:scaleX(0.85);transform-origin:0 0;text-shadow:0.25px 0 0 #585860;">FC</div>
<div class="t" style="left:266.70px;top:722.77px;font:normal 12.0px/12px 'Liberation Mono',monospace;letter-spacing:0.118px;color:#585860;text-rendering:geometricPrecision;transform:scaleX(0.85);transform-origin:0 0;text-shadow:0.25px 0 0 #585860;">01</div>
<div class="t" style="left:285.30px;top:722.77px;font:normal 12.0px/12px 'Liberation Mono',monospace;letter-spacing:0.118px;color:#585860;text-rendering:geometricPrecision;transform:scaleX(0.85);transform-origin:0 0;text-shadow:0.25px 0 0 #585860;">0B</div>
<div class="t" style="left:303.90px;top:722.77px;font:normal 12.0px/12px 'Liberation Mono',monospace;letter-spacing:0.118px;color:#585860;text-rendering:geometricPrecision;transform:scaleX(0.85);transform-origin:0 0;text-shadow:0.25px 0 0 #585860;">00</div>
<div class="t" style="left:322.50px;top:722.77px;font:normal 12.0px/12px 'Liberation Mono',monospace;letter-spacing:0.118px;color:#585860;text-rendering:geometricPrecision;transform:scaleX(0.85);transform-origin:0 0;text-shadow:0.25px 0 0 #585860;">00</div>
<div class="t" style="left:341.10px;top:722.77px;font:normal 12.0px/12px 'Liberation Mono',monospace;letter-spacing:0.118px;color:#585860;text-rendering:geometricPrecision;transform:scaleX(0.85);transform-origin:0 0;text-shadow:0.25px 0 0 #585860;">00</div>
<div class="t" style="left:403.60px;top:722.77px;font:normal 12.0px/12px 'Liberation Mono',monospace;letter-spacing:0.118px;color:#585860;text-rendering:geometricPrecision;transform:scaleX(0.85);transform-origin:0 0;text-shadow:0.25px 0 0 #585860;">..<span style="color:#8c8c92;text-shadow:none">┼┤</span>...  ?■...</div>
</div></div>
<div style="left:0.00px;top:735.00px;width:598.00px;height:2.00px;background:#6e6e6e;"></div>
<div style="left:599.50px;top:55.00px;width:394.50px;height:14.50px;background:#d8d5ce;"></div>
<div class="t" style="left:603.40px;top:57.91px;font:bold 12.0px/12px 'Liberation Mono',monospace;letter-spacing:-0.289px;color:#222833;text-rendering:geometricPrecision;transform:scaleX(0.9);transform-origin:0 0;text-shadow:0.3px 0 0 #222833;">Registers (FPU)</div>
<div style="left:599.50px;top:69.50px;width:394.50px;height:1.50px;background:#2b3340;"></div>
<div class="t" style="left:603.40px;top:71.91px;font:normal 12.0px/12px 'Liberation Mono',monospace;letter-spacing:0.118px;color:#6a6a72;text-rendering:geometricPrecision;transform:scaleX(0.85);transform-origin:0 0;text-shadow:0.25px 0 0 #6a6a72;">EAX 00000001</div>
<div class="t" style="left:603.40px;top:84.33px;font:normal 12.0px/12px 'Liberation Mono',monospace;letter-spacing:0.118px;color:#6a6a72;text-rendering:geometricPrecision;transform:scaleX(0.85);transform-origin:0 0;text-shadow:0.25px 0 0 #6a6a72;">ECX 0012EB88</div>
<div class="t" style="left:603.40px;top:96.75px;font:normal 12.0px/12px 'Liberation Mono',monospace;letter-spacing:0.118px;color:#6a6a72;text-rendering:geometricPrecision;transform:scaleX(0.85);transform-origin:0 0;text-shadow:0.25px 0 0 #6a6a72;">EDX 50020172</div>
<div class="t" style="left:603.40px;top:109.17px;font:normal 12.0px/12px 'Liberation Mono',monospace;letter-spacing:0.118px;color:#6a6a72;text-rendering:geometricPrecision;transform:scaleX(0.85);transform-origin:0 0;text-shadow:0.25px 0 0 #6a6a72;">EBX 7C802654 kernel32.7C802654</div>
<div class="t" style="left:603.40px;top:121.59px;font:normal 12.0px/12px 'Liberation Mono',monospace;letter-spacing:0.118px;color:#6a6a72;text-rendering:geometricPrecision;transform:scaleX(0.85);transform-origin:0 0;text-shadow:0.25px 0 0 #6a6a72;">ESP 0012EAD4</div>
<div class="t" style="left:603.40px;top:134.01px;font:normal 12.0px/12px 'Liberation Mono',monospace;letter-spacing:0.118px;color:#6a6a72;text-rendering:geometricPrecision;transform:scaleX(0.85);transform-origin:0 0;text-shadow:0.25px 0 0 #6a6a72;">EBP 0012EEA0</div>
<div class="t" style="left:603.40px;top:146.43px;font:normal 12.0px/12px 'Liberation Mono',monospace;letter-spacing:0.118px;color:#6a6a72;text-rendering:geometricPrecision;transform:scaleX(0.85);transform-origin:0 0;text-shadow:0.25px 0 0 #6a6a72;">ESI 029C320A</div>
<div class="t" style="left:603.40px;top:158.85px;font:normal 12.0px/12px 'Liberation Mono',monospace;letter-spacing:0.118px;color:#6a6a72;text-rendering:geometricPrecision;transform:scaleX(0.85);transform-origin:0 0;text-shadow:0.25px 0 0 #6a6a72;">EDI 0012ECE7</div>
<div style="left:624.20px;top:176.17px;width:55.60px;height:12.80px;background:#a4c7ee;"></div>
<div class="t" style="left:603.40px;top:177.48px;font:normal 12.0px/12px 'Liberation Mono',monospace;letter-spacing:0.118px;color:#6a6a72;text-rendering:geometricPrecision;transform:scaleX(0.85);transform-origin:0 0;text-shadow:0.25px 0 0 #6a6a72;">EIP 029C303E</div>
<div class="t" style="left:603.40px;top:196.11px;font:normal 12.0px/12px 'Liberation Mono',monospace;letter-spacing:0.118px;color:#6a6a72;text-rendering:geometricPrecision;transform:scaleX(0.85);transform-origin:0 0;text-shadow:0.25px 0 0 #6a6a72;">C 0  ES 0023 32bit 0(FFFFFFFF)</div>
<div class="t" style="left:603.40px;top:208.53px;font:normal 12.0px/12px 'Liberation Mono',monospace;letter-spacing:0.118px;color:#6a6a72;text-rendering:geometricPrecision;transform:scaleX(0.85);transform-origin:0 0;text-shadow:0.25px 0 0 #6a6a72;">P 0  CS 001B 32bit 0(FFFFFFFF)</div>
<div class="t" style="left:603.40px;top:220.95px;font:normal 12.0px/12px 'Liberation Mono',monospace;letter-spacing:0.118px;color:#6a6a72;text-rendering:geometricPrecision;transform:scaleX(0.85);transform-origin:0 0;text-shadow:0.25px 0 0 #6a6a72;">A 0  SS 0023 32bit 0(FFFFFFFF)</div>
<div class="t" style="left:603.40px;top:233.37px;font:normal 12.0px/12px 'Liberation Mono',monospace;letter-spacing:0.118px;color:#6a6a72;text-rendering:geometricPrecision;transform:scaleX(0.85);transform-origin:0 0;text-shadow:0.25px 0 0 #6a6a72;">Z 0  DS 0023 32bit 0(FFFFFFFF)</div>
<div class="t" style="left:603.40px;top:245.79px;font:normal 12.0px/12px 'Liberation Mono',monospace;letter-spacing:0.118px;color:#6a6a72;text-rendering:geometricPrecision;transform:scaleX(0.85);transform-origin:0 0;text-shadow:0.25px 0 0 #6a6a72;">S 0  FS 003B 32bit 7FFDD000(FFF)</div>
<div class="t" style="left:603.40px;top:258.21px;font:normal 12.0px/12px 'Liberation Mono',monospace;letter-spacing:0.118px;color:#6a6a72;text-rendering:geometricPrecision;transform:scaleX(0.85);transform-origin:0 0;text-shadow:0.25px 0 0 #6a6a72;">T 0  GS 0000 NULL</div>
<div class="t" style="left:603.40px;top:270.63px;font:normal 12.0px/12px 'Liberation Mono',monospace;letter-spacing:0.118px;color:#6a6a72;text-rendering:geometricPrecision;transform:scaleX(0.85);transform-origin:0 0;text-shadow:0.25px 0 0 #6a6a72;">D 0</div>
<div class="t" style="left:603.40px;top:283.05px;font:normal 12.0px/12px 'Liberation Mono',monospace;letter-spacing:0.118px;color:#6a6a72;text-rendering:geometricPrecision;transform:scaleX(0.85);transform-origin:0 0;text-shadow:0.25px 0 0 #6a6a72;">O 0  LastErr ERROR_ALREADY_EXISTS (000000B7)</div>
<div class="t" style="left:603.40px;top:301.68px;font:normal 12.0px/12px 'Liberation Mono',monospace;letter-spacing:0.118px;color:#6a6a72;text-rendering:geometricPrecision;transform:scaleX(0.85);transform-origin:0 0;text-shadow:0.25px 0 0 #6a6a72;">EFL 00000202 (NO,NB,NE,A,NS,PO,GE,G)</div>
<div class="t" style="left:603.40px;top:320.31px;font:normal 12.0px/12px 'Liberation Mono',monospace;letter-spacing:0.118px;color:#6a6a72;text-rendering:geometricPrecision;transform:scaleX(0.85);transform-origin:0 0;text-shadow:0.25px 0 0 #6a6a72;">ST0 empty 2147483392.0000000000</div>
<div class="t" style="left:603.40px;top:332.73px;font:normal 12.0px/12px 'Liberation Mono',monospace;letter-spacing:0.118px;color:#6a6a72;text-rendering:geometricPrecision;transform:scaleX(0.85);transform-origin:0 0;text-shadow:0.25px 0 0 #6a6a72;">ST1 empty 0.0</div>
<div class="t" style="left:603.40px;top:345.15px;font:normal 12.0px/12px 'Liberation Mono',monospace;letter-spacing:0.118px;color:#6a6a72;text-rendering:geometricPrecision;transform:scaleX(0.85);transform-origin:0 0;text-shadow:0.25px 0 0 #6a6a72;">ST2 empty 0.0</div>
<div class="t" style="left:603.40px;top:357.57px;font:normal 12.0px/12px 'Liberation Mono',monospace;letter-spacing:0.118px;color:#6a6a72;text-rendering:geometricPrecision;transform:scaleX(0.85);transform-origin:0 0;text-shadow:0.25px 0 0 #6a6a72;">ST3 empty 235.38456726074218750</div>
<div class="t" style="left:603.40px;top:369.99px;font:normal 12.0px/12px 'Liberation Mono',monospace;letter-spacing:0.118px;color:#6a6a72;text-rendering:geometricPrecision;transform:scaleX(0.85);transform-origin:0 0;text-shadow:0.25px 0 0 #6a6a72;">ST4 empty 235.38456726074218750</div>
<div class="t" style="left:603.40px;top:382.41px;font:normal 12.0px/12px 'Liberation Mono',monospace;letter-spacing:0.118px;color:#6a6a72;text-rendering:geometricPrecision;transform:scaleX(0.85);transform-origin:0 0;text-shadow:0.25px 0 0 #6a6a72;">ST5 empty -1.1258087158203125000</div>
<div class="t" style="left:603.40px;top:394.83px;font:normal 12.0px/12px 'Liberation Mono',monospace;letter-spacing:0.118px;color:#6a6a72;text-rendering:geometricPrecision;transform:scaleX(0.85);transform-origin:0 0;text-shadow:0.25px 0 0 #6a6a72;">ST6 empty 0.0</div>
<div class="t" style="left:603.40px;top:407.25px;font:normal 12.0px/12px 'Liberation Mono',monospace;letter-spacing:0.118px;color:#6a6a72;text-rendering:geometricPrecision;transform:scaleX(0.85);transform-origin:0 0;text-shadow:0.25px 0 0 #6a6a72;">ST7 empty 2.2507750136819518500e-294</div>
<div class="t" style="left:603.40px;top:419.67px;font:normal 12.0px/12px 'Liberation Mono',monospace;letter-spacing:0.118px;color:#6a6a72;text-rendering:geometricPrecision;transform:scaleX(0.85);transform-origin:0 0;text-shadow:0.25px 0 0 #6a6a72;">               3 2 1 0      E S P U O Z D I</div>
<div style="left:600px;top:0;width:394px;height:434px;overflow:hidden"><div style="left:-600px;top:0;width:994px;height:434px">
<div class="t" style="left:603.40px;top:432.59px;font:normal 12.0px/12px 'Liberation Mono',monospace;letter-spacing:0.118px;color:#6a6a72;text-rendering:geometricPrecision;transform:scaleX(0.85);transform-origin:0 0;text-shadow:0.25px 0 0 #6a6a72;">FST 4020  Cond 1 0 0 0  Err 0 0 1 0 0 0 0 0  (GT)</div>
</div></div>
<div style="left:600.00px;top:436.00px;width:55.60px;height:12.42px;background:#2b3340;"></div>
<div style="left:655.60px;top:436.00px;width:323.40px;height:12.42px;background:#a4c7ee;"></div>
<div style="left:655.60px;top:436.00px;width:1.20px;height:300.00px;background:#9a9a9a;"></div>
<div style="left:717.50px;top:436.00px;width:1.20px;height:300.00px;background:#9a9a9a;"></div>
<div class="t" style="left:605.40px;top:437.11px;font:normal 12.0px/12px 'Liberation Mono',monospace;letter-spacing:0.118px;color:#ffffff;text-rendering:geometricPrecision;transform:scaleX(0.85);transform-origin:0 0;text-shadow:0.25px 0 0 #ffffff;">0012EAD4</div>
<div class="t" style="left:667.40px;top:437.11px;font:normal 12.0px/12px 'Liberation Mono',monospace;letter-spacing:0.118px;color:#6a6a72;text-rendering:geometricPrecision;transform:scaleX(0.85);transform-origin:0 0;text-shadow:0.25px 0 0 #6a6a72;">0012EB88</div>
<div class="t" style="left:605.40px;top:449.53px;font:normal 12.0px/12px 'Liberation Mono',monospace;letter-spacing:0.118px;color:#6a6a72;text-rendering:geometricPrecision;transform:scaleX(0.85);transform-origin:0 0;text-shadow:0.25px 0 0 #6a6a72;">0012EAD8</div>
<div class="t" style="left:667.40px;top:449.53px;font:normal 12.0px/12px 'Liberation Mono',monospace;letter-spacing:0.118px;color:#6a6a72;text-rendering:geometricPrecision;transform:scaleX(0.85);transform-origin:0 0;text-shadow:0.25px 0 0 #6a6a72;">00000005</div>
<div class="t" style="left:605.40px;top:461.95px;font:normal 12.0px/12px 'Liberation Mono',monospace;letter-spacing:0.118px;color:#6a6a72;text-rendering:geometricPrecision;transform:scaleX(0.85);transform-origin:0 0;text-shadow:0.25px 0 0 #6a6a72;">0012EADC</div>
<div class="t" style="left:667.40px;top:461.95px;font:normal 12.0px/12px 'Liberation Mono',monospace;letter-spacing:0.118px;color:#6a6a72;text-rendering:geometricPrecision;transform:scaleX(0.85);transform-origin:0 0;text-shadow:0.25px 0 0 #6a6a72;">500201BE</div>
<div class="t" style="left:605.40px;top:474.37px;font:normal 12.0px/12px 'Liberation Mono',monospace;letter-spacing:0.118px;color:#6a6a72;text-rendering:geometricPrecision;transform:scaleX(0.85);transform-origin:0 0;text-shadow:0.25px 0 0 #6a6a72;">0012EAE0</div>
<div class="t" style="left:667.40px;top:474.37px;font:normal 12.0px/12px 'Liberation Mono',monospace;letter-spacing:0.118px;color:#6a6a72;text-rendering:geometricPrecision;transform:scaleX(0.85);transform-origin:0 0;text-shadow:0.25px 0 0 #6a6a72;">029D99F1</div>
<div class="t" style="left:605.40px;top:486.79px;font:normal 12.0px/12px 'Liberation Mono',monospace;letter-spacing:0.118px;color:#6a6a72;text-rendering:geometricPrecision;transform:scaleX(0.85);transform-origin:0 0;text-shadow:0.25px 0 0 #6a6a72;">0012EAE4</div>
<div class="t" style="left:667.40px;top:486.79px;font:normal 12.0px/12px 'Liberation Mono',monospace;letter-spacing:0.118px;color:#6a6a72;text-rendering:geometricPrecision;transform:scaleX(0.85);transform-origin:0 0;text-shadow:0.25px 0 0 #6a6a72;">7C802654</div>
<div class="t" style="left:722.40px;top:486.79px;font:normal 12.0px/12px 'Liberation Mono',monospace;letter-spacing:0.118px;color:#6a6a72;text-rendering:geometricPrecision;transform:scaleX(0.85);transform-origin:0 0;text-shadow:0.25px 0 0 #6a6a72;">kernel32.7C802654</div>
<div class="t" style="left:605.40px;top:499.21px;font:normal 12.0px/12px 'Liberation Mono',monospace;letter-spacing:0.118px;color:#6a6a72;text-rendering:geometricPrecision;transform:scaleX(0.85);transform-origin:0 0;text-shadow:0.25px 0 0 #6a6a72;">0012EAE8</div>
<div class="t" style="left:667.40px;top:499.21px;font:normal 12.0px/12px 'Liberation Mono',monospace;letter-spacing:0.118px;color:#6a6a72;text-rendering:geometricPrecision;transform:scaleX(0.85);transform-origin:0 0;text-shadow:0.25px 0 0 #6a6a72;">00000000</div>
<div class="t" style="left:605.40px;top:511.63px;font:normal 12.0px/12px 'Liberation Mono',monospace;letter-spacing:0.118px;color:#6a6a72;text-rendering:geometricPrecision;transform:scaleX(0.85);transform-origin:0 0;text-shadow:0.25px 0 0 #6a6a72;">0012EAEC</div>
<div class="t" style="left:667.40px;top:511.63px;font:normal 12.0px/12px 'Liberation Mono',monospace;letter-spacing:0.118px;color:#6a6a72;text-rendering:geometricPrecision;transform:scaleX(0.85);transform-origin:0 0;text-shadow:0.25px 0 0 #6a6a72;">00000000</div>
<div class="t" style="left:605.40px;top:524.05px;font:normal 12.0px/12px 'Liberation Mono',monospace;letter-spacing:0.118px;color:#6a6a72;text-rendering:geometricPrecision;transform:scaleX(0.85);transform-origin:0 0;text-shadow:0.25px 0 0 #6a6a72;">0012EAF0</div>
<div class="t" style="left:667.40px;top:524.05px;font:normal 12.0px/12px 'Liberation Mono',monospace;letter-spacing:0.118px;color:#6a6a72;text-rendering:geometricPrecision;transform:scaleX(0.85);transform-origin:0 0;text-shadow:0.25px 0 0 #6a6a72;">00000000</div>
<div class="t" style="left:605.40px;top:536.47px;font:normal 12.0px/12px 'Liberation Mono',monospace;letter-spacing:0.118px;color:#6a6a72;text-rendering:geometricPrecision;transform:scaleX(0.85);transform-origin:0 0;text-shadow:0.25px 0 0 #6a6a72;">0012EAF4</div>
<div class="t" style="left:667.40px;top:536.47px;font:normal 12.0px/12px 'Liberation Mono',monospace;letter-spacing:0.118px;color:#6a6a72;text-rendering:geometricPrecision;transform:scaleX(0.85);transform-origin:0 0;text-shadow:0.25px 0 0 #6a6a72;">00000000</div>
<div class="t" style="left:605.40px;top:548.89px;font:normal 12.0px/12px 'Liberation Mono',monospace;letter-spacing:0.118px;color:#6a6a72;text-rendering:geometricPrecision;transform:scaleX(0.85);transform-origin:0 0;text-shadow:0.25px 0 0 #6a6a72;">0012EAF8</div>
<div class="t" style="left:667.40px;top:548.89px;font:normal 12.0px/12px 'Liberation Mono',monospace;letter-spacing:0.118px;color:#6a6a72;text-rendering:geometricPrecision;transform:scaleX(0.85);transform-origin:0 0;text-shadow:0.25px 0 0 #6a6a72;">00000000</div>
<div class="t" style="left:605.40px;top:561.31px;font:normal 12.0px/12px 'Liberation Mono',monospace;letter-spacing:0.118px;color:#6a6a72;text-rendering:geometricPrecision;transform:scaleX(0.85);transform-origin:0 0;text-shadow:0.25px 0 0 #6a6a72;">0012EAFC</div>
<div class="t" style="left:667.40px;top:561.31px;font:normal 12.0px/12px 'Liberation Mono',monospace;letter-spacing:0.118px;color:#6a6a72;text-rendering:geometricPrecision;transform:scaleX(0.85);transform-origin:0 0;text-shadow:0.25px 0 0 #6a6a72;">00000000</div>
<div class="t" style="left:605.40px;top:573.73px;font:normal 12.0px/12px 'Liberation Mono',monospace;letter-spacing:0.118px;color:#6a6a72;text-rendering:geometricPrecision;transform:scaleX(0.85);transform-origin:0 0;text-shadow:0.25px 0 0 #6a6a72;">0012EB00</div>
<div class="t" style="left:667.40px;top:573.73px;font:normal 12.0px/12px 'Liberation Mono',monospace;letter-spacing:0.118px;color:#6a6a72;text-rendering:geometricPrecision;transform:scaleX(0.85);transform-origin:0 0;text-shadow:0.25px 0 0 #6a6a72;">00000000</div>
<div class="t" style="left:605.40px;top:586.15px;font:normal 12.0px/12px 'Liberation Mono',monospace;letter-spacing:0.118px;color:#6a6a72;text-rendering:geometricPrecision;transform:scaleX(0.85);transform-origin:0 0;text-shadow:0.25px 0 0 #6a6a72;">0012EB04</div>
<div class="t" style="left:667.40px;top:586.15px;font:normal 12.0px/12px 'Liberation Mono',monospace;letter-spacing:0.118px;color:#6a6a72;text-rendering:geometricPrecision;transform:scaleX(0.85);transform-origin:0 0;text-shadow:0.25px 0 0 #6a6a72;">00000000</div>
<div class="t" style="left:605.40px;top:598.57px;font:normal 12.0px/12px 'Liberation Mono',monospace;letter-spacing:0.118px;color:#6a6a72;text-rendering:geometricPrecision;transform:scaleX(0.85);transform-origin:0 0;text-shadow:0.25px 0 0 #6a6a72;">0012EB08</div>
<div class="t" style="left:667.40px;top:598.57px;font:normal 12.0px/12px 'Liberation Mono',monospace;letter-spacing:0.118px;color:#6a6a72;text-rendering:geometricPrecision;transform:scaleX(0.85);transform-origin:0 0;text-shadow:0.25px 0 0 #6a6a72;">00000000</div>
<div class="t" style="left:605.40px;top:610.99px;font:normal 12.0px/12px 'Liberation Mono',monospace;letter-spacing:0.118px;color:#6a6a72;text-rendering:geometricPrecision;transform:scaleX(0.85);transform-origin:0 0;text-shadow:0.25px 0 0 #6a6a72;">0012EB0C</div>
<div class="t" style="left:667.40px;top:610.99px;font:normal 12.0px/12px 'Liberation Mono',monospace;letter-spacing:0.118px;color:#6a6a72;text-rendering:geometricPrecision;transform:scaleX(0.85);transform-origin:0 0;text-shadow:0.25px 0 0 #6a6a72;">00000000</div>
<div class="t" style="left:605.40px;top:623.41px;font:normal 12.0px/12px 'Liberation Mono',monospace;letter-spacing:0.118px;color:#6a6a72;text-rendering:geometricPrecision;transform:scaleX(0.85);transform-origin:0 0;text-shadow:0.25px 0 0 #6a6a72;">0012EB10</div>
<div class="t" style="left:667.40px;top:623.41px;font:normal 12.0px/12px 'Liberation Mono',monospace;letter-spacing:0.118px;color:#6a6a72;text-rendering:geometricPrecision;transform:scaleX(0.85);transform-origin:0 0;text-shadow:0.25px 0 0 #6a6a72;">00000000</div>
<div class="t" style="left:605.40px;top:635.83px;font:normal 12.0px/12px 'Liberation Mono',monospace;letter-spacing:0.118px;color:#6a6a72;text-rendering:geometricPrecision;transform:scaleX(0.85);transform-origin:0 0;text-shadow:0.25px 0 0 #6a6a72;">0012EB14</div>
<div class="t" style="left:667.40px;top:635.83px;font:normal 12.0px/12px 'Liberation Mono',monospace;letter-spacing:0.118px;color:#6a6a72;text-rendering:geometricPrecision;transform:scaleX(0.85);transform-origin:0 0;text-shadow:0.25px 0 0 #6a6a72;">00000000</div>
<div class="t" style="left:605.40px;top:648.25px;font:normal 12.0px/12px 'Liberation Mono',monospace;letter-spacing:0.118px;color:#6a6a72;text-rendering:geometricPrecision;transform:scaleX(0.85);transform-origin:0 0;text-shadow:0.25px 0 0 #6a6a72;">0012EB18</div>
<div class="t" style="left:667.40px;top:648.25px;font:normal 12.0px/12px 'Liberation Mono',monospace;letter-spacing:0.118px;color:#6a6a72;text-rendering:geometricPrecision;transform:scaleX(0.85);transform-origin:0 0;text-shadow:0.25px 0 0 #6a6a72;">00000000</div>
<div class="t" style="left:605.40px;top:660.67px;font:normal 12.0px/12px 'Liberation Mono',monospace;letter-spacing:0.118px;color:#6a6a72;text-rendering:geometricPrecision;transform:scaleX(0.85);transform-origin:0 0;text-shadow:0.25px 0 0 #6a6a72;">0012EB1C</div>
<div class="t" style="left:667.40px;top:660.67px;font:normal 12.0px/12px 'Liberation Mono',monospace;letter-spacing:0.118px;color:#6a6a72;text-rendering:geometricPrecision;transform:scaleX(0.85);transform-origin:0 0;text-shadow:0.25px 0 0 #6a6a72;">00000000</div>
<div class="t" style="left:605.40px;top:673.09px;font:normal 12.0px/12px 'Liberation Mono',monospace;letter-spacing:0.118px;color:#6a6a72;text-rendering:geometricPrecision;transform:scaleX(0.85);transform-origin:0 0;text-shadow:0.25px 0 0 #6a6a72;">0012EB20</div>
<div class="t" style="left:667.40px;top:673.09px;font:normal 12.0px/12px 'Liberation Mono',monospace;letter-spacing:0.118px;color:#6a6a72;text-rendering:geometricPrecision;transform:scaleX(0.85);transform-origin:0 0;text-shadow:0.25px 0 0 #6a6a72;">00000000</div>
<div class="t" style="left:605.40px;top:685.51px;font:normal 12.0px/12px 'Liberation Mono',monospace;letter-spacing:0.118px;color:#6a6a72;text-rendering:geometricPrecision;transform:scaleX(0.85);transform-origin:0 0;text-shadow:0.25px 0 0 #6a6a72;">0012EB24</div>
<div class="t" style="left:667.40px;top:685.51px;font:normal 12.0px/12px 'Liberation Mono',monospace;letter-spacing:0.118px;color:#6a6a72;text-rendering:geometricPrecision;transform:scaleX(0.85);transform-origin:0 0;text-shadow:0.25px 0 0 #6a6a72;">00000000</div>
<div class="t" style="left:605.40px;top:697.93px;font:normal 12.0px/12px 'Liberation Mono',monospace;letter-spacing:0.118px;color:#6a6a72;text-rendering:geometricPrecision;transform:scaleX(0.85);transform-origin:0 0;text-shadow:0.25px 0 0 #6a6a72;">0012EB28</div>
<div class="t" style="left:667.40px;top:697.93px;font:normal 12.0px/12px 'Liberation Mono',monospace;letter-spacing:0.118px;color:#6a6a72;text-rendering:geometricPrecision;transform:scaleX(0.85);transform-origin:0 0;text-shadow:0.25px 0 0 #6a6a72;">00000000</div>
<div class="t" style="left:605.40px;top:710.35px;font:normal 12.0px/12px 'Liberation Mono',monospace;letter-spacing:0.118px;color:#6a6a72;text-rendering:geometricPrecision;transform:scaleX(0.85);transform-origin:0 0;text-shadow:0.25px 0 0 #6a6a72;">0012EB2C</div>
<div class="t" style="left:667.40px;top:710.35px;font:normal 12.0px/12px 'Liberation Mono',monospace;letter-spacing:0.118px;color:#6a6a72;text-rendering:geometricPrecision;transform:scaleX(0.85);transform-origin:0 0;text-shadow:0.25px 0 0 #6a6a72;">00000000</div>
<div class="t" style="left:605.40px;top:722.77px;font:normal 12.0px/12px 'Liberation Mono',monospace;letter-spacing:0.118px;color:#6a6a72;text-rendering:geometricPrecision;transform:scaleX(0.85);transform-origin:0 0;text-shadow:0.25px 0 0 #6a6a72;">0012EB30</div>
<div class="t" style="left:667.40px;top:722.77px;font:normal 12.0px/12px 'Liberation Mono',monospace;letter-spacing:0.118px;color:#6a6a72;text-rendering:geometricPrecision;transform:scaleX(0.85);transform-origin:0 0;text-shadow:0.25px 0 0 #6a6a72;">00000000</div>
<div style="left:598.00px;top:735.00px;width:396.00px;height:2.00px;background:#6e6e6e;"></div>
<div style="left:992.50px;top:55.00px;width:1.50px;height:682.00px;background:#8a8a8a;"></div>
<svg style="position:absolute;left:0;top:0" width="994" height="775" viewBox="0 0 994 775"><rect x="586" y="56" width="10" height="11.5" fill="#a6c8f0"/><rect x="587" y="68.1" width="9" height="1" fill="#a6c8f0"/><path d="M587.8 63.55 L591.0 60.15 L594.2 63.55" fill="none" stroke="#1e2430" stroke-width="1.4"/><rect x="586" y="102" width="10" height="11" fill="#a6c8f0"/><rect x="587" y="113.6" width="9" height="1" fill="#a6c8f0"/><path d="M588.5 104.5 H592 M588.5 104.5 V110" stroke="#e4eefa" stroke-width="1" fill="none"/><rect x="586" y="399" width="10" height="11" fill="#a6c8f0"/><rect x="587" y="410.6" width="9" height="1" fill="#a6c8f0"/><path d="M587.8 402.9 L591.0 406.3 L594.2 402.9" fill="none" stroke="#1e2430" stroke-width="1.4"/><rect x="587" y="437" width="10" height="11.5" fill="#a6c8f0"/><rect x="588" y="449.1" width="9" height="1" fill="#a6c8f0"/><path d="M588.8 444.55 L592.0 441.15 L595.2 444.55" fill="none" stroke="#1e2430" stroke-width="1.4"/><rect x="587" y="677" width="10" height="11" fill="#a6c8f0"/><rect x="588" y="688.6" width="9" height="1" fill="#a6c8f0"/><path d="M589.5 679.5 H593 M589.5 679.5 V685" stroke="#e4eefa" stroke-width="1" fill="none"/><rect x="587" y="722" width="10" height="11" fill="#a6c8f0"/><rect x="588" y="733.6" width="9" height="1" fill="#a6c8f0"/><path d="M588.8 725.9 L592.0 729.3 L595.2 725.9" fill="none" stroke="#1e2430" stroke-width="1.4"/><path d="M856.5 59.3 L852.1 62.6 L856.5 65.9" fill="none" stroke="#1e2430" stroke-width="1.5"/><path d="M887.8 59.3 L883.4 62.6 L887.8 65.9" fill="none" stroke="#1e2430" stroke-width="1.5"/><path d="M918.3 59.3 L913.9 62.6 L918.3 65.9" fill="none" stroke="#1e2430" stroke-width="1.5"/><path d="M949.7 59.3 L945.3000000000001 62.6 L949.7 65.9" fill="none" stroke="#1e2430" stroke-width="1.5"/><path d="M981 59.3 L976.6 62.6 L981 65.9" fill="none" stroke="#1e2430" stroke-width="1.5"/><rect x="981" y="437" width="10" height="10.5" fill="#a6c8f0"/><rect x="982" y="448.1" width="9" height="1" fill="#a6c8f0"/><path d="M982.8 444.05 L986.0 440.65 L989.2 444.05" fill="none" stroke="#1e2430" stroke-width="1.4"/><rect x="981" y="677" width="10" height="11" fill="#a6c8f0"/><rect x="982" y="688.6" width="9" height="1" fill="#a6c8f0"/><path d="M983.5 679.5 H987 M983.5 679.5 V685" stroke="#e4eefa" stroke-width="1" fill="none"/><rect x="981" y="722.5" width="10" height="11" fill="#a6c8f0"/><rect x="982" y="734.1" width="9" height="1" fill="#a6c8f0"/><path d="M982.8 726.4 L986.0 729.8 L989.2 726.4" fill="none" stroke="#1e2430" stroke-width="1.4"/></svg>
<svg style="position:absolute;left:0;top:0" width="994" height="775" viewBox="0 0 994 775"><rect x="0" y="737" width="994" height="38" fill="#d8d5ce"/><text x="3" y="752" textLength="44" lengthAdjust="spacingAndGlyphs" font-family="Liberation Sans" font-size="11" fill="#1e1e28">Command</text><rect x="49" y="739" width="153" height="16" fill="#fffef2"/><path d="M49.5 755 V739.5 H202" fill="none" stroke="#7a7a7a" stroke-width="1"/><path d="M50.5 754 V740.5 H201" fill="none" stroke="#404040" stroke-width="1"/><path d="M201.5 739.5 V755 H49" fill="none" stroke="#ffffff" stroke-width="1"/><rect x="189.5" y="742" width="10.5" height="11.5" fill="#d4d2cc"/><path d="M189.5 753.5 H200 V742" fill="none" stroke="#808080" stroke-width="1"/><path d="M191.5 745.5 H198 L194.75 749 Z" fill="#1e2430"/><rect x="205" y="739" width="787" height="15" fill="#d8d5ce"/><path d="M205.5 754 V739.5 H991" fill="none" stroke="#8a8a8a" stroke-width="1"/><path d="M991.5 739.5 V754.5 H205" fill="none" stroke="#ffffff" stroke-width="1"/><path d="M204 755.5 V738 " fill="none" stroke="#ffffff" stroke-width="1"/><rect x="0" y="756" width="994" height="1" fill="#f6f4ec"/><path d="M2.5 769.5 V757.5 H968" fill="none" stroke="#8a8a8a" stroke-width="1"/><path d="M968.5 757.5 V769.5 H2" fill="none" stroke="#ffffff" stroke-width="1"/><path d="M970.5 769.5 V757.5 H991.5" fill="none" stroke="#8a8a8a" stroke-width="1"/><path d="M991.5 757.5 V769.5 H970" fill="none" stroke="#ffffff" stroke-width="1"/><text x="4" y="767" textLength="163" lengthAdjust="spacingAndGlyphs" font-family="Liberation Sans" font-size="10.5" fill="#1e1e28">Start:12EB88 End:12EB88 Value:445C3A43</text><rect x="0" y="771" width="994" height="4" fill="#0e9af0"/><rect x="0" y="771" width="72" height="4" fill="#8a8a8a"/><rect x="892" y="772" width="1" height="3" fill="#223"/></svg>
</body></html>
